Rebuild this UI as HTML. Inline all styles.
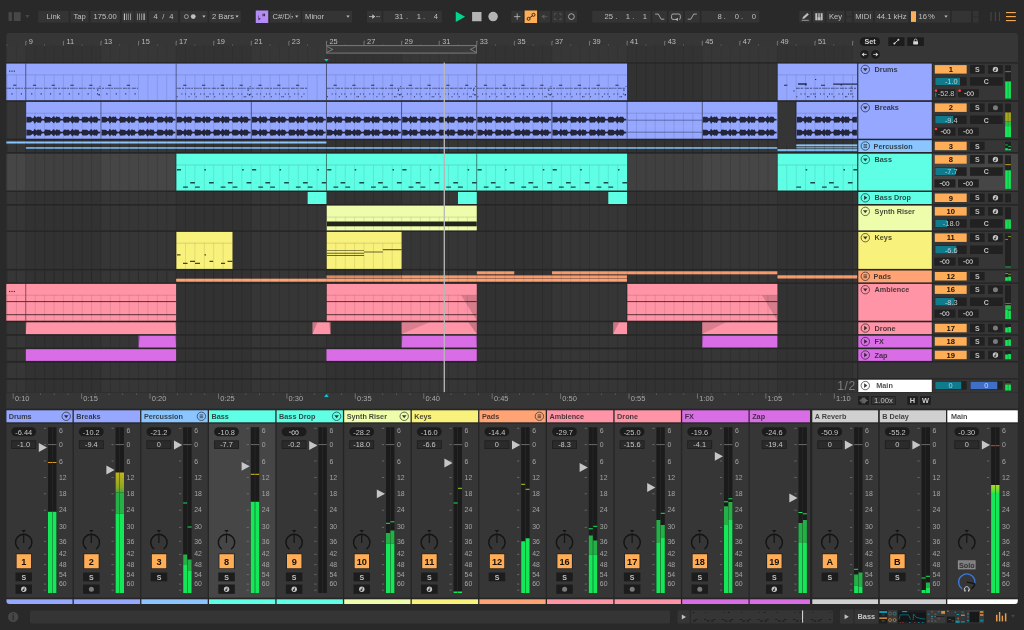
<!DOCTYPE html>
<html lang="en"><head><meta charset="utf-8"><title>Live Set</title>
<style>
html,body{margin:0;padding:0;background:#292929;}
body{width:1024px;height:630px;overflow:hidden;position:relative;font-family:"Liberation Sans", sans-serif;}
.sec{position:absolute;left:0;width:1024px;overflow:hidden;will-change:transform;}
svg{display:block;}
svg text{font-family:"Liberation Sans", sans-serif;}
</style></head><body>
<div id="topbar" class="sec" style="top:0px;height:33px"><svg width="1024" height="33" viewBox="0 0 1024 33">
<rect x="0.00" y="0.00" width="1024.00" height="33.00" fill="#292929"/>
<rect x="8.50" y="12.20" width="3.40" height="8.80" fill="#474747"/>
<rect x="13.80" y="12.20" width="6.90" height="8.80" fill="#474747"/>
<polygon points="25.30,14.95 29.50,14.95 27.40,18.25" fill="#474747"/>
<rect x="38.20" y="10.80" width="30.50" height="11.80" fill="#343434"/>
<text x="53.45" y="18.85" font-size="7.6" fill="#c0c0c0" text-anchor="middle">Link</text>
<rect x="70.40" y="10.80" width="18.30" height="11.80" fill="#343434"/>
<text x="79.55" y="18.85" font-size="7.6" fill="#c0c0c0" text-anchor="middle">Tap</text>
<rect x="90.50" y="10.80" width="29.25" height="11.80" fill="#343434"/>
<text x="105.12" y="18.85" font-size="7.6" fill="#c0c0c0" text-anchor="middle">175.00</text>
<rect x="122.00" y="10.80" width="11.90" height="11.80" fill="#343434"/>
<rect x="123.90" y="13.50" width="1.10" height="6.50" fill="#c0c0c0"/>
<rect x="126.00" y="13.50" width="0.60" height="6.50" fill="#c0c0c0"/>
<rect x="127.90" y="13.50" width="0.60" height="6.50" fill="#c0c0c0"/>
<rect x="130.10" y="13.50" width="0.70" height="6.50" fill="#c0c0c0"/>
<rect x="135.10" y="10.80" width="11.90" height="11.80" fill="#343434"/>
<rect x="137.00" y="13.50" width="0.60" height="6.50" fill="#c0c0c0"/>
<rect x="139.20" y="13.50" width="0.60" height="6.50" fill="#c0c0c0"/>
<rect x="141.40" y="13.50" width="0.70" height="6.50" fill="#c0c0c0"/>
<rect x="143.50" y="13.50" width="1.20" height="6.50" fill="#c0c0c0"/>
<rect x="148.90" y="10.80" width="29.10" height="11.80" fill="#343434"/>
<text x="155.60" y="18.85" font-size="7.6" fill="#c0c0c0" text-anchor="middle">4</text>
<text x="163.30" y="18.85" font-size="7.6" fill="#c0c0c0" text-anchor="middle">/</text>
<text x="171.30" y="18.85" font-size="7.6" fill="#c0c0c0" text-anchor="middle">4</text>
<rect x="180.10" y="10.80" width="27.50" height="11.80" fill="#343434"/>
<circle cx="186.40" cy="16.60" r="2.00" fill="none" stroke="#c0c0c0" stroke-width="0.7"/>
<circle cx="193.25" cy="16.60" r="2.40" fill="#c0c0c0"/>
<polygon points="202.30,15.60 205.50,15.60 203.90,17.80" fill="#c0c0c0"/>
<rect x="209.25" y="10.80" width="31.50" height="11.80" fill="#343434"/>
<text x="212.00" y="18.85" font-size="7.6" fill="#c0c0c0">2 Bars</text>
<polygon points="235.40,15.60 238.60,15.60 237.00,17.80" fill="#c0c0c0"/>
<rect x="255.75" y="10.50" width="12.50" height="12.50" fill="#b58bf7"/>
<text x="257.90" y="20.30" font-size="5.6" fill="#1a1a1a" font-weight="bold">♭</text>
<rect x="262.60" y="13.70" width="0.90" height="2.50" fill="#1a1a1a"/>
<rect x="263.90" y="13.70" width="0.90" height="2.50" fill="#1a1a1a"/>
<rect x="270.10" y="10.80" width="30.65" height="11.80" fill="#343434"/>
<text x="272.60" y="18.85" font-size="7.6" fill="#c0c0c0">C#/D</text>
<text x="290.40" y="18.85" font-size="7.6" fill="#c0c0c0" font-family='"DejaVu Sans", sans-serif' clip-path="url(#cflat)">♭</text>
<clipPath id="cflat"><rect x="288" y="10" width="5.2" height="13"/></clipPath>
<polygon points="295.15,15.60 298.35,15.60 296.75,17.80" fill="#c0c0c0"/>
<rect x="302.25" y="10.80" width="49.75" height="11.80" fill="#343434"/>
<text x="305.10" y="18.85" font-size="7.6" fill="#c0c0c0">Minor</text>
<polygon points="346.40,15.60 349.60,15.60 348.00,17.80" fill="#c0c0c0"/>
<rect x="367.00" y="10.80" width="14.75" height="11.80" fill="#343434"/>
<line x1="369.00" y1="16.60" x2="374.40" y2="16.60" stroke="#c0c0c0" stroke-width="0.8"/>
<polygon points="372.30,14.30 375.20,16.60 372.30,18.90" fill="#c0c0c0"/>
<line x1="376.20" y1="16.60" x2="379.80" y2="16.60" stroke="#c0c0c0" stroke-width="0.7" stroke-dasharray="1.6 0.6"/>
<rect x="383.25" y="10.80" width="58.50" height="11.80" fill="#343434"/>
<text x="403.30" y="18.85" font-size="7.6" fill="#c0c0c0" text-anchor="end">31</text>
<text x="407.00" y="18.85" font-size="7.6" fill="#c0c0c0" text-anchor="middle">.</text>
<text x="418.90" y="18.85" font-size="7.6" fill="#c0c0c0" text-anchor="middle">1</text>
<text x="424.00" y="18.85" font-size="7.6" fill="#c0c0c0" text-anchor="middle">.</text>
<text x="435.75" y="18.85" font-size="7.6" fill="#c0c0c0" text-anchor="middle">4</text>
<polygon points="455.75,11.50 465.10,16.70 455.75,21.90" fill="#03d58f"/>
<rect x="472.10" y="12.00" width="9.40" height="9.25" fill="#b4b4b4"/>
<circle cx="493.10" cy="16.60" r="4.75" fill="#b4b4b4"/>
<rect x="511.25" y="10.80" width="11.75" height="11.80" fill="#343434"/>
<line x1="514.10" y1="16.60" x2="520.30" y2="16.60" stroke="#c0c0c0" stroke-width="0.8"/>
<line x1="517.20" y1="13.50" x2="517.20" y2="19.70" stroke="#c0c0c0" stroke-width="0.8"/>
<rect x="524.60" y="10.50" width="12.50" height="12.50" fill="#ffad56"/>
<circle cx="528.60" cy="18.80" r="1.50" fill="none" stroke="#2a2012" stroke-width="0.9"/>
<circle cx="533.50" cy="14.80" r="1.50" fill="none" stroke="#2a2012" stroke-width="0.9"/>
<line x1="529.60" y1="17.80" x2="532.50" y2="15.80" stroke="#2a2012" stroke-width="0.9"/>
<rect x="538.75" y="10.80" width="11.50" height="11.80" fill="#343434"/>
<line x1="543.00" y1="16.60" x2="547.50" y2="16.60" stroke="#5a5a5a" stroke-width="0.8"/>
<polygon points="541.30,16.60 544.50,14.30 544.50,18.90" fill="#5a5a5a"/>
<rect x="551.90" y="10.80" width="11.85" height="11.80" fill="#343434"/>
<path d="M554.60,15.50 L554.60,13.70 L556.40,13.70 M561.00,15.50 L561.00,13.70 L559.20,13.70 M554.60,17.80 L554.60,19.60 L556.40,19.60 M561.00,17.80 L561.00,19.60 L559.20,19.60 " fill="none" stroke="#5a5a5a" stroke-width="0.8"/>
<rect x="565.25" y="10.80" width="11.85" height="11.80" fill="#343434"/>
<circle cx="571.40" cy="16.60" r="2.90" fill="none" stroke="#c0c0c0" stroke-width="0.8"/>
<rect x="592.25" y="10.80" width="58.50" height="11.80" fill="#343434"/>
<text x="612.90" y="18.85" font-size="7.6" fill="#c0c0c0" text-anchor="end">25</text>
<text x="616.25" y="18.85" font-size="7.6" fill="#c0c0c0" text-anchor="middle">.</text>
<text x="627.90" y="18.85" font-size="7.6" fill="#c0c0c0" text-anchor="middle">1</text>
<text x="633.25" y="18.85" font-size="7.6" fill="#c0c0c0" text-anchor="middle">.</text>
<text x="644.75" y="18.85" font-size="7.6" fill="#c0c0c0" text-anchor="middle">1</text>
<rect x="652.25" y="10.80" width="14.65" height="11.80" fill="#343434"/>
<path d="M655.2,14.1 L658.3,14.1 L661.2,19.2 L664.3,19.2" fill="none" stroke="#c0c0c0" stroke-width="0.8"/>
<rect x="668.50" y="10.80" width="14.60" height="11.80" fill="#343434"/>
<path d="M677,19.4 L673,19.4 Q671.6,19.4 671.6,18 L671.6,15.5 Q671.6,14 673,14 L678.8,14 Q680.3,14 680.3,15.5 L680.3,18 Q680.3,19.4 679.3,19.4" fill="none" stroke="#c0c0c0" stroke-width="0.8"/>
<polygon points="675.30,19.40 677.90,17.70 677.90,21.10" fill="#c0c0c0"/>
<rect x="684.75" y="10.80" width="15.00" height="11.80" fill="#343434"/>
<path d="M687.7,19.2 L690.8,19.2 L693.7,14.1 L696.8,14.1" fill="none" stroke="#c0c0c0" stroke-width="0.8"/>
<rect x="701.40" y="10.80" width="57.85" height="11.80" fill="#343434"/>
<text x="719.50" y="18.85" font-size="7.6" fill="#c0c0c0" text-anchor="middle">8</text>
<text x="724.90" y="18.85" font-size="7.6" fill="#c0c0c0" text-anchor="middle">.</text>
<text x="736.75" y="18.85" font-size="7.6" fill="#c0c0c0" text-anchor="middle">0</text>
<text x="742.00" y="18.85" font-size="7.6" fill="#c0c0c0" text-anchor="middle">.</text>
<text x="753.90" y="18.85" font-size="7.6" fill="#c0c0c0" text-anchor="middle">0</text>
<rect x="799.25" y="10.80" width="11.75" height="11.80" fill="#343434"/>
<polygon points="802.40,18.90 802.90,17.00 807.30,12.90 808.90,14.40 804.40,18.60" fill="#c0c0c0"/>
<line x1="801.60" y1="20.30" x2="808.80" y2="20.30" stroke="#c0c0c0" stroke-width="0.7"/>
<rect x="813.00" y="10.80" width="11.75" height="11.80" fill="#343434"/>
<rect x="815.30" y="13.20" width="7.30" height="7.10" fill="#c0c0c0"/>
<rect x="817.30" y="13.20" width="1.00" height="4.20" fill="#343434"/>
<rect x="819.70" y="13.20" width="1.00" height="4.20" fill="#343434"/>
<rect x="817.60" y="17.40" width="0.40" height="2.90" fill="#343434"/>
<rect x="820.00" y="17.40" width="0.40" height="2.90" fill="#343434"/>
<rect x="826.40" y="10.80" width="18.10" height="11.80" fill="#343434"/>
<text x="835.45" y="18.85" font-size="7.6" fill="#c0c0c0" text-anchor="middle">Key</text>
<rect x="846.10" y="11.00" width="5.90" height="5.50" fill="#343434"/>
<rect x="846.10" y="17.25" width="5.90" height="5.25" fill="#343434"/>
<rect x="853.50" y="10.80" width="19.50" height="11.80" fill="#343434"/>
<text x="863.25" y="18.85" font-size="7.6" fill="#c0c0c0" text-anchor="middle">MIDI</text>
<rect x="874.75" y="10.80" width="33.75" height="11.80" fill="#343434"/>
<text x="891.62" y="18.85" font-size="7.6" fill="#c0c0c0" text-anchor="middle">44.1 kHz</text>
<rect x="910.40" y="10.80" width="39.60" height="11.80" fill="#343434"/>
<rect x="911.00" y="11.25" width="5.00" height="10.65" fill="#ffad56"/>
<text x="918.50" y="18.85" font-size="7.6" fill="#c0c0c0">16</text>
<text x="928.00" y="18.85" font-size="7.6" fill="#c0c0c0">%</text>
<polygon points="944.40,15.60 947.60,15.60 946.00,17.80" fill="#c0c0c0"/>
<rect x="951.60" y="10.80" width="19.40" height="11.80" fill="#343434"/>
<rect x="972.90" y="11.00" width="5.60" height="5.50" fill="#343434"/>
<rect x="972.90" y="17.25" width="5.60" height="5.25" fill="#343434"/>
<line x1="991.00" y1="11.90" x2="991.00" y2="21.00" stroke="#494949" stroke-width="1.0"/>
<line x1="995.30" y1="11.90" x2="995.30" y2="21.00" stroke="#494949" stroke-width="1.0"/>
<line x1="999.40" y1="11.90" x2="999.40" y2="21.00" stroke="#494949" stroke-width="1.0"/>
<line x1="1006.00" y1="12.60" x2="1015.80" y2="12.60" stroke="#ffad56" stroke-width="1.1"/>
<line x1="1006.00" y1="16.60" x2="1015.80" y2="16.60" stroke="#ffad56" stroke-width="1.1"/>
<line x1="1006.00" y1="20.60" x2="1015.80" y2="20.60" stroke="#ffad56" stroke-width="1.1"/>
</svg></div>
<div id="arrangement" class="sec" style="top:33px;height:376px"><svg width="1024" height="376" viewBox="0 33 1024 376">
<rect x="6.30" y="33.10" width="1011.70" height="386.90" rx="3" fill="#363636"/>
<rect x="6.30" y="45.50" width="850.90" height="16.80" fill="#333333"/>
<rect x="6.30" y="45.50" width="19.50" height="16.80" fill="#fff" fill-opacity="0.022"/>
<rect x="100.96" y="45.50" width="75.16" height="16.80" fill="#fff" fill-opacity="0.022"/>
<rect x="251.28" y="45.50" width="75.16" height="16.80" fill="#fff" fill-opacity="0.022"/>
<rect x="401.60" y="45.50" width="75.16" height="16.80" fill="#fff" fill-opacity="0.022"/>
<rect x="551.92" y="45.50" width="75.16" height="16.80" fill="#fff" fill-opacity="0.022"/>
<rect x="702.24" y="45.50" width="75.16" height="16.80" fill="#fff" fill-opacity="0.022"/>
<rect x="852.56" y="45.50" width="4.64" height="16.80" fill="#fff" fill-opacity="0.022"/>
<path d="M7.01,45.50V62.30M16.41,45.50V62.30M25.80,45.50V62.30M35.20,45.50V62.30M44.59,45.50V62.30M53.98,45.50V62.30M63.38,45.50V62.30M72.77,45.50V62.30M82.17,45.50V62.30M91.56,45.50V62.30M100.96,45.50V62.30M110.35,45.50V62.30M119.75,45.50V62.30M129.15,45.50V62.30M138.54,45.50V62.30M147.94,45.50V62.30M157.33,45.50V62.30M166.72,45.50V62.30M176.12,45.50V62.30M185.52,45.50V62.30M194.91,45.50V62.30M204.31,45.50V62.30M213.70,45.50V62.30M223.09,45.50V62.30M232.49,45.50V62.30M241.88,45.50V62.30M251.28,45.50V62.30M260.68,45.50V62.30M270.07,45.50V62.30M279.46,45.50V62.30M288.86,45.50V62.30M298.25,45.50V62.30M307.65,45.50V62.30M317.05,45.50V62.30M326.44,45.50V62.30M335.83,45.50V62.30M345.23,45.50V62.30M354.62,45.50V62.30M364.02,45.50V62.30M373.42,45.50V62.30M382.81,45.50V62.30M392.20,45.50V62.30M401.60,45.50V62.30M411.00,45.50V62.30M420.39,45.50V62.30M429.78,45.50V62.30M439.18,45.50V62.30M448.57,45.50V62.30M457.97,45.50V62.30M467.37,45.50V62.30M476.76,45.50V62.30M486.15,45.50V62.30M495.55,45.50V62.30M504.94,45.50V62.30M514.34,45.50V62.30M523.74,45.50V62.30M533.13,45.50V62.30M542.52,45.50V62.30M551.92,45.50V62.30M561.31,45.50V62.30M570.71,45.50V62.30M580.10,45.50V62.30M589.50,45.50V62.30M598.89,45.50V62.30M608.29,45.50V62.30M617.68,45.50V62.30M627.08,45.50V62.30M636.47,45.50V62.30M645.87,45.50V62.30M655.26,45.50V62.30M664.66,45.50V62.30M674.05,45.50V62.30M683.45,45.50V62.30M692.84,45.50V62.30M702.24,45.50V62.30M711.63,45.50V62.30M721.03,45.50V62.30M730.42,45.50V62.30M739.82,45.50V62.30M749.21,45.50V62.30M758.61,45.50V62.30M768.00,45.50V62.30M777.40,45.50V62.30M786.79,45.50V62.30M796.19,45.50V62.30M805.58,45.50V62.30M814.98,45.50V62.30M824.37,45.50V62.30M833.77,45.50V62.30M843.16,45.50V62.30M852.56,45.50V62.30" fill="none" stroke="#000" stroke-width="0.9" stroke-opacity="0.08"/>
<rect x="6.61" y="44.60" width="0.80" height="1.00" fill="#7a7a7a"/>
<path d="M25.80,45.6V41.3h0.9" fill="none" stroke="#8e8e8e" stroke-width="0.7"/>
<text x="28.80" y="44.30" font-size="7.4" fill="#bdbdbd">9</text>
<rect x="44.19" y="44.60" width="0.80" height="1.00" fill="#7a7a7a"/>
<path d="M63.38,45.6V41.3h0.9" fill="none" stroke="#8e8e8e" stroke-width="0.7"/>
<text x="66.38" y="44.30" font-size="7.4" fill="#bdbdbd">11</text>
<rect x="81.77" y="44.60" width="0.80" height="1.00" fill="#7a7a7a"/>
<path d="M100.96,45.6V41.3h0.9" fill="none" stroke="#8e8e8e" stroke-width="0.7"/>
<text x="103.96" y="44.30" font-size="7.4" fill="#bdbdbd">13</text>
<rect x="119.35" y="44.60" width="0.80" height="1.00" fill="#7a7a7a"/>
<path d="M138.54,45.6V41.3h0.9" fill="none" stroke="#8e8e8e" stroke-width="0.7"/>
<text x="141.54" y="44.30" font-size="7.4" fill="#bdbdbd">15</text>
<rect x="156.93" y="44.60" width="0.80" height="1.00" fill="#7a7a7a"/>
<path d="M176.12,45.6V41.3h0.9" fill="none" stroke="#8e8e8e" stroke-width="0.7"/>
<text x="179.12" y="44.30" font-size="7.4" fill="#bdbdbd">17</text>
<rect x="194.51" y="44.60" width="0.80" height="1.00" fill="#7a7a7a"/>
<path d="M213.70,45.6V41.3h0.9" fill="none" stroke="#8e8e8e" stroke-width="0.7"/>
<text x="216.70" y="44.30" font-size="7.4" fill="#bdbdbd">19</text>
<rect x="232.09" y="44.60" width="0.80" height="1.00" fill="#7a7a7a"/>
<path d="M251.28,45.6V41.3h0.9" fill="none" stroke="#8e8e8e" stroke-width="0.7"/>
<text x="254.28" y="44.30" font-size="7.4" fill="#bdbdbd">21</text>
<rect x="269.67" y="44.60" width="0.80" height="1.00" fill="#7a7a7a"/>
<path d="M288.86,45.6V41.3h0.9" fill="none" stroke="#8e8e8e" stroke-width="0.7"/>
<text x="291.86" y="44.30" font-size="7.4" fill="#bdbdbd">23</text>
<rect x="307.25" y="44.60" width="0.80" height="1.00" fill="#7a7a7a"/>
<path d="M326.44,45.6V41.3h0.9" fill="none" stroke="#8e8e8e" stroke-width="0.7"/>
<text x="329.44" y="44.30" font-size="7.4" fill="#bdbdbd">25</text>
<rect x="344.83" y="44.60" width="0.80" height="1.00" fill="#7a7a7a"/>
<path d="M364.02,45.6V41.3h0.9" fill="none" stroke="#8e8e8e" stroke-width="0.7"/>
<text x="367.02" y="44.30" font-size="7.4" fill="#bdbdbd">27</text>
<rect x="382.41" y="44.60" width="0.80" height="1.00" fill="#7a7a7a"/>
<path d="M401.60,45.6V41.3h0.9" fill="none" stroke="#8e8e8e" stroke-width="0.7"/>
<text x="404.60" y="44.30" font-size="7.4" fill="#bdbdbd">29</text>
<rect x="419.99" y="44.60" width="0.80" height="1.00" fill="#7a7a7a"/>
<path d="M439.18,45.6V41.3h0.9" fill="none" stroke="#8e8e8e" stroke-width="0.7"/>
<text x="442.18" y="44.30" font-size="7.4" fill="#bdbdbd">31</text>
<rect x="457.57" y="44.60" width="0.80" height="1.00" fill="#7a7a7a"/>
<path d="M476.76,45.6V41.3h0.9" fill="none" stroke="#8e8e8e" stroke-width="0.7"/>
<text x="479.76" y="44.30" font-size="7.4" fill="#bdbdbd">33</text>
<rect x="495.15" y="44.60" width="0.80" height="1.00" fill="#7a7a7a"/>
<path d="M514.34,45.6V41.3h0.9" fill="none" stroke="#8e8e8e" stroke-width="0.7"/>
<text x="517.34" y="44.30" font-size="7.4" fill="#bdbdbd">35</text>
<rect x="532.73" y="44.60" width="0.80" height="1.00" fill="#7a7a7a"/>
<path d="M551.92,45.6V41.3h0.9" fill="none" stroke="#8e8e8e" stroke-width="0.7"/>
<text x="554.92" y="44.30" font-size="7.4" fill="#bdbdbd">37</text>
<rect x="570.31" y="44.60" width="0.80" height="1.00" fill="#7a7a7a"/>
<path d="M589.50,45.6V41.3h0.9" fill="none" stroke="#8e8e8e" stroke-width="0.7"/>
<text x="592.50" y="44.30" font-size="7.4" fill="#bdbdbd">39</text>
<rect x="607.89" y="44.60" width="0.80" height="1.00" fill="#7a7a7a"/>
<path d="M627.08,45.6V41.3h0.9" fill="none" stroke="#8e8e8e" stroke-width="0.7"/>
<text x="630.08" y="44.30" font-size="7.4" fill="#bdbdbd">41</text>
<rect x="645.47" y="44.60" width="0.80" height="1.00" fill="#7a7a7a"/>
<path d="M664.66,45.6V41.3h0.9" fill="none" stroke="#8e8e8e" stroke-width="0.7"/>
<text x="667.66" y="44.30" font-size="7.4" fill="#bdbdbd">43</text>
<rect x="683.05" y="44.60" width="0.80" height="1.00" fill="#7a7a7a"/>
<path d="M702.24,45.6V41.3h0.9" fill="none" stroke="#8e8e8e" stroke-width="0.7"/>
<text x="705.24" y="44.30" font-size="7.4" fill="#bdbdbd">45</text>
<rect x="720.63" y="44.60" width="0.80" height="1.00" fill="#7a7a7a"/>
<path d="M739.82,45.6V41.3h0.9" fill="none" stroke="#8e8e8e" stroke-width="0.7"/>
<text x="742.82" y="44.30" font-size="7.4" fill="#bdbdbd">47</text>
<rect x="758.21" y="44.60" width="0.80" height="1.00" fill="#7a7a7a"/>
<path d="M777.40,45.6V41.3h0.9" fill="none" stroke="#8e8e8e" stroke-width="0.7"/>
<text x="780.40" y="44.30" font-size="7.4" fill="#bdbdbd">49</text>
<rect x="795.79" y="44.60" width="0.80" height="1.00" fill="#7a7a7a"/>
<path d="M814.98,45.6V41.3h0.9" fill="none" stroke="#8e8e8e" stroke-width="0.7"/>
<text x="817.98" y="44.30" font-size="7.4" fill="#bdbdbd">51</text>
<rect x="833.37" y="44.60" width="0.80" height="1.00" fill="#7a7a7a"/>
<path d="M852.56,45.6V41.3h0.9" fill="none" stroke="#8e8e8e" stroke-width="0.7"/>
<rect x="326.44" y="45.30" width="150.32" height="8.10" fill="#3a3a3a"/>
<line x1="326.44" y1="45.60" x2="476.76" y2="45.60" stroke="#8c8c8c" stroke-width="0.8"/>
<line x1="326.44" y1="53.10" x2="476.76" y2="53.10" stroke="#8c8c8c" stroke-width="0.8"/>
<line x1="326.74" y1="45.30" x2="326.74" y2="53.40" stroke="#8c8c8c" stroke-width="0.7"/>
<line x1="476.46" y1="45.30" x2="476.46" y2="53.40" stroke="#8c8c8c" stroke-width="0.7"/>
<path d="M327.24,46.6 L332.84,49.4 L327.24,52.2" fill="none" stroke="#9a9a9a" stroke-width="0.7"/>
<path d="M475.96,46.6 L470.36,49.4 L475.96,52.2" fill="none" stroke="#9a9a9a" stroke-width="0.7"/>
<polygon points="324.04,59.00 328.84,59.00 326.44,61.60" fill="#12c3d6"/>
<rect x="859.80" y="37.30" width="20.30" height="8.70" rx="4.3" fill="#1c1c1c"/>
<text x="870.00" y="44.20" font-size="7.2" fill="#d4d4d4" text-anchor="middle" font-weight="bold">Set</text>
<rect x="888.30" y="37.30" width="16.20" height="8.70" fill="#1c1c1c"/>
<line x1="894.60" y1="43.30" x2="898.20" y2="40.00" stroke="#d8d8d8" stroke-width="0.9"/>
<circle cx="894.40" cy="43.50" r="1.00" fill="#d8d8d8"/>
<circle cx="898.40" cy="39.80" r="1.00" fill="#d8d8d8"/>
<rect x="907.30" y="37.30" width="16.60" height="8.70" fill="#1c1c1c"/>
<rect x="913.20" y="41.30" width="4.80" height="3.10" rx="0.4" fill="#d8d8d8"/>
<path d="M914.2,41.5 V40.4 a1.4,1.4 0 0 1 2.8,0 V41.5" fill="none" stroke="#d8d8d8" stroke-width="0.8"/>
<circle cx="864.50" cy="54.40" r="4.30" fill="#1c1c1c"/>
<line x1="862.30" y1="54.40" x2="866.70" y2="54.40" stroke="#d0d0d0" stroke-width="0.9"/>
<polygon points="861.60,54.40 864.10,52.40 864.10,56.40" fill="#d0d0d0"/>
<circle cx="875.50" cy="54.40" r="4.30" fill="#1c1c1c"/>
<line x1="873.30" y1="54.40" x2="877.70" y2="54.40" stroke="#d0d0d0" stroke-width="0.9"/>
<polygon points="878.40,54.40 875.90,52.40 875.90,56.40" fill="#d0d0d0"/>
<rect x="6.30" y="62.20" width="1011.70" height="330.40" fill="#262626"/>
<rect x="6.30" y="63.60" width="850.90" height="36.60" fill="#323232"/>
<rect x="6.30" y="63.60" width="19.50" height="36.60" fill="#fff" fill-opacity="0.02"/>
<rect x="100.96" y="63.60" width="75.16" height="36.60" fill="#fff" fill-opacity="0.02"/>
<rect x="251.28" y="63.60" width="75.16" height="36.60" fill="#fff" fill-opacity="0.02"/>
<rect x="401.60" y="63.60" width="75.16" height="36.60" fill="#fff" fill-opacity="0.02"/>
<rect x="551.92" y="63.60" width="75.16" height="36.60" fill="#fff" fill-opacity="0.02"/>
<rect x="702.24" y="63.60" width="75.16" height="36.60" fill="#fff" fill-opacity="0.02"/>
<rect x="852.56" y="63.60" width="4.64" height="36.60" fill="#fff" fill-opacity="0.02"/>
<path d="M7.01,63.60V100.20M16.41,63.60V100.20M25.80,63.60V100.20M35.20,63.60V100.20M44.59,63.60V100.20M53.98,63.60V100.20M63.38,63.60V100.20M72.77,63.60V100.20M82.17,63.60V100.20M91.56,63.60V100.20M100.96,63.60V100.20M110.35,63.60V100.20M119.75,63.60V100.20M129.15,63.60V100.20M138.54,63.60V100.20M147.94,63.60V100.20M157.33,63.60V100.20M166.72,63.60V100.20M176.12,63.60V100.20M185.52,63.60V100.20M194.91,63.60V100.20M204.31,63.60V100.20M213.70,63.60V100.20M223.09,63.60V100.20M232.49,63.60V100.20M241.88,63.60V100.20M251.28,63.60V100.20M260.68,63.60V100.20M270.07,63.60V100.20M279.46,63.60V100.20M288.86,63.60V100.20M298.25,63.60V100.20M307.65,63.60V100.20M317.05,63.60V100.20M326.44,63.60V100.20M335.83,63.60V100.20M345.23,63.60V100.20M354.62,63.60V100.20M364.02,63.60V100.20M373.42,63.60V100.20M382.81,63.60V100.20M392.20,63.60V100.20M401.60,63.60V100.20M411.00,63.60V100.20M420.39,63.60V100.20M429.78,63.60V100.20M439.18,63.60V100.20M448.57,63.60V100.20M457.97,63.60V100.20M467.37,63.60V100.20M476.76,63.60V100.20M486.15,63.60V100.20M495.55,63.60V100.20M504.94,63.60V100.20M514.34,63.60V100.20M523.74,63.60V100.20M533.13,63.60V100.20M542.52,63.60V100.20M551.92,63.60V100.20M561.31,63.60V100.20M570.71,63.60V100.20M580.10,63.60V100.20M589.50,63.60V100.20M598.89,63.60V100.20M608.29,63.60V100.20M617.68,63.60V100.20M627.08,63.60V100.20M636.47,63.60V100.20M645.87,63.60V100.20M655.26,63.60V100.20M664.66,63.60V100.20M674.05,63.60V100.20M683.45,63.60V100.20M692.84,63.60V100.20M702.24,63.60V100.20M711.63,63.60V100.20M721.03,63.60V100.20M730.42,63.60V100.20M739.82,63.60V100.20M749.21,63.60V100.20M758.61,63.60V100.20M768.00,63.60V100.20M777.40,63.60V100.20M786.79,63.60V100.20M796.19,63.60V100.20M805.58,63.60V100.20M814.98,63.60V100.20M824.37,63.60V100.20M833.77,63.60V100.20M843.16,63.60V100.20M852.56,63.60V100.20" fill="none" stroke="#000" stroke-width="0.9" stroke-opacity="0.13"/>
<rect x="932.60" y="63.60" width="85.40" height="36.60" fill="#363636"/>
<rect x="6.30" y="101.90" width="850.90" height="36.80" fill="#323232"/>
<rect x="6.30" y="101.90" width="19.50" height="36.80" fill="#fff" fill-opacity="0.02"/>
<rect x="100.96" y="101.90" width="75.16" height="36.80" fill="#fff" fill-opacity="0.02"/>
<rect x="251.28" y="101.90" width="75.16" height="36.80" fill="#fff" fill-opacity="0.02"/>
<rect x="401.60" y="101.90" width="75.16" height="36.80" fill="#fff" fill-opacity="0.02"/>
<rect x="551.92" y="101.90" width="75.16" height="36.80" fill="#fff" fill-opacity="0.02"/>
<rect x="702.24" y="101.90" width="75.16" height="36.80" fill="#fff" fill-opacity="0.02"/>
<rect x="852.56" y="101.90" width="4.64" height="36.80" fill="#fff" fill-opacity="0.02"/>
<path d="M7.01,101.90V138.70M16.41,101.90V138.70M25.80,101.90V138.70M35.20,101.90V138.70M44.59,101.90V138.70M53.98,101.90V138.70M63.38,101.90V138.70M72.77,101.90V138.70M82.17,101.90V138.70M91.56,101.90V138.70M100.96,101.90V138.70M110.35,101.90V138.70M119.75,101.90V138.70M129.15,101.90V138.70M138.54,101.90V138.70M147.94,101.90V138.70M157.33,101.90V138.70M166.72,101.90V138.70M176.12,101.90V138.70M185.52,101.90V138.70M194.91,101.90V138.70M204.31,101.90V138.70M213.70,101.90V138.70M223.09,101.90V138.70M232.49,101.90V138.70M241.88,101.90V138.70M251.28,101.90V138.70M260.68,101.90V138.70M270.07,101.90V138.70M279.46,101.90V138.70M288.86,101.90V138.70M298.25,101.90V138.70M307.65,101.90V138.70M317.05,101.90V138.70M326.44,101.90V138.70M335.83,101.90V138.70M345.23,101.90V138.70M354.62,101.90V138.70M364.02,101.90V138.70M373.42,101.90V138.70M382.81,101.90V138.70M392.20,101.90V138.70M401.60,101.90V138.70M411.00,101.90V138.70M420.39,101.90V138.70M429.78,101.90V138.70M439.18,101.90V138.70M448.57,101.90V138.70M457.97,101.90V138.70M467.37,101.90V138.70M476.76,101.90V138.70M486.15,101.90V138.70M495.55,101.90V138.70M504.94,101.90V138.70M514.34,101.90V138.70M523.74,101.90V138.70M533.13,101.90V138.70M542.52,101.90V138.70M551.92,101.90V138.70M561.31,101.90V138.70M570.71,101.90V138.70M580.10,101.90V138.70M589.50,101.90V138.70M598.89,101.90V138.70M608.29,101.90V138.70M617.68,101.90V138.70M627.08,101.90V138.70M636.47,101.90V138.70M645.87,101.90V138.70M655.26,101.90V138.70M664.66,101.90V138.70M674.05,101.90V138.70M683.45,101.90V138.70M692.84,101.90V138.70M702.24,101.90V138.70M711.63,101.90V138.70M721.03,101.90V138.70M730.42,101.90V138.70M739.82,101.90V138.70M749.21,101.90V138.70M758.61,101.90V138.70M768.00,101.90V138.70M777.40,101.90V138.70M786.79,101.90V138.70M796.19,101.90V138.70M805.58,101.90V138.70M814.98,101.90V138.70M824.37,101.90V138.70M833.77,101.90V138.70M843.16,101.90V138.70M852.56,101.90V138.70" fill="none" stroke="#000" stroke-width="0.9" stroke-opacity="0.13"/>
<rect x="932.60" y="101.90" width="85.40" height="36.80" fill="#363636"/>
<rect x="6.30" y="140.20" width="850.90" height="11.80" fill="#323232"/>
<rect x="6.30" y="140.20" width="19.50" height="11.80" fill="#fff" fill-opacity="0.02"/>
<rect x="100.96" y="140.20" width="75.16" height="11.80" fill="#fff" fill-opacity="0.02"/>
<rect x="251.28" y="140.20" width="75.16" height="11.80" fill="#fff" fill-opacity="0.02"/>
<rect x="401.60" y="140.20" width="75.16" height="11.80" fill="#fff" fill-opacity="0.02"/>
<rect x="551.92" y="140.20" width="75.16" height="11.80" fill="#fff" fill-opacity="0.02"/>
<rect x="702.24" y="140.20" width="75.16" height="11.80" fill="#fff" fill-opacity="0.02"/>
<rect x="852.56" y="140.20" width="4.64" height="11.80" fill="#fff" fill-opacity="0.02"/>
<path d="M7.01,140.20V152.00M16.41,140.20V152.00M25.80,140.20V152.00M35.20,140.20V152.00M44.59,140.20V152.00M53.98,140.20V152.00M63.38,140.20V152.00M72.77,140.20V152.00M82.17,140.20V152.00M91.56,140.20V152.00M100.96,140.20V152.00M110.35,140.20V152.00M119.75,140.20V152.00M129.15,140.20V152.00M138.54,140.20V152.00M147.94,140.20V152.00M157.33,140.20V152.00M166.72,140.20V152.00M176.12,140.20V152.00M185.52,140.20V152.00M194.91,140.20V152.00M204.31,140.20V152.00M213.70,140.20V152.00M223.09,140.20V152.00M232.49,140.20V152.00M241.88,140.20V152.00M251.28,140.20V152.00M260.68,140.20V152.00M270.07,140.20V152.00M279.46,140.20V152.00M288.86,140.20V152.00M298.25,140.20V152.00M307.65,140.20V152.00M317.05,140.20V152.00M326.44,140.20V152.00M335.83,140.20V152.00M345.23,140.20V152.00M354.62,140.20V152.00M364.02,140.20V152.00M373.42,140.20V152.00M382.81,140.20V152.00M392.20,140.20V152.00M401.60,140.20V152.00M411.00,140.20V152.00M420.39,140.20V152.00M429.78,140.20V152.00M439.18,140.20V152.00M448.57,140.20V152.00M457.97,140.20V152.00M467.37,140.20V152.00M476.76,140.20V152.00M486.15,140.20V152.00M495.55,140.20V152.00M504.94,140.20V152.00M514.34,140.20V152.00M523.74,140.20V152.00M533.13,140.20V152.00M542.52,140.20V152.00M551.92,140.20V152.00M561.31,140.20V152.00M570.71,140.20V152.00M580.10,140.20V152.00M589.50,140.20V152.00M598.89,140.20V152.00M608.29,140.20V152.00M617.68,140.20V152.00M627.08,140.20V152.00M636.47,140.20V152.00M645.87,140.20V152.00M655.26,140.20V152.00M664.66,140.20V152.00M674.05,140.20V152.00M683.45,140.20V152.00M692.84,140.20V152.00M702.24,140.20V152.00M711.63,140.20V152.00M721.03,140.20V152.00M730.42,140.20V152.00M739.82,140.20V152.00M749.21,140.20V152.00M758.61,140.20V152.00M768.00,140.20V152.00M777.40,140.20V152.00M786.79,140.20V152.00M796.19,140.20V152.00M805.58,140.20V152.00M814.98,140.20V152.00M824.37,140.20V152.00M833.77,140.20V152.00M843.16,140.20V152.00M852.56,140.20V152.00" fill="none" stroke="#000" stroke-width="0.9" stroke-opacity="0.13"/>
<rect x="932.60" y="140.20" width="85.40" height="11.80" fill="#363636"/>
<rect x="6.30" y="153.70" width="850.90" height="36.80" fill="#404040"/>
<rect x="6.30" y="153.70" width="19.50" height="36.80" fill="#fff" fill-opacity="0.03"/>
<rect x="100.96" y="153.70" width="75.16" height="36.80" fill="#fff" fill-opacity="0.03"/>
<rect x="251.28" y="153.70" width="75.16" height="36.80" fill="#fff" fill-opacity="0.03"/>
<rect x="401.60" y="153.70" width="75.16" height="36.80" fill="#fff" fill-opacity="0.03"/>
<rect x="551.92" y="153.70" width="75.16" height="36.80" fill="#fff" fill-opacity="0.03"/>
<rect x="702.24" y="153.70" width="75.16" height="36.80" fill="#fff" fill-opacity="0.03"/>
<rect x="852.56" y="153.70" width="4.64" height="36.80" fill="#fff" fill-opacity="0.03"/>
<path d="M7.01,153.70V190.50M16.41,153.70V190.50M25.80,153.70V190.50M35.20,153.70V190.50M44.59,153.70V190.50M53.98,153.70V190.50M63.38,153.70V190.50M72.77,153.70V190.50M82.17,153.70V190.50M91.56,153.70V190.50M100.96,153.70V190.50M110.35,153.70V190.50M119.75,153.70V190.50M129.15,153.70V190.50M138.54,153.70V190.50M147.94,153.70V190.50M157.33,153.70V190.50M166.72,153.70V190.50M176.12,153.70V190.50M185.52,153.70V190.50M194.91,153.70V190.50M204.31,153.70V190.50M213.70,153.70V190.50M223.09,153.70V190.50M232.49,153.70V190.50M241.88,153.70V190.50M251.28,153.70V190.50M260.68,153.70V190.50M270.07,153.70V190.50M279.46,153.70V190.50M288.86,153.70V190.50M298.25,153.70V190.50M307.65,153.70V190.50M317.05,153.70V190.50M326.44,153.70V190.50M335.83,153.70V190.50M345.23,153.70V190.50M354.62,153.70V190.50M364.02,153.70V190.50M373.42,153.70V190.50M382.81,153.70V190.50M392.20,153.70V190.50M401.60,153.70V190.50M411.00,153.70V190.50M420.39,153.70V190.50M429.78,153.70V190.50M439.18,153.70V190.50M448.57,153.70V190.50M457.97,153.70V190.50M467.37,153.70V190.50M476.76,153.70V190.50M486.15,153.70V190.50M495.55,153.70V190.50M504.94,153.70V190.50M514.34,153.70V190.50M523.74,153.70V190.50M533.13,153.70V190.50M542.52,153.70V190.50M551.92,153.70V190.50M561.31,153.70V190.50M570.71,153.70V190.50M580.10,153.70V190.50M589.50,153.70V190.50M598.89,153.70V190.50M608.29,153.70V190.50M617.68,153.70V190.50M627.08,153.70V190.50M636.47,153.70V190.50M645.87,153.70V190.50M655.26,153.70V190.50M664.66,153.70V190.50M674.05,153.70V190.50M683.45,153.70V190.50M692.84,153.70V190.50M702.24,153.70V190.50M711.63,153.70V190.50M721.03,153.70V190.50M730.42,153.70V190.50M739.82,153.70V190.50M749.21,153.70V190.50M758.61,153.70V190.50M768.00,153.70V190.50M777.40,153.70V190.50M786.79,153.70V190.50M796.19,153.70V190.50M805.58,153.70V190.50M814.98,153.70V190.50M824.37,153.70V190.50M833.77,153.70V190.50M843.16,153.70V190.50M852.56,153.70V190.50" fill="none" stroke="#000" stroke-width="0.9" stroke-opacity="0.13"/>
<rect x="932.60" y="153.70" width="85.40" height="36.80" fill="#464646"/>
<rect x="6.30" y="192.00" width="850.90" height="12.00" fill="#323232"/>
<rect x="6.30" y="192.00" width="19.50" height="12.00" fill="#fff" fill-opacity="0.02"/>
<rect x="100.96" y="192.00" width="75.16" height="12.00" fill="#fff" fill-opacity="0.02"/>
<rect x="251.28" y="192.00" width="75.16" height="12.00" fill="#fff" fill-opacity="0.02"/>
<rect x="401.60" y="192.00" width="75.16" height="12.00" fill="#fff" fill-opacity="0.02"/>
<rect x="551.92" y="192.00" width="75.16" height="12.00" fill="#fff" fill-opacity="0.02"/>
<rect x="702.24" y="192.00" width="75.16" height="12.00" fill="#fff" fill-opacity="0.02"/>
<rect x="852.56" y="192.00" width="4.64" height="12.00" fill="#fff" fill-opacity="0.02"/>
<path d="M7.01,192.00V204.00M16.41,192.00V204.00M25.80,192.00V204.00M35.20,192.00V204.00M44.59,192.00V204.00M53.98,192.00V204.00M63.38,192.00V204.00M72.77,192.00V204.00M82.17,192.00V204.00M91.56,192.00V204.00M100.96,192.00V204.00M110.35,192.00V204.00M119.75,192.00V204.00M129.15,192.00V204.00M138.54,192.00V204.00M147.94,192.00V204.00M157.33,192.00V204.00M166.72,192.00V204.00M176.12,192.00V204.00M185.52,192.00V204.00M194.91,192.00V204.00M204.31,192.00V204.00M213.70,192.00V204.00M223.09,192.00V204.00M232.49,192.00V204.00M241.88,192.00V204.00M251.28,192.00V204.00M260.68,192.00V204.00M270.07,192.00V204.00M279.46,192.00V204.00M288.86,192.00V204.00M298.25,192.00V204.00M307.65,192.00V204.00M317.05,192.00V204.00M326.44,192.00V204.00M335.83,192.00V204.00M345.23,192.00V204.00M354.62,192.00V204.00M364.02,192.00V204.00M373.42,192.00V204.00M382.81,192.00V204.00M392.20,192.00V204.00M401.60,192.00V204.00M411.00,192.00V204.00M420.39,192.00V204.00M429.78,192.00V204.00M439.18,192.00V204.00M448.57,192.00V204.00M457.97,192.00V204.00M467.37,192.00V204.00M476.76,192.00V204.00M486.15,192.00V204.00M495.55,192.00V204.00M504.94,192.00V204.00M514.34,192.00V204.00M523.74,192.00V204.00M533.13,192.00V204.00M542.52,192.00V204.00M551.92,192.00V204.00M561.31,192.00V204.00M570.71,192.00V204.00M580.10,192.00V204.00M589.50,192.00V204.00M598.89,192.00V204.00M608.29,192.00V204.00M617.68,192.00V204.00M627.08,192.00V204.00M636.47,192.00V204.00M645.87,192.00V204.00M655.26,192.00V204.00M664.66,192.00V204.00M674.05,192.00V204.00M683.45,192.00V204.00M692.84,192.00V204.00M702.24,192.00V204.00M711.63,192.00V204.00M721.03,192.00V204.00M730.42,192.00V204.00M739.82,192.00V204.00M749.21,192.00V204.00M758.61,192.00V204.00M768.00,192.00V204.00M777.40,192.00V204.00M786.79,192.00V204.00M796.19,192.00V204.00M805.58,192.00V204.00M814.98,192.00V204.00M824.37,192.00V204.00M833.77,192.00V204.00M843.16,192.00V204.00M852.56,192.00V204.00" fill="none" stroke="#000" stroke-width="0.9" stroke-opacity="0.13"/>
<rect x="932.60" y="192.00" width="85.40" height="12.00" fill="#363636"/>
<rect x="6.30" y="205.60" width="850.90" height="24.80" fill="#323232"/>
<rect x="6.30" y="205.60" width="19.50" height="24.80" fill="#fff" fill-opacity="0.02"/>
<rect x="100.96" y="205.60" width="75.16" height="24.80" fill="#fff" fill-opacity="0.02"/>
<rect x="251.28" y="205.60" width="75.16" height="24.80" fill="#fff" fill-opacity="0.02"/>
<rect x="401.60" y="205.60" width="75.16" height="24.80" fill="#fff" fill-opacity="0.02"/>
<rect x="551.92" y="205.60" width="75.16" height="24.80" fill="#fff" fill-opacity="0.02"/>
<rect x="702.24" y="205.60" width="75.16" height="24.80" fill="#fff" fill-opacity="0.02"/>
<rect x="852.56" y="205.60" width="4.64" height="24.80" fill="#fff" fill-opacity="0.02"/>
<path d="M7.01,205.60V230.40M16.41,205.60V230.40M25.80,205.60V230.40M35.20,205.60V230.40M44.59,205.60V230.40M53.98,205.60V230.40M63.38,205.60V230.40M72.77,205.60V230.40M82.17,205.60V230.40M91.56,205.60V230.40M100.96,205.60V230.40M110.35,205.60V230.40M119.75,205.60V230.40M129.15,205.60V230.40M138.54,205.60V230.40M147.94,205.60V230.40M157.33,205.60V230.40M166.72,205.60V230.40M176.12,205.60V230.40M185.52,205.60V230.40M194.91,205.60V230.40M204.31,205.60V230.40M213.70,205.60V230.40M223.09,205.60V230.40M232.49,205.60V230.40M241.88,205.60V230.40M251.28,205.60V230.40M260.68,205.60V230.40M270.07,205.60V230.40M279.46,205.60V230.40M288.86,205.60V230.40M298.25,205.60V230.40M307.65,205.60V230.40M317.05,205.60V230.40M326.44,205.60V230.40M335.83,205.60V230.40M345.23,205.60V230.40M354.62,205.60V230.40M364.02,205.60V230.40M373.42,205.60V230.40M382.81,205.60V230.40M392.20,205.60V230.40M401.60,205.60V230.40M411.00,205.60V230.40M420.39,205.60V230.40M429.78,205.60V230.40M439.18,205.60V230.40M448.57,205.60V230.40M457.97,205.60V230.40M467.37,205.60V230.40M476.76,205.60V230.40M486.15,205.60V230.40M495.55,205.60V230.40M504.94,205.60V230.40M514.34,205.60V230.40M523.74,205.60V230.40M533.13,205.60V230.40M542.52,205.60V230.40M551.92,205.60V230.40M561.31,205.60V230.40M570.71,205.60V230.40M580.10,205.60V230.40M589.50,205.60V230.40M598.89,205.60V230.40M608.29,205.60V230.40M617.68,205.60V230.40M627.08,205.60V230.40M636.47,205.60V230.40M645.87,205.60V230.40M655.26,205.60V230.40M664.66,205.60V230.40M674.05,205.60V230.40M683.45,205.60V230.40M692.84,205.60V230.40M702.24,205.60V230.40M711.63,205.60V230.40M721.03,205.60V230.40M730.42,205.60V230.40M739.82,205.60V230.40M749.21,205.60V230.40M758.61,205.60V230.40M768.00,205.60V230.40M777.40,205.60V230.40M786.79,205.60V230.40M796.19,205.60V230.40M805.58,205.60V230.40M814.98,205.60V230.40M824.37,205.60V230.40M833.77,205.60V230.40M843.16,205.60V230.40M852.56,205.60V230.40" fill="none" stroke="#000" stroke-width="0.9" stroke-opacity="0.13"/>
<rect x="932.60" y="205.60" width="85.40" height="24.80" fill="#363636"/>
<rect x="6.30" y="231.90" width="850.90" height="37.00" fill="#323232"/>
<rect x="6.30" y="231.90" width="19.50" height="37.00" fill="#fff" fill-opacity="0.02"/>
<rect x="100.96" y="231.90" width="75.16" height="37.00" fill="#fff" fill-opacity="0.02"/>
<rect x="251.28" y="231.90" width="75.16" height="37.00" fill="#fff" fill-opacity="0.02"/>
<rect x="401.60" y="231.90" width="75.16" height="37.00" fill="#fff" fill-opacity="0.02"/>
<rect x="551.92" y="231.90" width="75.16" height="37.00" fill="#fff" fill-opacity="0.02"/>
<rect x="702.24" y="231.90" width="75.16" height="37.00" fill="#fff" fill-opacity="0.02"/>
<rect x="852.56" y="231.90" width="4.64" height="37.00" fill="#fff" fill-opacity="0.02"/>
<path d="M7.01,231.90V268.90M16.41,231.90V268.90M25.80,231.90V268.90M35.20,231.90V268.90M44.59,231.90V268.90M53.98,231.90V268.90M63.38,231.90V268.90M72.77,231.90V268.90M82.17,231.90V268.90M91.56,231.90V268.90M100.96,231.90V268.90M110.35,231.90V268.90M119.75,231.90V268.90M129.15,231.90V268.90M138.54,231.90V268.90M147.94,231.90V268.90M157.33,231.90V268.90M166.72,231.90V268.90M176.12,231.90V268.90M185.52,231.90V268.90M194.91,231.90V268.90M204.31,231.90V268.90M213.70,231.90V268.90M223.09,231.90V268.90M232.49,231.90V268.90M241.88,231.90V268.90M251.28,231.90V268.90M260.68,231.90V268.90M270.07,231.90V268.90M279.46,231.90V268.90M288.86,231.90V268.90M298.25,231.90V268.90M307.65,231.90V268.90M317.05,231.90V268.90M326.44,231.90V268.90M335.83,231.90V268.90M345.23,231.90V268.90M354.62,231.90V268.90M364.02,231.90V268.90M373.42,231.90V268.90M382.81,231.90V268.90M392.20,231.90V268.90M401.60,231.90V268.90M411.00,231.90V268.90M420.39,231.90V268.90M429.78,231.90V268.90M439.18,231.90V268.90M448.57,231.90V268.90M457.97,231.90V268.90M467.37,231.90V268.90M476.76,231.90V268.90M486.15,231.90V268.90M495.55,231.90V268.90M504.94,231.90V268.90M514.34,231.90V268.90M523.74,231.90V268.90M533.13,231.90V268.90M542.52,231.90V268.90M551.92,231.90V268.90M561.31,231.90V268.90M570.71,231.90V268.90M580.10,231.90V268.90M589.50,231.90V268.90M598.89,231.90V268.90M608.29,231.90V268.90M617.68,231.90V268.90M627.08,231.90V268.90M636.47,231.90V268.90M645.87,231.90V268.90M655.26,231.90V268.90M664.66,231.90V268.90M674.05,231.90V268.90M683.45,231.90V268.90M692.84,231.90V268.90M702.24,231.90V268.90M711.63,231.90V268.90M721.03,231.90V268.90M730.42,231.90V268.90M739.82,231.90V268.90M749.21,231.90V268.90M758.61,231.90V268.90M768.00,231.90V268.90M777.40,231.90V268.90M786.79,231.90V268.90M796.19,231.90V268.90M805.58,231.90V268.90M814.98,231.90V268.90M824.37,231.90V268.90M833.77,231.90V268.90M843.16,231.90V268.90M852.56,231.90V268.90" fill="none" stroke="#000" stroke-width="0.9" stroke-opacity="0.13"/>
<rect x="932.60" y="231.90" width="85.40" height="37.00" fill="#363636"/>
<rect x="6.30" y="270.50" width="850.90" height="11.90" fill="#323232"/>
<rect x="6.30" y="270.50" width="19.50" height="11.90" fill="#fff" fill-opacity="0.02"/>
<rect x="100.96" y="270.50" width="75.16" height="11.90" fill="#fff" fill-opacity="0.02"/>
<rect x="251.28" y="270.50" width="75.16" height="11.90" fill="#fff" fill-opacity="0.02"/>
<rect x="401.60" y="270.50" width="75.16" height="11.90" fill="#fff" fill-opacity="0.02"/>
<rect x="551.92" y="270.50" width="75.16" height="11.90" fill="#fff" fill-opacity="0.02"/>
<rect x="702.24" y="270.50" width="75.16" height="11.90" fill="#fff" fill-opacity="0.02"/>
<rect x="852.56" y="270.50" width="4.64" height="11.90" fill="#fff" fill-opacity="0.02"/>
<path d="M7.01,270.50V282.40M16.41,270.50V282.40M25.80,270.50V282.40M35.20,270.50V282.40M44.59,270.50V282.40M53.98,270.50V282.40M63.38,270.50V282.40M72.77,270.50V282.40M82.17,270.50V282.40M91.56,270.50V282.40M100.96,270.50V282.40M110.35,270.50V282.40M119.75,270.50V282.40M129.15,270.50V282.40M138.54,270.50V282.40M147.94,270.50V282.40M157.33,270.50V282.40M166.72,270.50V282.40M176.12,270.50V282.40M185.52,270.50V282.40M194.91,270.50V282.40M204.31,270.50V282.40M213.70,270.50V282.40M223.09,270.50V282.40M232.49,270.50V282.40M241.88,270.50V282.40M251.28,270.50V282.40M260.68,270.50V282.40M270.07,270.50V282.40M279.46,270.50V282.40M288.86,270.50V282.40M298.25,270.50V282.40M307.65,270.50V282.40M317.05,270.50V282.40M326.44,270.50V282.40M335.83,270.50V282.40M345.23,270.50V282.40M354.62,270.50V282.40M364.02,270.50V282.40M373.42,270.50V282.40M382.81,270.50V282.40M392.20,270.50V282.40M401.60,270.50V282.40M411.00,270.50V282.40M420.39,270.50V282.40M429.78,270.50V282.40M439.18,270.50V282.40M448.57,270.50V282.40M457.97,270.50V282.40M467.37,270.50V282.40M476.76,270.50V282.40M486.15,270.50V282.40M495.55,270.50V282.40M504.94,270.50V282.40M514.34,270.50V282.40M523.74,270.50V282.40M533.13,270.50V282.40M542.52,270.50V282.40M551.92,270.50V282.40M561.31,270.50V282.40M570.71,270.50V282.40M580.10,270.50V282.40M589.50,270.50V282.40M598.89,270.50V282.40M608.29,270.50V282.40M617.68,270.50V282.40M627.08,270.50V282.40M636.47,270.50V282.40M645.87,270.50V282.40M655.26,270.50V282.40M664.66,270.50V282.40M674.05,270.50V282.40M683.45,270.50V282.40M692.84,270.50V282.40M702.24,270.50V282.40M711.63,270.50V282.40M721.03,270.50V282.40M730.42,270.50V282.40M739.82,270.50V282.40M749.21,270.50V282.40M758.61,270.50V282.40M768.00,270.50V282.40M777.40,270.50V282.40M786.79,270.50V282.40M796.19,270.50V282.40M805.58,270.50V282.40M814.98,270.50V282.40M824.37,270.50V282.40M833.77,270.50V282.40M843.16,270.50V282.40M852.56,270.50V282.40" fill="none" stroke="#000" stroke-width="0.9" stroke-opacity="0.13"/>
<rect x="932.60" y="270.50" width="85.40" height="11.90" fill="#363636"/>
<rect x="6.30" y="283.90" width="850.90" height="36.80" fill="#323232"/>
<rect x="6.30" y="283.90" width="19.50" height="36.80" fill="#fff" fill-opacity="0.02"/>
<rect x="100.96" y="283.90" width="75.16" height="36.80" fill="#fff" fill-opacity="0.02"/>
<rect x="251.28" y="283.90" width="75.16" height="36.80" fill="#fff" fill-opacity="0.02"/>
<rect x="401.60" y="283.90" width="75.16" height="36.80" fill="#fff" fill-opacity="0.02"/>
<rect x="551.92" y="283.90" width="75.16" height="36.80" fill="#fff" fill-opacity="0.02"/>
<rect x="702.24" y="283.90" width="75.16" height="36.80" fill="#fff" fill-opacity="0.02"/>
<rect x="852.56" y="283.90" width="4.64" height="36.80" fill="#fff" fill-opacity="0.02"/>
<path d="M7.01,283.90V320.70M16.41,283.90V320.70M25.80,283.90V320.70M35.20,283.90V320.70M44.59,283.90V320.70M53.98,283.90V320.70M63.38,283.90V320.70M72.77,283.90V320.70M82.17,283.90V320.70M91.56,283.90V320.70M100.96,283.90V320.70M110.35,283.90V320.70M119.75,283.90V320.70M129.15,283.90V320.70M138.54,283.90V320.70M147.94,283.90V320.70M157.33,283.90V320.70M166.72,283.90V320.70M176.12,283.90V320.70M185.52,283.90V320.70M194.91,283.90V320.70M204.31,283.90V320.70M213.70,283.90V320.70M223.09,283.90V320.70M232.49,283.90V320.70M241.88,283.90V320.70M251.28,283.90V320.70M260.68,283.90V320.70M270.07,283.90V320.70M279.46,283.90V320.70M288.86,283.90V320.70M298.25,283.90V320.70M307.65,283.90V320.70M317.05,283.90V320.70M326.44,283.90V320.70M335.83,283.90V320.70M345.23,283.90V320.70M354.62,283.90V320.70M364.02,283.90V320.70M373.42,283.90V320.70M382.81,283.90V320.70M392.20,283.90V320.70M401.60,283.90V320.70M411.00,283.90V320.70M420.39,283.90V320.70M429.78,283.90V320.70M439.18,283.90V320.70M448.57,283.90V320.70M457.97,283.90V320.70M467.37,283.90V320.70M476.76,283.90V320.70M486.15,283.90V320.70M495.55,283.90V320.70M504.94,283.90V320.70M514.34,283.90V320.70M523.74,283.90V320.70M533.13,283.90V320.70M542.52,283.90V320.70M551.92,283.90V320.70M561.31,283.90V320.70M570.71,283.90V320.70M580.10,283.90V320.70M589.50,283.90V320.70M598.89,283.90V320.70M608.29,283.90V320.70M617.68,283.90V320.70M627.08,283.90V320.70M636.47,283.90V320.70M645.87,283.90V320.70M655.26,283.90V320.70M664.66,283.90V320.70M674.05,283.90V320.70M683.45,283.90V320.70M692.84,283.90V320.70M702.24,283.90V320.70M711.63,283.90V320.70M721.03,283.90V320.70M730.42,283.90V320.70M739.82,283.90V320.70M749.21,283.90V320.70M758.61,283.90V320.70M768.00,283.90V320.70M777.40,283.90V320.70M786.79,283.90V320.70M796.19,283.90V320.70M805.58,283.90V320.70M814.98,283.90V320.70M824.37,283.90V320.70M833.77,283.90V320.70M843.16,283.90V320.70M852.56,283.90V320.70" fill="none" stroke="#000" stroke-width="0.9" stroke-opacity="0.13"/>
<rect x="932.60" y="283.90" width="85.40" height="36.80" fill="#363636"/>
<rect x="6.30" y="322.30" width="850.90" height="11.80" fill="#323232"/>
<rect x="6.30" y="322.30" width="19.50" height="11.80" fill="#fff" fill-opacity="0.02"/>
<rect x="100.96" y="322.30" width="75.16" height="11.80" fill="#fff" fill-opacity="0.02"/>
<rect x="251.28" y="322.30" width="75.16" height="11.80" fill="#fff" fill-opacity="0.02"/>
<rect x="401.60" y="322.30" width="75.16" height="11.80" fill="#fff" fill-opacity="0.02"/>
<rect x="551.92" y="322.30" width="75.16" height="11.80" fill="#fff" fill-opacity="0.02"/>
<rect x="702.24" y="322.30" width="75.16" height="11.80" fill="#fff" fill-opacity="0.02"/>
<rect x="852.56" y="322.30" width="4.64" height="11.80" fill="#fff" fill-opacity="0.02"/>
<path d="M7.01,322.30V334.10M16.41,322.30V334.10M25.80,322.30V334.10M35.20,322.30V334.10M44.59,322.30V334.10M53.98,322.30V334.10M63.38,322.30V334.10M72.77,322.30V334.10M82.17,322.30V334.10M91.56,322.30V334.10M100.96,322.30V334.10M110.35,322.30V334.10M119.75,322.30V334.10M129.15,322.30V334.10M138.54,322.30V334.10M147.94,322.30V334.10M157.33,322.30V334.10M166.72,322.30V334.10M176.12,322.30V334.10M185.52,322.30V334.10M194.91,322.30V334.10M204.31,322.30V334.10M213.70,322.30V334.10M223.09,322.30V334.10M232.49,322.30V334.10M241.88,322.30V334.10M251.28,322.30V334.10M260.68,322.30V334.10M270.07,322.30V334.10M279.46,322.30V334.10M288.86,322.30V334.10M298.25,322.30V334.10M307.65,322.30V334.10M317.05,322.30V334.10M326.44,322.30V334.10M335.83,322.30V334.10M345.23,322.30V334.10M354.62,322.30V334.10M364.02,322.30V334.10M373.42,322.30V334.10M382.81,322.30V334.10M392.20,322.30V334.10M401.60,322.30V334.10M411.00,322.30V334.10M420.39,322.30V334.10M429.78,322.30V334.10M439.18,322.30V334.10M448.57,322.30V334.10M457.97,322.30V334.10M467.37,322.30V334.10M476.76,322.30V334.10M486.15,322.30V334.10M495.55,322.30V334.10M504.94,322.30V334.10M514.34,322.30V334.10M523.74,322.30V334.10M533.13,322.30V334.10M542.52,322.30V334.10M551.92,322.30V334.10M561.31,322.30V334.10M570.71,322.30V334.10M580.10,322.30V334.10M589.50,322.30V334.10M598.89,322.30V334.10M608.29,322.30V334.10M617.68,322.30V334.10M627.08,322.30V334.10M636.47,322.30V334.10M645.87,322.30V334.10M655.26,322.30V334.10M664.66,322.30V334.10M674.05,322.30V334.10M683.45,322.30V334.10M692.84,322.30V334.10M702.24,322.30V334.10M711.63,322.30V334.10M721.03,322.30V334.10M730.42,322.30V334.10M739.82,322.30V334.10M749.21,322.30V334.10M758.61,322.30V334.10M768.00,322.30V334.10M777.40,322.30V334.10M786.79,322.30V334.10M796.19,322.30V334.10M805.58,322.30V334.10M814.98,322.30V334.10M824.37,322.30V334.10M833.77,322.30V334.10M843.16,322.30V334.10M852.56,322.30V334.10" fill="none" stroke="#000" stroke-width="0.9" stroke-opacity="0.13"/>
<rect x="932.60" y="322.30" width="85.40" height="11.80" fill="#363636"/>
<rect x="6.30" y="335.70" width="850.90" height="11.80" fill="#323232"/>
<rect x="6.30" y="335.70" width="19.50" height="11.80" fill="#fff" fill-opacity="0.02"/>
<rect x="100.96" y="335.70" width="75.16" height="11.80" fill="#fff" fill-opacity="0.02"/>
<rect x="251.28" y="335.70" width="75.16" height="11.80" fill="#fff" fill-opacity="0.02"/>
<rect x="401.60" y="335.70" width="75.16" height="11.80" fill="#fff" fill-opacity="0.02"/>
<rect x="551.92" y="335.70" width="75.16" height="11.80" fill="#fff" fill-opacity="0.02"/>
<rect x="702.24" y="335.70" width="75.16" height="11.80" fill="#fff" fill-opacity="0.02"/>
<rect x="852.56" y="335.70" width="4.64" height="11.80" fill="#fff" fill-opacity="0.02"/>
<path d="M7.01,335.70V347.50M16.41,335.70V347.50M25.80,335.70V347.50M35.20,335.70V347.50M44.59,335.70V347.50M53.98,335.70V347.50M63.38,335.70V347.50M72.77,335.70V347.50M82.17,335.70V347.50M91.56,335.70V347.50M100.96,335.70V347.50M110.35,335.70V347.50M119.75,335.70V347.50M129.15,335.70V347.50M138.54,335.70V347.50M147.94,335.70V347.50M157.33,335.70V347.50M166.72,335.70V347.50M176.12,335.70V347.50M185.52,335.70V347.50M194.91,335.70V347.50M204.31,335.70V347.50M213.70,335.70V347.50M223.09,335.70V347.50M232.49,335.70V347.50M241.88,335.70V347.50M251.28,335.70V347.50M260.68,335.70V347.50M270.07,335.70V347.50M279.46,335.70V347.50M288.86,335.70V347.50M298.25,335.70V347.50M307.65,335.70V347.50M317.05,335.70V347.50M326.44,335.70V347.50M335.83,335.70V347.50M345.23,335.70V347.50M354.62,335.70V347.50M364.02,335.70V347.50M373.42,335.70V347.50M382.81,335.70V347.50M392.20,335.70V347.50M401.60,335.70V347.50M411.00,335.70V347.50M420.39,335.70V347.50M429.78,335.70V347.50M439.18,335.70V347.50M448.57,335.70V347.50M457.97,335.70V347.50M467.37,335.70V347.50M476.76,335.70V347.50M486.15,335.70V347.50M495.55,335.70V347.50M504.94,335.70V347.50M514.34,335.70V347.50M523.74,335.70V347.50M533.13,335.70V347.50M542.52,335.70V347.50M551.92,335.70V347.50M561.31,335.70V347.50M570.71,335.70V347.50M580.10,335.70V347.50M589.50,335.70V347.50M598.89,335.70V347.50M608.29,335.70V347.50M617.68,335.70V347.50M627.08,335.70V347.50M636.47,335.70V347.50M645.87,335.70V347.50M655.26,335.70V347.50M664.66,335.70V347.50M674.05,335.70V347.50M683.45,335.70V347.50M692.84,335.70V347.50M702.24,335.70V347.50M711.63,335.70V347.50M721.03,335.70V347.50M730.42,335.70V347.50M739.82,335.70V347.50M749.21,335.70V347.50M758.61,335.70V347.50M768.00,335.70V347.50M777.40,335.70V347.50M786.79,335.70V347.50M796.19,335.70V347.50M805.58,335.70V347.50M814.98,335.70V347.50M824.37,335.70V347.50M833.77,335.70V347.50M843.16,335.70V347.50M852.56,335.70V347.50" fill="none" stroke="#000" stroke-width="0.9" stroke-opacity="0.13"/>
<rect x="932.60" y="335.70" width="85.40" height="11.80" fill="#363636"/>
<rect x="6.30" y="349.20" width="850.90" height="11.70" fill="#323232"/>
<rect x="6.30" y="349.20" width="19.50" height="11.70" fill="#fff" fill-opacity="0.02"/>
<rect x="100.96" y="349.20" width="75.16" height="11.70" fill="#fff" fill-opacity="0.02"/>
<rect x="251.28" y="349.20" width="75.16" height="11.70" fill="#fff" fill-opacity="0.02"/>
<rect x="401.60" y="349.20" width="75.16" height="11.70" fill="#fff" fill-opacity="0.02"/>
<rect x="551.92" y="349.20" width="75.16" height="11.70" fill="#fff" fill-opacity="0.02"/>
<rect x="702.24" y="349.20" width="75.16" height="11.70" fill="#fff" fill-opacity="0.02"/>
<rect x="852.56" y="349.20" width="4.64" height="11.70" fill="#fff" fill-opacity="0.02"/>
<path d="M7.01,349.20V360.90M16.41,349.20V360.90M25.80,349.20V360.90M35.20,349.20V360.90M44.59,349.20V360.90M53.98,349.20V360.90M63.38,349.20V360.90M72.77,349.20V360.90M82.17,349.20V360.90M91.56,349.20V360.90M100.96,349.20V360.90M110.35,349.20V360.90M119.75,349.20V360.90M129.15,349.20V360.90M138.54,349.20V360.90M147.94,349.20V360.90M157.33,349.20V360.90M166.72,349.20V360.90M176.12,349.20V360.90M185.52,349.20V360.90M194.91,349.20V360.90M204.31,349.20V360.90M213.70,349.20V360.90M223.09,349.20V360.90M232.49,349.20V360.90M241.88,349.20V360.90M251.28,349.20V360.90M260.68,349.20V360.90M270.07,349.20V360.90M279.46,349.20V360.90M288.86,349.20V360.90M298.25,349.20V360.90M307.65,349.20V360.90M317.05,349.20V360.90M326.44,349.20V360.90M335.83,349.20V360.90M345.23,349.20V360.90M354.62,349.20V360.90M364.02,349.20V360.90M373.42,349.20V360.90M382.81,349.20V360.90M392.20,349.20V360.90M401.60,349.20V360.90M411.00,349.20V360.90M420.39,349.20V360.90M429.78,349.20V360.90M439.18,349.20V360.90M448.57,349.20V360.90M457.97,349.20V360.90M467.37,349.20V360.90M476.76,349.20V360.90M486.15,349.20V360.90M495.55,349.20V360.90M504.94,349.20V360.90M514.34,349.20V360.90M523.74,349.20V360.90M533.13,349.20V360.90M542.52,349.20V360.90M551.92,349.20V360.90M561.31,349.20V360.90M570.71,349.20V360.90M580.10,349.20V360.90M589.50,349.20V360.90M598.89,349.20V360.90M608.29,349.20V360.90M617.68,349.20V360.90M627.08,349.20V360.90M636.47,349.20V360.90M645.87,349.20V360.90M655.26,349.20V360.90M664.66,349.20V360.90M674.05,349.20V360.90M683.45,349.20V360.90M692.84,349.20V360.90M702.24,349.20V360.90M711.63,349.20V360.90M721.03,349.20V360.90M730.42,349.20V360.90M739.82,349.20V360.90M749.21,349.20V360.90M758.61,349.20V360.90M768.00,349.20V360.90M777.40,349.20V360.90M786.79,349.20V360.90M796.19,349.20V360.90M805.58,349.20V360.90M814.98,349.20V360.90M824.37,349.20V360.90M833.77,349.20V360.90M843.16,349.20V360.90M852.56,349.20V360.90" fill="none" stroke="#000" stroke-width="0.9" stroke-opacity="0.13"/>
<rect x="932.60" y="349.20" width="85.40" height="11.70" fill="#363636"/>
<rect x="6.30" y="362.70" width="850.90" height="15.40" fill="#323232"/>
<rect x="6.30" y="362.70" width="19.50" height="15.40" fill="#fff" fill-opacity="0.02"/>
<rect x="100.96" y="362.70" width="75.16" height="15.40" fill="#fff" fill-opacity="0.02"/>
<rect x="251.28" y="362.70" width="75.16" height="15.40" fill="#fff" fill-opacity="0.02"/>
<rect x="401.60" y="362.70" width="75.16" height="15.40" fill="#fff" fill-opacity="0.02"/>
<rect x="551.92" y="362.70" width="75.16" height="15.40" fill="#fff" fill-opacity="0.02"/>
<rect x="702.24" y="362.70" width="75.16" height="15.40" fill="#fff" fill-opacity="0.02"/>
<rect x="852.56" y="362.70" width="4.64" height="15.40" fill="#fff" fill-opacity="0.02"/>
<path d="M7.01,362.70V378.10M16.41,362.70V378.10M25.80,362.70V378.10M35.20,362.70V378.10M44.59,362.70V378.10M53.98,362.70V378.10M63.38,362.70V378.10M72.77,362.70V378.10M82.17,362.70V378.10M91.56,362.70V378.10M100.96,362.70V378.10M110.35,362.70V378.10M119.75,362.70V378.10M129.15,362.70V378.10M138.54,362.70V378.10M147.94,362.70V378.10M157.33,362.70V378.10M166.72,362.70V378.10M176.12,362.70V378.10M185.52,362.70V378.10M194.91,362.70V378.10M204.31,362.70V378.10M213.70,362.70V378.10M223.09,362.70V378.10M232.49,362.70V378.10M241.88,362.70V378.10M251.28,362.70V378.10M260.68,362.70V378.10M270.07,362.70V378.10M279.46,362.70V378.10M288.86,362.70V378.10M298.25,362.70V378.10M307.65,362.70V378.10M317.05,362.70V378.10M326.44,362.70V378.10M335.83,362.70V378.10M345.23,362.70V378.10M354.62,362.70V378.10M364.02,362.70V378.10M373.42,362.70V378.10M382.81,362.70V378.10M392.20,362.70V378.10M401.60,362.70V378.10M411.00,362.70V378.10M420.39,362.70V378.10M429.78,362.70V378.10M439.18,362.70V378.10M448.57,362.70V378.10M457.97,362.70V378.10M467.37,362.70V378.10M476.76,362.70V378.10M486.15,362.70V378.10M495.55,362.70V378.10M504.94,362.70V378.10M514.34,362.70V378.10M523.74,362.70V378.10M533.13,362.70V378.10M542.52,362.70V378.10M551.92,362.70V378.10M561.31,362.70V378.10M570.71,362.70V378.10M580.10,362.70V378.10M589.50,362.70V378.10M598.89,362.70V378.10M608.29,362.70V378.10M617.68,362.70V378.10M627.08,362.70V378.10M636.47,362.70V378.10M645.87,362.70V378.10M655.26,362.70V378.10M664.66,362.70V378.10M674.05,362.70V378.10M683.45,362.70V378.10M692.84,362.70V378.10M702.24,362.70V378.10M711.63,362.70V378.10M721.03,362.70V378.10M730.42,362.70V378.10M739.82,362.70V378.10M749.21,362.70V378.10M758.61,362.70V378.10M768.00,362.70V378.10M777.40,362.70V378.10M786.79,362.70V378.10M796.19,362.70V378.10M805.58,362.70V378.10M814.98,362.70V378.10M824.37,362.70V378.10M833.77,362.70V378.10M843.16,362.70V378.10M852.56,362.70V378.10" fill="none" stroke="#000" stroke-width="0.9" stroke-opacity="0.13"/>
<rect x="932.60" y="362.70" width="85.40" height="15.40" fill="#363636"/>
<rect x="6.30" y="379.70" width="850.90" height="12.30" fill="#323232"/>
<rect x="6.30" y="379.70" width="19.50" height="12.30" fill="#fff" fill-opacity="0.02"/>
<rect x="100.96" y="379.70" width="75.16" height="12.30" fill="#fff" fill-opacity="0.02"/>
<rect x="251.28" y="379.70" width="75.16" height="12.30" fill="#fff" fill-opacity="0.02"/>
<rect x="401.60" y="379.70" width="75.16" height="12.30" fill="#fff" fill-opacity="0.02"/>
<rect x="551.92" y="379.70" width="75.16" height="12.30" fill="#fff" fill-opacity="0.02"/>
<rect x="702.24" y="379.70" width="75.16" height="12.30" fill="#fff" fill-opacity="0.02"/>
<rect x="852.56" y="379.70" width="4.64" height="12.30" fill="#fff" fill-opacity="0.02"/>
<path d="M7.01,379.70V392.00M16.41,379.70V392.00M25.80,379.70V392.00M35.20,379.70V392.00M44.59,379.70V392.00M53.98,379.70V392.00M63.38,379.70V392.00M72.77,379.70V392.00M82.17,379.70V392.00M91.56,379.70V392.00M100.96,379.70V392.00M110.35,379.70V392.00M119.75,379.70V392.00M129.15,379.70V392.00M138.54,379.70V392.00M147.94,379.70V392.00M157.33,379.70V392.00M166.72,379.70V392.00M176.12,379.70V392.00M185.52,379.70V392.00M194.91,379.70V392.00M204.31,379.70V392.00M213.70,379.70V392.00M223.09,379.70V392.00M232.49,379.70V392.00M241.88,379.70V392.00M251.28,379.70V392.00M260.68,379.70V392.00M270.07,379.70V392.00M279.46,379.70V392.00M288.86,379.70V392.00M298.25,379.70V392.00M307.65,379.70V392.00M317.05,379.70V392.00M326.44,379.70V392.00M335.83,379.70V392.00M345.23,379.70V392.00M354.62,379.70V392.00M364.02,379.70V392.00M373.42,379.70V392.00M382.81,379.70V392.00M392.20,379.70V392.00M401.60,379.70V392.00M411.00,379.70V392.00M420.39,379.70V392.00M429.78,379.70V392.00M439.18,379.70V392.00M448.57,379.70V392.00M457.97,379.70V392.00M467.37,379.70V392.00M476.76,379.70V392.00M486.15,379.70V392.00M495.55,379.70V392.00M504.94,379.70V392.00M514.34,379.70V392.00M523.74,379.70V392.00M533.13,379.70V392.00M542.52,379.70V392.00M551.92,379.70V392.00M561.31,379.70V392.00M570.71,379.70V392.00M580.10,379.70V392.00M589.50,379.70V392.00M598.89,379.70V392.00M608.29,379.70V392.00M617.68,379.70V392.00M627.08,379.70V392.00M636.47,379.70V392.00M645.87,379.70V392.00M655.26,379.70V392.00M664.66,379.70V392.00M674.05,379.70V392.00M683.45,379.70V392.00M692.84,379.70V392.00M702.24,379.70V392.00M711.63,379.70V392.00M721.03,379.70V392.00M730.42,379.70V392.00M739.82,379.70V392.00M749.21,379.70V392.00M758.61,379.70V392.00M768.00,379.70V392.00M777.40,379.70V392.00M786.79,379.70V392.00M796.19,379.70V392.00M805.58,379.70V392.00M814.98,379.70V392.00M824.37,379.70V392.00M833.77,379.70V392.00M843.16,379.70V392.00M852.56,379.70V392.00" fill="none" stroke="#000" stroke-width="0.9" stroke-opacity="0.13"/>
<rect x="932.60" y="379.70" width="85.40" height="12.30" fill="#363636"/>
<rect x="858.30" y="362.70" width="159.70" height="15.40" fill="#363636"/>
<rect x="777.70" y="101.90" width="18.19" height="46.70" fill="#353535"/>
<rect x="6.30" y="63.60" width="19.50" height="36.60" fill="#95a7ff"/>
<path d="M7.01,74.90V100.20M16.41,74.90V100.20" fill="none" stroke="#000" stroke-width="0.8" stroke-opacity="0.12"/>
<line x1="6.30" y1="74.90" x2="25.80" y2="74.90" stroke="#000" stroke-width="0.8" stroke-opacity="0.16"/>
<rect x="9.10" y="70.60" width="1.15" height="1.15" fill="#1b1b1b" fill-opacity="0.85"/>
<rect x="11.45" y="70.60" width="1.15" height="1.15" fill="#1b1b1b" fill-opacity="0.85"/>
<rect x="13.80" y="70.60" width="1.15" height="1.15" fill="#1b1b1b" fill-opacity="0.85"/>
<line x1="6.67" y1="88.20" x2="25.40" y2="88.20" stroke="#141a33" stroke-width="1.1" stroke-dasharray="0.72 0.45 0.72 0.45 0.72 0.45 0.72 1.05 0.72 0.45 0.72 1.62" stroke-opacity="0.85"/>
<path d="M13.17,84.70h3.20v1.00h-3.20zM11.47,93.20h1.10v1.20h-1.10zM20.87,93.20h1.10v1.20h-1.10z" fill="#141a33" fill-opacity="0.82"/>
<rect x="25.80" y="63.60" width="150.32" height="36.60" fill="#95a7ff"/>
<path d="M35.20,74.90V100.20M44.59,74.90V100.20M53.98,74.90V100.20M63.38,74.90V100.20M72.77,74.90V100.20M82.17,74.90V100.20M91.56,74.90V100.20M100.96,74.90V100.20M110.35,74.90V100.20M119.75,74.90V100.20M129.15,74.90V100.20M138.54,74.90V100.20M147.94,74.90V100.20M157.33,74.90V100.20M166.72,74.90V100.20" fill="none" stroke="#000" stroke-width="0.8" stroke-opacity="0.12"/>
<line x1="25.80" y1="74.90" x2="176.12" y2="74.90" stroke="#000" stroke-width="0.8" stroke-opacity="0.16"/>
<line x1="25.80" y1="63.60" x2="25.80" y2="100.20" stroke="#000" stroke-width="0.9" stroke-opacity="0.42"/>
<line x1="26.40" y1="88.20" x2="138.14" y2="88.20" stroke="#141a33" stroke-width="1.1" stroke-dasharray="0.72 0.45 0.72 0.45 0.72 0.45 0.72 1.05 0.72 0.45 0.72 1.62" stroke-opacity="0.85"/>
<path d="M32.90,84.70h3.20v1.00h-3.20zM31.20,93.20h1.10v1.20h-1.10zM40.60,93.20h1.10v1.20h-1.10zM51.69,84.70h3.20v1.00h-3.20zM49.99,93.20h1.10v1.20h-1.10zM59.39,93.20h1.10v1.20h-1.10zM70.48,84.70h3.20v1.00h-3.20zM68.78,93.20h1.10v1.20h-1.10zM78.18,93.20h1.10v1.20h-1.10zM89.27,84.70h3.20v1.00h-3.20zM87.57,93.20h1.10v1.20h-1.10zM96.97,93.20h1.10v1.20h-1.10zM97.37,89.20h0.90v1.80h-0.90zM99.37,86.20h1.00v0.90h-1.00zM98.47,94.00h1.40v1.60h-1.40zM108.06,84.70h3.20v1.00h-3.20zM106.36,93.20h1.10v1.20h-1.10zM115.76,93.20h1.10v1.20h-1.10zM126.85,84.70h3.20v1.00h-3.20zM125.15,93.20h1.10v1.20h-1.10zM134.55,93.20h1.10v1.20h-1.10z" fill="#141a33" fill-opacity="0.82"/>
<rect x="176.12" y="63.60" width="150.32" height="36.60" fill="#95a7ff"/>
<path d="M185.52,74.90V100.20M194.91,74.90V100.20M204.31,74.90V100.20M213.70,74.90V100.20M223.09,74.90V100.20M232.49,74.90V100.20M241.88,74.90V100.20M251.28,74.90V100.20M260.68,74.90V100.20M270.07,74.90V100.20M279.46,74.90V100.20M288.86,74.90V100.20M298.25,74.90V100.20M307.65,74.90V100.20M317.05,74.90V100.20" fill="none" stroke="#000" stroke-width="0.8" stroke-opacity="0.12"/>
<line x1="176.12" y1="74.90" x2="326.44" y2="74.90" stroke="#000" stroke-width="0.8" stroke-opacity="0.16"/>
<line x1="176.12" y1="63.60" x2="176.12" y2="100.20" stroke="#000" stroke-width="0.9" stroke-opacity="0.42"/>
<line x1="176.72" y1="88.20" x2="307.25" y2="88.20" stroke="#141a33" stroke-width="1.1" stroke-dasharray="0.72 0.45 0.72 0.45 0.72 0.45 0.72 1.05 0.72 0.45 0.72 1.62" stroke-opacity="0.85"/>
<path d="M183.22,84.70h3.20v1.00h-3.20zM181.38,93.40h1.00v1.20h-1.00zM184.95,93.40h1.00v1.20h-1.00zM190.78,93.40h1.00v1.20h-1.00zM193.97,93.40h1.00v1.20h-1.00zM176.68,96.20h1.00v1.10h-1.00zM188.52,96.20h1.00v1.10h-1.00zM202.01,84.70h3.20v1.00h-3.20zM200.17,93.40h1.00v1.20h-1.00zM203.74,93.40h1.00v1.20h-1.00zM209.57,93.40h1.00v1.20h-1.00zM212.76,93.40h1.00v1.20h-1.00zM195.66,96.20h1.00v1.10h-1.00zM206.18,96.20h1.00v1.10h-1.00zM207.69,96.20h1.00v1.10h-1.00zM220.80,84.70h3.20v1.00h-3.20zM218.96,93.40h1.00v1.20h-1.00zM222.53,93.40h1.00v1.20h-1.00zM228.36,93.40h1.00v1.20h-1.00zM231.55,93.40h1.00v1.20h-1.00zM214.26,96.20h1.00v1.10h-1.00zM226.10,96.20h1.00v1.10h-1.00zM239.59,84.70h3.20v1.00h-3.20zM237.75,93.40h1.00v1.20h-1.00zM241.32,93.40h1.00v1.20h-1.00zM247.15,93.40h1.00v1.20h-1.00zM250.34,93.40h1.00v1.20h-1.00zM233.24,96.20h1.00v1.10h-1.00zM243.76,96.20h1.00v1.10h-1.00zM245.27,96.20h1.00v1.10h-1.00zM247.69,89.20h0.90v1.80h-0.90zM249.69,86.20h1.00v0.90h-1.00zM248.79,94.00h1.40v1.60h-1.40zM258.38,84.70h3.20v1.00h-3.20zM256.54,93.40h1.00v1.20h-1.00zM260.11,93.40h1.00v1.20h-1.00zM265.94,93.40h1.00v1.20h-1.00zM269.13,93.40h1.00v1.20h-1.00zM251.84,96.20h1.00v1.10h-1.00zM263.68,96.20h1.00v1.10h-1.00zM277.17,84.70h3.20v1.00h-3.20zM275.33,93.40h1.00v1.20h-1.00zM278.90,93.40h1.00v1.20h-1.00zM284.73,93.40h1.00v1.20h-1.00zM287.92,93.40h1.00v1.20h-1.00zM270.82,96.20h1.00v1.10h-1.00zM281.34,96.20h1.00v1.10h-1.00zM282.85,96.20h1.00v1.10h-1.00zM295.96,84.70h3.20v1.00h-3.20zM294.12,93.40h1.00v1.20h-1.00zM297.69,93.40h1.00v1.20h-1.00zM303.52,93.40h1.00v1.20h-1.00zM289.42,96.20h1.00v1.10h-1.00zM301.26,96.20h1.00v1.10h-1.00z" fill="#141a33" fill-opacity="0.82"/>
<rect x="326.44" y="63.60" width="150.32" height="36.60" fill="#95a7ff"/>
<path d="M335.83,74.90V100.20M345.23,74.90V100.20M354.62,74.90V100.20M364.02,74.90V100.20M373.42,74.90V100.20M382.81,74.90V100.20M392.20,74.90V100.20M401.60,74.90V100.20M411.00,74.90V100.20M420.39,74.90V100.20M429.78,74.90V100.20M439.18,74.90V100.20M448.57,74.90V100.20M457.97,74.90V100.20M467.37,74.90V100.20" fill="none" stroke="#000" stroke-width="0.8" stroke-opacity="0.12"/>
<line x1="326.44" y1="74.90" x2="476.76" y2="74.90" stroke="#000" stroke-width="0.8" stroke-opacity="0.16"/>
<line x1="326.44" y1="63.60" x2="326.44" y2="100.20" stroke="#000" stroke-width="0.9" stroke-opacity="0.42"/>
<line x1="327.04" y1="88.20" x2="476.36" y2="88.20" stroke="#141a33" stroke-width="1.1" stroke-dasharray="0.72 0.45 0.72 0.45 0.72 0.45 0.72 1.05 0.72 0.45 0.72 1.62" stroke-opacity="0.85"/>
<path d="M333.54,84.70h3.20v1.00h-3.20zM331.70,93.40h1.00v1.20h-1.00zM335.27,93.40h1.00v1.20h-1.00zM341.10,93.40h1.00v1.20h-1.00zM344.29,93.40h1.00v1.20h-1.00zM327.00,96.20h1.00v1.10h-1.00zM338.84,96.20h1.00v1.10h-1.00zM352.33,84.70h3.20v1.00h-3.20zM350.49,93.40h1.00v1.20h-1.00zM354.06,93.40h1.00v1.20h-1.00zM359.89,93.40h1.00v1.20h-1.00zM363.08,93.40h1.00v1.20h-1.00zM345.98,96.20h1.00v1.10h-1.00zM356.50,96.20h1.00v1.10h-1.00zM358.01,96.20h1.00v1.10h-1.00zM371.12,84.70h3.20v1.00h-3.20zM369.28,93.40h1.00v1.20h-1.00zM372.85,93.40h1.00v1.20h-1.00zM378.68,93.40h1.00v1.20h-1.00zM381.87,93.40h1.00v1.20h-1.00zM364.58,96.20h1.00v1.10h-1.00zM376.42,96.20h1.00v1.10h-1.00zM389.91,84.70h3.20v1.00h-3.20zM388.07,93.40h1.00v1.20h-1.00zM391.64,93.40h1.00v1.20h-1.00zM397.47,93.40h1.00v1.20h-1.00zM400.66,93.40h1.00v1.20h-1.00zM383.56,96.20h1.00v1.10h-1.00zM394.08,96.20h1.00v1.10h-1.00zM395.59,96.20h1.00v1.10h-1.00zM398.01,89.20h0.90v1.80h-0.90zM400.01,86.20h1.00v0.90h-1.00zM399.11,94.00h1.40v1.60h-1.40zM408.70,84.70h3.20v1.00h-3.20zM406.86,93.40h1.00v1.20h-1.00zM410.43,93.40h1.00v1.20h-1.00zM416.26,93.40h1.00v1.20h-1.00zM419.45,93.40h1.00v1.20h-1.00zM402.16,96.20h1.00v1.10h-1.00zM414.00,96.20h1.00v1.10h-1.00zM427.49,84.70h3.20v1.00h-3.20zM425.65,93.40h1.00v1.20h-1.00zM429.22,93.40h1.00v1.20h-1.00zM435.05,93.40h1.00v1.20h-1.00zM438.24,93.40h1.00v1.20h-1.00zM421.14,96.20h1.00v1.10h-1.00zM431.66,96.20h1.00v1.10h-1.00zM433.17,96.20h1.00v1.10h-1.00zM446.28,84.70h3.20v1.00h-3.20zM444.44,93.40h1.00v1.20h-1.00zM448.01,93.40h1.00v1.20h-1.00zM453.84,93.40h1.00v1.20h-1.00zM457.03,93.40h1.00v1.20h-1.00zM439.74,96.20h1.00v1.10h-1.00zM451.58,96.20h1.00v1.10h-1.00zM465.07,84.70h3.20v1.00h-3.20zM463.23,93.40h1.00v1.20h-1.00zM466.80,93.40h1.00v1.20h-1.00zM472.63,93.40h1.00v1.20h-1.00zM458.72,96.20h1.00v1.10h-1.00zM469.24,96.20h1.00v1.10h-1.00zM470.75,96.20h1.00v1.10h-1.00zM473.17,89.20h0.90v1.80h-0.90zM475.17,86.20h1.00v0.90h-1.00zM474.27,94.00h1.40v1.60h-1.40z" fill="#141a33" fill-opacity="0.82"/>
<rect x="476.76" y="63.60" width="150.32" height="36.60" fill="#95a7ff"/>
<path d="M486.15,74.90V100.20M495.55,74.90V100.20M504.94,74.90V100.20M514.34,74.90V100.20M523.74,74.90V100.20M533.13,74.90V100.20M542.52,74.90V100.20M551.92,74.90V100.20M561.31,74.90V100.20M570.71,74.90V100.20M580.10,74.90V100.20M589.50,74.90V100.20M598.89,74.90V100.20M608.29,74.90V100.20M617.68,74.90V100.20" fill="none" stroke="#000" stroke-width="0.8" stroke-opacity="0.12"/>
<line x1="476.76" y1="74.90" x2="627.08" y2="74.90" stroke="#000" stroke-width="0.8" stroke-opacity="0.16"/>
<line x1="476.76" y1="63.60" x2="476.76" y2="100.20" stroke="#000" stroke-width="0.9" stroke-opacity="0.42"/>
<line x1="477.36" y1="88.20" x2="626.68" y2="88.20" stroke="#141a33" stroke-width="1.1" stroke-dasharray="0.72 0.45 0.72 0.45 0.72 0.45 0.72 1.05 0.72 0.45 0.72 1.62" stroke-opacity="0.85"/>
<path d="M483.86,84.70h3.20v1.00h-3.20zM482.02,93.40h1.00v1.20h-1.00zM485.59,93.40h1.00v1.20h-1.00zM491.42,93.40h1.00v1.20h-1.00zM494.61,93.40h1.00v1.20h-1.00zM477.32,96.20h1.00v1.10h-1.00zM489.16,96.20h1.00v1.10h-1.00zM502.65,84.70h3.20v1.00h-3.20zM500.81,93.40h1.00v1.20h-1.00zM504.38,93.40h1.00v1.20h-1.00zM510.21,93.40h1.00v1.20h-1.00zM513.40,93.40h1.00v1.20h-1.00zM496.30,96.20h1.00v1.10h-1.00zM506.82,96.20h1.00v1.10h-1.00zM508.33,96.20h1.00v1.10h-1.00zM521.44,84.70h3.20v1.00h-3.20zM519.60,93.40h1.00v1.20h-1.00zM523.17,93.40h1.00v1.20h-1.00zM529.00,93.40h1.00v1.20h-1.00zM532.19,93.40h1.00v1.20h-1.00zM514.90,96.20h1.00v1.10h-1.00zM526.74,96.20h1.00v1.10h-1.00zM540.23,84.70h3.20v1.00h-3.20zM538.39,93.40h1.00v1.20h-1.00zM541.96,93.40h1.00v1.20h-1.00zM547.79,93.40h1.00v1.20h-1.00zM550.98,93.40h1.00v1.20h-1.00zM533.88,96.20h1.00v1.10h-1.00zM544.40,96.20h1.00v1.10h-1.00zM545.91,96.20h1.00v1.10h-1.00zM548.33,89.20h0.90v1.80h-0.90zM550.33,86.20h1.00v0.90h-1.00zM549.43,94.00h1.40v1.60h-1.40zM559.02,84.70h3.20v1.00h-3.20zM557.18,93.40h1.00v1.20h-1.00zM560.75,93.40h1.00v1.20h-1.00zM566.58,93.40h1.00v1.20h-1.00zM569.77,93.40h1.00v1.20h-1.00zM552.48,96.20h1.00v1.10h-1.00zM564.32,96.20h1.00v1.10h-1.00zM577.81,84.70h3.20v1.00h-3.20zM575.97,93.40h1.00v1.20h-1.00zM579.54,93.40h1.00v1.20h-1.00zM585.37,93.40h1.00v1.20h-1.00zM588.56,93.40h1.00v1.20h-1.00zM571.46,96.20h1.00v1.10h-1.00zM581.98,96.20h1.00v1.10h-1.00zM583.49,96.20h1.00v1.10h-1.00zM596.60,84.70h3.20v1.00h-3.20zM594.76,93.40h1.00v1.20h-1.00zM598.33,93.40h1.00v1.20h-1.00zM604.16,93.40h1.00v1.20h-1.00zM607.35,93.40h1.00v1.20h-1.00zM590.06,96.20h1.00v1.10h-1.00zM601.90,96.20h1.00v1.10h-1.00zM615.39,84.70h3.20v1.00h-3.20zM613.55,93.40h1.00v1.20h-1.00zM617.12,93.40h1.00v1.20h-1.00zM622.95,93.40h1.00v1.20h-1.00zM609.04,96.20h1.00v1.10h-1.00zM619.56,96.20h1.00v1.10h-1.00zM621.07,96.20h1.00v1.10h-1.00zM623.49,89.20h0.90v1.80h-0.90zM625.49,86.20h1.00v0.90h-1.00zM624.59,94.00h1.40v1.60h-1.40z" fill="#141a33" fill-opacity="0.82"/>
<rect x="777.40" y="63.60" width="79.80" height="36.60" fill="#95a7ff"/>
<path d="M786.79,74.90V100.20M796.19,74.90V100.20M805.58,74.90V100.20M814.98,74.90V100.20M824.37,74.90V100.20M833.77,74.90V100.20M843.16,74.90V100.20M852.56,74.90V100.20" fill="none" stroke="#000" stroke-width="0.8" stroke-opacity="0.12"/>
<line x1="777.40" y1="74.90" x2="857.20" y2="74.90" stroke="#000" stroke-width="0.8" stroke-opacity="0.16"/>
<line x1="777.40" y1="63.60" x2="777.40" y2="100.20" stroke="#000" stroke-width="0.9" stroke-opacity="0.42"/>
<line x1="796.00" y1="88.20" x2="856.80" y2="88.20" stroke="#141a33" stroke-width="1.1" stroke-dasharray="0.72 0.45 0.72 0.45 0.72 0.45 0.72 1.05 0.72 0.45 0.72 1.62" stroke-opacity="0.85"/>
<path d="M815.00,79.00h1.20v1.10h-1.20zM798.00,83.30h8.80v1.50h-8.80zM833.20,83.40h24.00v1.40h-24.00zM784.00,84.80h3.40v0.90h-3.40zM821.00,84.80h4.00v0.90h-4.00zM805.00,84.60h1.60v1.00h-1.60zM840.50,84.60h1.60v1.00h-1.60zM793.30,90.60h1.20v1.00h-1.20zM850.30,90.20h1.20v1.40h-1.20zM850.80,86.60h1.00v1.00h-1.00zM800.50,93.40h1.00v1.20h-1.00zM804.50,93.40h1.00v1.20h-1.00zM810.50,93.40h1.00v1.20h-1.00zM813.20,93.40h1.00v1.20h-1.00zM814.80,93.40h1.00v1.20h-1.00zM820.00,93.40h1.00v1.20h-1.00zM823.50,93.40h1.00v1.20h-1.00zM829.00,93.40h1.00v1.20h-1.00zM831.50,93.40h1.00v1.20h-1.00zM838.50,93.40h1.00v1.20h-1.00zM842.00,93.40h1.00v1.20h-1.00zM848.00,93.40h1.00v1.20h-1.00zM850.20,93.40h1.00v1.20h-1.00zM851.60,93.40h1.00v1.20h-1.00zM796.30,96.20h1.00v1.10h-1.00zM807.00,96.20h1.00v1.10h-1.00zM808.40,96.20h1.00v1.10h-1.00zM815.00,96.20h1.00v1.10h-1.00zM827.00,96.20h1.00v1.10h-1.00zM833.50,96.20h1.00v1.10h-1.00zM845.00,96.20h1.00v1.10h-1.00zM846.30,96.20h1.00v1.10h-1.00zM852.40,96.20h1.00v1.10h-1.00z" fill="#141a33" fill-opacity="0.85"/>
<rect x="25.80" y="101.90" width="75.16" height="36.80" fill="#95a7ff"/>
<path d="M35.20,113.20V138.70M44.59,113.20V138.70M53.98,113.20V138.70M63.38,113.20V138.70M72.77,113.20V138.70M82.17,113.20V138.70M91.56,113.20V138.70" fill="none" stroke="#000" stroke-width="0.8" stroke-opacity="0.12"/>
<line x1="25.80" y1="113.20" x2="100.96" y2="113.20" stroke="#000" stroke-width="0.8" stroke-opacity="0.16"/>
<line x1="25.80" y1="101.90" x2="25.80" y2="138.70" stroke="#000" stroke-width="0.9" stroke-opacity="0.42"/>
<path d="M26.4,116.7 L27.0,116.9 L27.6,116.8 L28.3,116.8 L28.9,116.9 L29.5,116.8 L30.1,116.8 L30.7,117.0 L31.4,117.4 L32.0,118.1 L32.6,118.2 L33.2,118.0 L33.8,117.3 L34.5,115.8 L35.1,116.3 L35.7,117.1 L36.3,117.6 L36.9,117.3 L37.6,116.7 L38.2,116.6 L38.8,116.8 L39.4,117.0 L40.0,116.5 L40.7,116.6 L41.3,117.9 L41.9,118.7 L42.5,118.8 L43.1,118.9 L43.8,118.9 L44.4,118.3 L45.0,116.7 L45.6,116.6 L46.2,116.8 L46.9,116.7 L47.5,116.9 L48.1,117.1 L48.7,116.9 L49.3,117.0 L50.0,116.7 L50.6,118.1 L51.2,118.0 L51.8,118.0 L52.4,117.3 L53.1,116.6 L53.7,116.3 L54.3,116.5 L54.9,117.6 L55.5,117.8 L56.2,116.6 L56.8,116.6 L57.4,116.7 L58.0,117.0 L58.6,117.0 L59.3,116.6 L59.9,117.9 L60.5,118.5 L61.1,118.8 L61.7,118.9 L62.4,118.9 L63.0,118.7 L63.6,117.4 L64.2,116.6 L64.8,116.9 L65.5,116.7 L66.1,116.8 L66.7,117.1 L67.3,116.9 L67.9,116.8 L68.6,116.7 L69.2,117.4 L69.8,118.0 L70.4,118.2 L71.0,117.6 L71.7,116.6 L72.3,115.8 L72.9,116.5 L73.5,117.1 L74.1,117.8 L74.8,116.6 L75.4,116.7 L76.0,116.7 L76.6,116.8 L77.2,117.0 L77.9,116.5 L78.5,116.9 L79.1,118.5 L79.7,118.7 L80.3,118.9 L81.0,118.9 L81.6,118.7 L82.2,117.4 L82.8,116.7 L83.4,116.9 L84.1,116.8 L84.7,116.8 L85.3,116.9 L85.9,116.8 L86.5,116.8 L87.2,117.0 L87.8,117.4 L88.4,118.1 L89.0,118.2 L89.6,117.6 L90.3,117.3 L90.9,115.8 L91.5,116.3 L92.1,117.1 L92.7,117.8 L93.4,117.3 L94.0,116.7 L94.6,116.6 L95.2,116.8 L95.8,117.0 L96.5,116.5 L97.1,116.9 L97.7,117.9 L98.3,118.7 L98.9,118.8 L99.6,118.9 L100.2,118.7 L100.2,120.6 L99.6,120.4 L98.9,120.5 L98.3,120.5 L97.7,121.4 L97.1,122.5 L96.5,123.0 L95.8,122.4 L95.2,122.6 L94.6,122.8 L94.0,122.7 L93.4,122.1 L92.7,121.6 L92.1,122.4 L91.5,123.2 L90.9,123.7 L90.3,122.1 L89.6,121.7 L89.0,121.1 L88.4,121.3 L87.8,122.0 L87.2,122.4 L86.5,122.6 L85.9,122.6 L85.3,122.6 L84.7,122.6 L84.1,122.6 L83.4,122.6 L82.8,122.7 L82.2,122.0 L81.6,120.6 L81.0,120.4 L80.3,120.4 L79.7,120.5 L79.1,120.8 L78.5,122.5 L77.9,123.0 L77.2,122.5 L76.6,122.6 L76.0,122.7 L75.4,122.7 L74.8,122.8 L74.1,121.6 L73.5,122.4 L72.9,123.0 L72.3,123.7 L71.7,122.8 L71.0,121.7 L70.4,121.1 L69.8,121.3 L69.2,122.0 L68.6,122.7 L67.9,122.6 L67.3,122.5 L66.7,122.4 L66.1,122.6 L65.5,122.8 L64.8,122.6 L64.2,122.9 L63.6,122.0 L63.0,120.6 L62.4,120.4 L61.7,120.4 L61.1,120.5 L60.5,120.8 L59.9,121.4 L59.3,122.8 L58.6,122.5 L58.0,122.4 L57.4,122.7 L56.8,122.8 L56.2,122.8 L55.5,121.6 L54.9,121.7 L54.3,123.0 L53.7,123.2 L53.1,122.8 L52.4,122.1 L51.8,121.3 L51.2,121.3 L50.6,121.3 L50.0,122.7 L49.3,122.4 L48.7,122.5 L48.1,122.4 L47.5,122.6 L46.9,122.8 L46.2,122.6 L45.6,122.9 L45.0,122.7 L44.4,121.0 L43.8,120.4 L43.1,120.4 L42.5,120.5 L41.9,120.5 L41.3,121.4 L40.7,122.8 L40.0,123.0 L39.4,122.4 L38.8,122.6 L38.2,122.8 L37.6,122.7 L36.9,122.1 L36.3,121.7 L35.7,122.4 L35.1,123.2 L34.5,123.7 L33.8,122.1 L33.2,121.3 L32.6,121.1 L32.0,121.3 L31.4,122.0 L30.7,122.4 L30.1,122.6 L29.5,122.6 L28.9,122.6 L28.3,122.6 L27.6,122.6 L27.0,122.6 L26.4,122.7Z" fill="#1c1e2e" fill-opacity="0.95"/>
<path d="M26.4,129.6 L27.0,129.8 L27.6,129.7 L28.3,129.7 L28.9,129.8 L29.5,129.7 L30.1,129.7 L30.7,129.9 L31.4,130.3 L32.0,131.0 L32.6,131.1 L33.2,130.9 L33.8,130.2 L34.5,128.7 L35.1,129.2 L35.7,130.0 L36.3,130.5 L36.9,130.2 L37.6,129.6 L38.2,129.5 L38.8,129.7 L39.4,129.9 L40.0,129.4 L40.7,129.5 L41.3,130.8 L41.9,131.6 L42.5,131.7 L43.1,131.8 L43.8,131.8 L44.4,131.2 L45.0,129.6 L45.6,129.5 L46.2,129.7 L46.9,129.6 L47.5,129.8 L48.1,130.0 L48.7,129.8 L49.3,129.9 L50.0,129.6 L50.6,131.0 L51.2,130.9 L51.8,130.9 L52.4,130.2 L53.1,129.5 L53.7,129.2 L54.3,129.4 L54.9,130.5 L55.5,130.7 L56.2,129.5 L56.8,129.5 L57.4,129.6 L58.0,129.9 L58.6,129.9 L59.3,129.5 L59.9,130.8 L60.5,131.4 L61.1,131.7 L61.7,131.8 L62.4,131.8 L63.0,131.6 L63.6,130.3 L64.2,129.5 L64.8,129.8 L65.5,129.6 L66.1,129.7 L66.7,130.0 L67.3,129.8 L67.9,129.7 L68.6,129.6 L69.2,130.3 L69.8,130.9 L70.4,131.1 L71.0,130.5 L71.7,129.5 L72.3,128.7 L72.9,129.4 L73.5,130.0 L74.1,130.7 L74.8,129.5 L75.4,129.6 L76.0,129.6 L76.6,129.7 L77.2,129.9 L77.9,129.4 L78.5,129.8 L79.1,131.4 L79.7,131.6 L80.3,131.8 L81.0,131.8 L81.6,131.6 L82.2,130.3 L82.8,129.6 L83.4,129.8 L84.1,129.7 L84.7,129.7 L85.3,129.8 L85.9,129.7 L86.5,129.7 L87.2,129.9 L87.8,130.3 L88.4,131.0 L89.0,131.1 L89.6,130.5 L90.3,130.2 L90.9,128.7 L91.5,129.2 L92.1,130.0 L92.7,130.7 L93.4,130.2 L94.0,129.6 L94.6,129.5 L95.2,129.7 L95.8,129.9 L96.5,129.4 L97.1,129.8 L97.7,130.8 L98.3,131.6 L98.9,131.7 L99.6,131.8 L100.2,131.6 L100.2,133.5 L99.6,133.3 L98.9,133.4 L98.3,133.4 L97.7,134.3 L97.1,135.4 L96.5,135.9 L95.8,135.3 L95.2,135.5 L94.6,135.7 L94.0,135.6 L93.4,135.0 L92.7,134.5 L92.1,135.3 L91.5,136.1 L90.9,136.6 L90.3,135.0 L89.6,134.6 L89.0,134.0 L88.4,134.2 L87.8,134.9 L87.2,135.3 L86.5,135.5 L85.9,135.5 L85.3,135.5 L84.7,135.5 L84.1,135.5 L83.4,135.5 L82.8,135.6 L82.2,134.9 L81.6,133.5 L81.0,133.3 L80.3,133.3 L79.7,133.4 L79.1,133.7 L78.5,135.4 L77.9,135.9 L77.2,135.4 L76.6,135.5 L76.0,135.6 L75.4,135.6 L74.8,135.7 L74.1,134.5 L73.5,135.3 L72.9,135.9 L72.3,136.6 L71.7,135.7 L71.0,134.6 L70.4,134.0 L69.8,134.2 L69.2,134.9 L68.6,135.6 L67.9,135.5 L67.3,135.4 L66.7,135.3 L66.1,135.5 L65.5,135.7 L64.8,135.5 L64.2,135.8 L63.6,134.9 L63.0,133.5 L62.4,133.3 L61.7,133.3 L61.1,133.4 L60.5,133.7 L59.9,134.3 L59.3,135.7 L58.6,135.4 L58.0,135.3 L57.4,135.6 L56.8,135.7 L56.2,135.7 L55.5,134.5 L54.9,134.6 L54.3,135.9 L53.7,136.1 L53.1,135.7 L52.4,135.0 L51.8,134.2 L51.2,134.2 L50.6,134.2 L50.0,135.6 L49.3,135.3 L48.7,135.4 L48.1,135.3 L47.5,135.5 L46.9,135.7 L46.2,135.5 L45.6,135.8 L45.0,135.6 L44.4,133.9 L43.8,133.3 L43.1,133.3 L42.5,133.4 L41.9,133.4 L41.3,134.3 L40.7,135.7 L40.0,135.9 L39.4,135.3 L38.8,135.5 L38.2,135.7 L37.6,135.6 L36.9,135.0 L36.3,134.6 L35.7,135.3 L35.1,136.1 L34.5,136.6 L33.8,135.0 L33.2,134.2 L32.6,134.0 L32.0,134.2 L31.4,134.9 L30.7,135.3 L30.1,135.5 L29.5,135.5 L28.9,135.5 L28.3,135.5 L27.6,135.5 L27.0,135.5 L26.4,135.6Z" fill="#1c1e2e" fill-opacity="0.95"/>
<rect x="100.96" y="101.90" width="75.16" height="36.80" fill="#95a7ff"/>
<path d="M110.35,113.20V138.70M119.75,113.20V138.70M129.15,113.20V138.70M138.54,113.20V138.70M147.94,113.20V138.70M157.33,113.20V138.70M166.72,113.20V138.70" fill="none" stroke="#000" stroke-width="0.8" stroke-opacity="0.12"/>
<line x1="100.96" y1="113.20" x2="176.12" y2="113.20" stroke="#000" stroke-width="0.8" stroke-opacity="0.16"/>
<line x1="100.96" y1="101.90" x2="100.96" y2="138.70" stroke="#000" stroke-width="0.9" stroke-opacity="0.42"/>
<path d="M101.6,116.7 L102.2,116.9 L102.8,116.8 L103.4,116.8 L104.0,116.9 L104.7,116.8 L105.3,116.8 L105.9,117.0 L106.5,117.4 L107.1,118.1 L107.8,118.2 L108.4,118.0 L109.0,117.3 L109.6,115.8 L110.2,116.3 L110.9,117.1 L111.5,117.6 L112.1,117.3 L112.7,116.7 L113.3,116.6 L114.0,116.8 L114.6,117.0 L115.2,116.5 L115.8,116.6 L116.4,117.9 L117.1,118.7 L117.7,118.8 L118.3,118.9 L118.9,118.9 L119.5,118.3 L120.2,116.7 L120.8,116.6 L121.4,116.8 L122.0,116.7 L122.6,116.9 L123.3,117.1 L123.9,116.9 L124.5,117.0 L125.1,116.7 L125.7,118.1 L126.4,118.0 L127.0,118.0 L127.6,117.3 L128.2,116.6 L128.8,116.3 L129.5,116.5 L130.1,117.6 L130.7,117.8 L131.3,116.6 L131.9,116.6 L132.6,116.7 L133.2,117.0 L133.8,117.0 L134.4,116.6 L135.0,117.9 L135.7,118.5 L136.3,118.8 L136.9,118.9 L137.5,118.9 L138.1,118.7 L138.8,117.4 L139.4,116.6 L140.0,116.9 L140.6,116.7 L141.2,116.8 L141.9,117.1 L142.5,116.9 L143.1,116.8 L143.7,116.7 L144.3,117.4 L145.0,118.0 L145.6,118.2 L146.2,117.6 L146.8,116.6 L147.4,115.8 L148.1,116.5 L148.7,117.1 L149.3,117.8 L149.9,116.6 L150.5,116.7 L151.2,116.7 L151.8,116.8 L152.4,117.0 L153.0,116.5 L153.6,116.9 L154.3,118.5 L154.9,118.7 L155.5,118.9 L156.1,118.9 L156.7,118.7 L157.4,117.4 L158.0,116.7 L158.6,116.9 L159.2,116.8 L159.8,116.8 L160.5,116.9 L161.1,116.8 L161.7,116.8 L162.3,117.0 L162.9,117.4 L163.6,118.1 L164.2,118.2 L164.8,117.6 L165.4,117.3 L166.0,115.8 L166.7,116.3 L167.3,117.1 L167.9,117.8 L168.5,117.3 L169.1,116.7 L169.8,116.6 L170.4,116.8 L171.0,117.0 L171.6,116.5 L172.2,116.9 L172.9,117.9 L173.5,118.7 L174.1,118.8 L174.7,118.9 L175.3,118.7 L175.3,120.6 L174.7,120.4 L174.1,120.5 L173.5,120.5 L172.9,121.4 L172.2,122.5 L171.6,123.0 L171.0,122.4 L170.4,122.6 L169.8,122.8 L169.1,122.7 L168.5,122.1 L167.9,121.6 L167.3,122.4 L166.7,123.2 L166.0,123.7 L165.4,122.1 L164.8,121.7 L164.2,121.1 L163.6,121.3 L162.9,122.0 L162.3,122.4 L161.7,122.6 L161.1,122.6 L160.5,122.6 L159.8,122.6 L159.2,122.6 L158.6,122.6 L158.0,122.7 L157.4,122.0 L156.7,120.6 L156.1,120.4 L155.5,120.4 L154.9,120.5 L154.3,120.8 L153.6,122.5 L153.0,123.0 L152.4,122.5 L151.8,122.6 L151.2,122.7 L150.5,122.7 L149.9,122.8 L149.3,121.6 L148.7,122.4 L148.1,123.0 L147.4,123.7 L146.8,122.8 L146.2,121.7 L145.6,121.1 L145.0,121.3 L144.3,122.0 L143.7,122.7 L143.1,122.6 L142.5,122.5 L141.9,122.4 L141.2,122.6 L140.6,122.8 L140.0,122.6 L139.4,122.9 L138.8,122.0 L138.1,120.6 L137.5,120.4 L136.9,120.4 L136.3,120.5 L135.7,120.8 L135.0,121.4 L134.4,122.8 L133.8,122.5 L133.2,122.4 L132.6,122.7 L131.9,122.8 L131.3,122.8 L130.7,121.6 L130.1,121.7 L129.5,123.0 L128.8,123.2 L128.2,122.8 L127.6,122.1 L127.0,121.3 L126.4,121.3 L125.7,121.3 L125.1,122.7 L124.5,122.4 L123.9,122.5 L123.3,122.4 L122.6,122.6 L122.0,122.8 L121.4,122.6 L120.8,122.9 L120.2,122.7 L119.5,121.0 L118.9,120.4 L118.3,120.4 L117.7,120.5 L117.1,120.5 L116.4,121.4 L115.8,122.8 L115.2,123.0 L114.6,122.4 L114.0,122.6 L113.3,122.8 L112.7,122.7 L112.1,122.1 L111.5,121.7 L110.9,122.4 L110.2,123.2 L109.6,123.7 L109.0,122.1 L108.4,121.3 L107.8,121.1 L107.1,121.3 L106.5,122.0 L105.9,122.4 L105.3,122.6 L104.7,122.6 L104.0,122.6 L103.4,122.6 L102.8,122.6 L102.2,122.6 L101.6,122.7Z" fill="#1c1e2e" fill-opacity="0.95"/>
<path d="M101.6,129.6 L102.2,129.8 L102.8,129.7 L103.4,129.7 L104.0,129.8 L104.7,129.7 L105.3,129.7 L105.9,129.9 L106.5,130.3 L107.1,131.0 L107.8,131.1 L108.4,130.9 L109.0,130.2 L109.6,128.7 L110.2,129.2 L110.9,130.0 L111.5,130.5 L112.1,130.2 L112.7,129.6 L113.3,129.5 L114.0,129.7 L114.6,129.9 L115.2,129.4 L115.8,129.5 L116.4,130.8 L117.1,131.6 L117.7,131.7 L118.3,131.8 L118.9,131.8 L119.5,131.2 L120.2,129.6 L120.8,129.5 L121.4,129.7 L122.0,129.6 L122.6,129.8 L123.3,130.0 L123.9,129.8 L124.5,129.9 L125.1,129.6 L125.7,131.0 L126.4,130.9 L127.0,130.9 L127.6,130.2 L128.2,129.5 L128.8,129.2 L129.5,129.4 L130.1,130.5 L130.7,130.7 L131.3,129.5 L131.9,129.5 L132.6,129.6 L133.2,129.9 L133.8,129.9 L134.4,129.5 L135.0,130.8 L135.7,131.4 L136.3,131.7 L136.9,131.8 L137.5,131.8 L138.1,131.6 L138.8,130.3 L139.4,129.5 L140.0,129.8 L140.6,129.6 L141.2,129.7 L141.9,130.0 L142.5,129.8 L143.1,129.7 L143.7,129.6 L144.3,130.3 L145.0,130.9 L145.6,131.1 L146.2,130.5 L146.8,129.5 L147.4,128.7 L148.1,129.4 L148.7,130.0 L149.3,130.7 L149.9,129.5 L150.5,129.6 L151.2,129.6 L151.8,129.7 L152.4,129.9 L153.0,129.4 L153.6,129.8 L154.3,131.4 L154.9,131.6 L155.5,131.8 L156.1,131.8 L156.7,131.6 L157.4,130.3 L158.0,129.6 L158.6,129.8 L159.2,129.7 L159.8,129.7 L160.5,129.8 L161.1,129.7 L161.7,129.7 L162.3,129.9 L162.9,130.3 L163.6,131.0 L164.2,131.1 L164.8,130.5 L165.4,130.2 L166.0,128.7 L166.7,129.2 L167.3,130.0 L167.9,130.7 L168.5,130.2 L169.1,129.6 L169.8,129.5 L170.4,129.7 L171.0,129.9 L171.6,129.4 L172.2,129.8 L172.9,130.8 L173.5,131.6 L174.1,131.7 L174.7,131.8 L175.3,131.6 L175.3,133.5 L174.7,133.3 L174.1,133.4 L173.5,133.4 L172.9,134.3 L172.2,135.4 L171.6,135.9 L171.0,135.3 L170.4,135.5 L169.8,135.7 L169.1,135.6 L168.5,135.0 L167.9,134.5 L167.3,135.3 L166.7,136.1 L166.0,136.6 L165.4,135.0 L164.8,134.6 L164.2,134.0 L163.6,134.2 L162.9,134.9 L162.3,135.3 L161.7,135.5 L161.1,135.5 L160.5,135.5 L159.8,135.5 L159.2,135.5 L158.6,135.5 L158.0,135.6 L157.4,134.9 L156.7,133.5 L156.1,133.3 L155.5,133.3 L154.9,133.4 L154.3,133.7 L153.6,135.4 L153.0,135.9 L152.4,135.4 L151.8,135.5 L151.2,135.6 L150.5,135.6 L149.9,135.7 L149.3,134.5 L148.7,135.3 L148.1,135.9 L147.4,136.6 L146.8,135.7 L146.2,134.6 L145.6,134.0 L145.0,134.2 L144.3,134.9 L143.7,135.6 L143.1,135.5 L142.5,135.4 L141.9,135.3 L141.2,135.5 L140.6,135.7 L140.0,135.5 L139.4,135.8 L138.8,134.9 L138.1,133.5 L137.5,133.3 L136.9,133.3 L136.3,133.4 L135.7,133.7 L135.0,134.3 L134.4,135.7 L133.8,135.4 L133.2,135.3 L132.6,135.6 L131.9,135.7 L131.3,135.7 L130.7,134.5 L130.1,134.6 L129.5,135.9 L128.8,136.1 L128.2,135.7 L127.6,135.0 L127.0,134.2 L126.4,134.2 L125.7,134.2 L125.1,135.6 L124.5,135.3 L123.9,135.4 L123.3,135.3 L122.6,135.5 L122.0,135.7 L121.4,135.5 L120.8,135.8 L120.2,135.6 L119.5,133.9 L118.9,133.3 L118.3,133.3 L117.7,133.4 L117.1,133.4 L116.4,134.3 L115.8,135.7 L115.2,135.9 L114.6,135.3 L114.0,135.5 L113.3,135.7 L112.7,135.6 L112.1,135.0 L111.5,134.6 L110.9,135.3 L110.2,136.1 L109.6,136.6 L109.0,135.0 L108.4,134.2 L107.8,134.0 L107.1,134.2 L106.5,134.9 L105.9,135.3 L105.3,135.5 L104.7,135.5 L104.0,135.5 L103.4,135.5 L102.8,135.5 L102.2,135.5 L101.6,135.6Z" fill="#1c1e2e" fill-opacity="0.95"/>
<rect x="176.12" y="101.90" width="75.16" height="36.80" fill="#95a7ff"/>
<path d="M185.52,113.20V138.70M194.91,113.20V138.70M204.31,113.20V138.70M213.70,113.20V138.70M223.09,113.20V138.70M232.49,113.20V138.70M241.88,113.20V138.70" fill="none" stroke="#000" stroke-width="0.8" stroke-opacity="0.12"/>
<line x1="176.12" y1="113.20" x2="251.28" y2="113.20" stroke="#000" stroke-width="0.8" stroke-opacity="0.16"/>
<line x1="176.12" y1="101.90" x2="176.12" y2="138.70" stroke="#000" stroke-width="0.9" stroke-opacity="0.42"/>
<path d="M176.7,116.7 L177.3,116.9 L178.0,116.8 L178.6,116.8 L179.2,116.9 L179.8,116.8 L180.4,116.8 L181.1,117.0 L181.7,117.4 L182.3,118.1 L182.9,118.2 L183.5,118.0 L184.2,117.3 L184.8,115.8 L185.4,116.3 L186.0,117.1 L186.6,117.6 L187.3,117.3 L187.9,116.7 L188.5,116.6 L189.1,116.8 L189.7,117.0 L190.4,116.5 L191.0,116.6 L191.6,117.9 L192.2,118.7 L192.8,118.8 L193.5,118.9 L194.1,118.9 L194.7,118.3 L195.3,116.7 L195.9,116.6 L196.6,116.8 L197.2,116.7 L197.8,116.9 L198.4,117.1 L199.0,116.9 L199.7,117.0 L200.3,116.7 L200.9,118.1 L201.5,118.0 L202.1,118.0 L202.8,117.3 L203.4,116.6 L204.0,116.3 L204.6,116.5 L205.2,117.6 L205.9,117.8 L206.5,116.6 L207.1,116.6 L207.7,116.7 L208.3,117.0 L209.0,117.0 L209.6,116.6 L210.2,117.9 L210.8,118.5 L211.4,118.8 L212.1,118.9 L212.7,118.9 L213.3,118.7 L213.9,117.4 L214.5,116.6 L215.2,116.9 L215.8,116.7 L216.4,116.8 L217.0,117.1 L217.6,116.9 L218.3,116.8 L218.9,116.7 L219.5,117.4 L220.1,118.0 L220.7,118.2 L221.4,117.6 L222.0,116.6 L222.6,115.8 L223.2,116.5 L223.8,117.1 L224.5,117.8 L225.1,116.6 L225.7,116.7 L226.3,116.7 L226.9,116.8 L227.6,117.0 L228.2,116.5 L228.8,116.9 L229.4,118.5 L230.0,118.7 L230.7,118.9 L231.3,118.9 L231.9,118.7 L232.5,117.4 L233.1,116.7 L233.8,116.9 L234.4,116.8 L235.0,116.8 L235.6,116.9 L236.2,116.8 L236.9,116.8 L237.5,117.0 L238.1,117.4 L238.7,118.1 L239.3,118.2 L240.0,117.6 L240.6,117.3 L241.2,115.8 L241.8,116.3 L242.4,117.1 L243.1,117.8 L243.7,117.3 L244.3,116.7 L244.9,116.6 L245.5,116.8 L246.2,117.0 L246.8,116.5 L247.4,116.9 L248.0,117.9 L248.6,118.7 L249.3,118.8 L249.9,118.9 L250.5,118.7 L250.5,120.6 L249.9,120.4 L249.3,120.5 L248.6,120.5 L248.0,121.4 L247.4,122.5 L246.8,123.0 L246.2,122.4 L245.5,122.6 L244.9,122.8 L244.3,122.7 L243.7,122.1 L243.1,121.6 L242.4,122.4 L241.8,123.2 L241.2,123.7 L240.6,122.1 L240.0,121.7 L239.3,121.1 L238.7,121.3 L238.1,122.0 L237.5,122.4 L236.9,122.6 L236.2,122.6 L235.6,122.6 L235.0,122.6 L234.4,122.6 L233.8,122.6 L233.1,122.7 L232.5,122.0 L231.9,120.6 L231.3,120.4 L230.7,120.4 L230.0,120.5 L229.4,120.8 L228.8,122.5 L228.2,123.0 L227.6,122.5 L226.9,122.6 L226.3,122.7 L225.7,122.7 L225.1,122.8 L224.5,121.6 L223.8,122.4 L223.2,123.0 L222.6,123.7 L222.0,122.8 L221.4,121.7 L220.7,121.1 L220.1,121.3 L219.5,122.0 L218.9,122.7 L218.3,122.6 L217.6,122.5 L217.0,122.4 L216.4,122.6 L215.8,122.8 L215.2,122.6 L214.5,122.9 L213.9,122.0 L213.3,120.6 L212.7,120.4 L212.1,120.4 L211.4,120.5 L210.8,120.8 L210.2,121.4 L209.6,122.8 L209.0,122.5 L208.3,122.4 L207.7,122.7 L207.1,122.8 L206.5,122.8 L205.9,121.6 L205.2,121.7 L204.6,123.0 L204.0,123.2 L203.4,122.8 L202.8,122.1 L202.1,121.3 L201.5,121.3 L200.9,121.3 L200.3,122.7 L199.7,122.4 L199.0,122.5 L198.4,122.4 L197.8,122.6 L197.2,122.8 L196.6,122.6 L195.9,122.9 L195.3,122.7 L194.7,121.0 L194.1,120.4 L193.5,120.4 L192.8,120.5 L192.2,120.5 L191.6,121.4 L191.0,122.8 L190.4,123.0 L189.7,122.4 L189.1,122.6 L188.5,122.8 L187.9,122.7 L187.3,122.1 L186.6,121.7 L186.0,122.4 L185.4,123.2 L184.8,123.7 L184.2,122.1 L183.5,121.3 L182.9,121.1 L182.3,121.3 L181.7,122.0 L181.1,122.4 L180.4,122.6 L179.8,122.6 L179.2,122.6 L178.6,122.6 L178.0,122.6 L177.3,122.6 L176.7,122.7Z" fill="#1c1e2e" fill-opacity="0.95"/>
<path d="M176.7,129.6 L177.3,129.8 L178.0,129.7 L178.6,129.7 L179.2,129.8 L179.8,129.7 L180.4,129.7 L181.1,129.9 L181.7,130.3 L182.3,131.0 L182.9,131.1 L183.5,130.9 L184.2,130.2 L184.8,128.7 L185.4,129.2 L186.0,130.0 L186.6,130.5 L187.3,130.2 L187.9,129.6 L188.5,129.5 L189.1,129.7 L189.7,129.9 L190.4,129.4 L191.0,129.5 L191.6,130.8 L192.2,131.6 L192.8,131.7 L193.5,131.8 L194.1,131.8 L194.7,131.2 L195.3,129.6 L195.9,129.5 L196.6,129.7 L197.2,129.6 L197.8,129.8 L198.4,130.0 L199.0,129.8 L199.7,129.9 L200.3,129.6 L200.9,131.0 L201.5,130.9 L202.1,130.9 L202.8,130.2 L203.4,129.5 L204.0,129.2 L204.6,129.4 L205.2,130.5 L205.9,130.7 L206.5,129.5 L207.1,129.5 L207.7,129.6 L208.3,129.9 L209.0,129.9 L209.6,129.5 L210.2,130.8 L210.8,131.4 L211.4,131.7 L212.1,131.8 L212.7,131.8 L213.3,131.6 L213.9,130.3 L214.5,129.5 L215.2,129.8 L215.8,129.6 L216.4,129.7 L217.0,130.0 L217.6,129.8 L218.3,129.7 L218.9,129.6 L219.5,130.3 L220.1,130.9 L220.7,131.1 L221.4,130.5 L222.0,129.5 L222.6,128.7 L223.2,129.4 L223.8,130.0 L224.5,130.7 L225.1,129.5 L225.7,129.6 L226.3,129.6 L226.9,129.7 L227.6,129.9 L228.2,129.4 L228.8,129.8 L229.4,131.4 L230.0,131.6 L230.7,131.8 L231.3,131.8 L231.9,131.6 L232.5,130.3 L233.1,129.6 L233.8,129.8 L234.4,129.7 L235.0,129.7 L235.6,129.8 L236.2,129.7 L236.9,129.7 L237.5,129.9 L238.1,130.3 L238.7,131.0 L239.3,131.1 L240.0,130.5 L240.6,130.2 L241.2,128.7 L241.8,129.2 L242.4,130.0 L243.1,130.7 L243.7,130.2 L244.3,129.6 L244.9,129.5 L245.5,129.7 L246.2,129.9 L246.8,129.4 L247.4,129.8 L248.0,130.8 L248.6,131.6 L249.3,131.7 L249.9,131.8 L250.5,131.6 L250.5,133.5 L249.9,133.3 L249.3,133.4 L248.6,133.4 L248.0,134.3 L247.4,135.4 L246.8,135.9 L246.2,135.3 L245.5,135.5 L244.9,135.7 L244.3,135.6 L243.7,135.0 L243.1,134.5 L242.4,135.3 L241.8,136.1 L241.2,136.6 L240.6,135.0 L240.0,134.6 L239.3,134.0 L238.7,134.2 L238.1,134.9 L237.5,135.3 L236.9,135.5 L236.2,135.5 L235.6,135.5 L235.0,135.5 L234.4,135.5 L233.8,135.5 L233.1,135.6 L232.5,134.9 L231.9,133.5 L231.3,133.3 L230.7,133.3 L230.0,133.4 L229.4,133.7 L228.8,135.4 L228.2,135.9 L227.6,135.4 L226.9,135.5 L226.3,135.6 L225.7,135.6 L225.1,135.7 L224.5,134.5 L223.8,135.3 L223.2,135.9 L222.6,136.6 L222.0,135.7 L221.4,134.6 L220.7,134.0 L220.1,134.2 L219.5,134.9 L218.9,135.6 L218.3,135.5 L217.6,135.4 L217.0,135.3 L216.4,135.5 L215.8,135.7 L215.2,135.5 L214.5,135.8 L213.9,134.9 L213.3,133.5 L212.7,133.3 L212.1,133.3 L211.4,133.4 L210.8,133.7 L210.2,134.3 L209.6,135.7 L209.0,135.4 L208.3,135.3 L207.7,135.6 L207.1,135.7 L206.5,135.7 L205.9,134.5 L205.2,134.6 L204.6,135.9 L204.0,136.1 L203.4,135.7 L202.8,135.0 L202.1,134.2 L201.5,134.2 L200.9,134.2 L200.3,135.6 L199.7,135.3 L199.0,135.4 L198.4,135.3 L197.8,135.5 L197.2,135.7 L196.6,135.5 L195.9,135.8 L195.3,135.6 L194.7,133.9 L194.1,133.3 L193.5,133.3 L192.8,133.4 L192.2,133.4 L191.6,134.3 L191.0,135.7 L190.4,135.9 L189.7,135.3 L189.1,135.5 L188.5,135.7 L187.9,135.6 L187.3,135.0 L186.6,134.6 L186.0,135.3 L185.4,136.1 L184.8,136.6 L184.2,135.0 L183.5,134.2 L182.9,134.0 L182.3,134.2 L181.7,134.9 L181.1,135.3 L180.4,135.5 L179.8,135.5 L179.2,135.5 L178.6,135.5 L178.0,135.5 L177.3,135.5 L176.7,135.6Z" fill="#1c1e2e" fill-opacity="0.95"/>
<rect x="251.28" y="101.90" width="75.16" height="36.80" fill="#95a7ff"/>
<path d="M260.68,113.20V138.70M270.07,113.20V138.70M279.46,113.20V138.70M288.86,113.20V138.70M298.25,113.20V138.70M307.65,113.20V138.70M317.05,113.20V138.70" fill="none" stroke="#000" stroke-width="0.8" stroke-opacity="0.12"/>
<line x1="251.28" y1="113.20" x2="326.44" y2="113.20" stroke="#000" stroke-width="0.8" stroke-opacity="0.16"/>
<line x1="251.28" y1="101.90" x2="251.28" y2="138.70" stroke="#000" stroke-width="0.9" stroke-opacity="0.42"/>
<path d="M251.9,116.7 L252.5,116.9 L253.1,116.8 L253.7,116.8 L254.4,116.9 L255.0,116.8 L255.6,116.8 L256.2,117.0 L256.8,117.4 L257.5,118.1 L258.1,118.2 L258.7,118.0 L259.3,117.3 L259.9,115.8 L260.6,116.3 L261.2,117.1 L261.8,117.6 L262.4,117.3 L263.0,116.7 L263.7,116.6 L264.3,116.8 L264.9,117.0 L265.5,116.5 L266.1,116.6 L266.8,117.9 L267.4,118.7 L268.0,118.8 L268.6,118.9 L269.2,118.9 L269.9,118.3 L270.5,116.7 L271.1,116.6 L271.7,116.8 L272.3,116.7 L273.0,116.9 L273.6,117.1 L274.2,116.9 L274.8,117.0 L275.4,116.7 L276.1,118.1 L276.7,118.0 L277.3,118.0 L277.9,117.3 L278.5,116.6 L279.2,116.3 L279.8,116.5 L280.4,117.6 L281.0,117.8 L281.6,116.6 L282.3,116.6 L282.9,116.7 L283.5,117.0 L284.1,117.0 L284.7,116.6 L285.4,117.9 L286.0,118.5 L286.6,118.8 L287.2,118.9 L287.8,118.9 L288.5,118.7 L289.1,117.4 L289.7,116.6 L290.3,116.9 L290.9,116.7 L291.6,116.8 L292.2,117.1 L292.8,116.9 L293.4,116.8 L294.0,116.7 L294.7,117.4 L295.3,118.0 L295.9,118.2 L296.5,117.6 L297.1,116.6 L297.8,115.8 L298.4,116.5 L299.0,117.1 L299.6,117.8 L300.2,116.6 L300.9,116.7 L301.5,116.7 L302.1,116.8 L302.7,117.0 L303.3,116.5 L304.0,116.9 L304.6,118.5 L305.2,118.7 L305.8,118.9 L306.4,118.9 L307.1,118.7 L307.7,117.4 L308.3,116.7 L308.9,116.9 L309.5,116.8 L310.2,116.8 L310.8,116.9 L311.4,116.8 L312.0,116.8 L312.6,117.0 L313.3,117.4 L313.9,118.1 L314.5,118.2 L315.1,117.6 L315.7,117.3 L316.4,115.8 L317.0,116.3 L317.6,117.1 L318.2,117.8 L318.8,117.3 L319.5,116.7 L320.1,116.6 L320.7,116.8 L321.3,117.0 L321.9,116.5 L322.6,116.9 L323.2,117.9 L323.8,118.7 L324.4,118.8 L325.0,118.9 L325.7,118.7 L325.7,120.6 L325.0,120.4 L324.4,120.5 L323.8,120.5 L323.2,121.4 L322.6,122.5 L321.9,123.0 L321.3,122.4 L320.7,122.6 L320.1,122.8 L319.5,122.7 L318.8,122.1 L318.2,121.6 L317.6,122.4 L317.0,123.2 L316.4,123.7 L315.7,122.1 L315.1,121.7 L314.5,121.1 L313.9,121.3 L313.3,122.0 L312.6,122.4 L312.0,122.6 L311.4,122.6 L310.8,122.6 L310.2,122.6 L309.5,122.6 L308.9,122.6 L308.3,122.7 L307.7,122.0 L307.1,120.6 L306.4,120.4 L305.8,120.4 L305.2,120.5 L304.6,120.8 L304.0,122.5 L303.3,123.0 L302.7,122.5 L302.1,122.6 L301.5,122.7 L300.9,122.7 L300.2,122.8 L299.6,121.6 L299.0,122.4 L298.4,123.0 L297.8,123.7 L297.1,122.8 L296.5,121.7 L295.9,121.1 L295.3,121.3 L294.7,122.0 L294.0,122.7 L293.4,122.6 L292.8,122.5 L292.2,122.4 L291.6,122.6 L290.9,122.8 L290.3,122.6 L289.7,122.9 L289.1,122.0 L288.5,120.6 L287.8,120.4 L287.2,120.4 L286.6,120.5 L286.0,120.8 L285.4,121.4 L284.7,122.8 L284.1,122.5 L283.5,122.4 L282.9,122.7 L282.3,122.8 L281.6,122.8 L281.0,121.6 L280.4,121.7 L279.8,123.0 L279.2,123.2 L278.5,122.8 L277.9,122.1 L277.3,121.3 L276.7,121.3 L276.1,121.3 L275.4,122.7 L274.8,122.4 L274.2,122.5 L273.6,122.4 L273.0,122.6 L272.3,122.8 L271.7,122.6 L271.1,122.9 L270.5,122.7 L269.9,121.0 L269.2,120.4 L268.6,120.4 L268.0,120.5 L267.4,120.5 L266.8,121.4 L266.1,122.8 L265.5,123.0 L264.9,122.4 L264.3,122.6 L263.7,122.8 L263.0,122.7 L262.4,122.1 L261.8,121.7 L261.2,122.4 L260.6,123.2 L259.9,123.7 L259.3,122.1 L258.7,121.3 L258.1,121.1 L257.5,121.3 L256.8,122.0 L256.2,122.4 L255.6,122.6 L255.0,122.6 L254.4,122.6 L253.7,122.6 L253.1,122.6 L252.5,122.6 L251.9,122.7Z" fill="#1c1e2e" fill-opacity="0.95"/>
<path d="M251.9,129.6 L252.5,129.8 L253.1,129.7 L253.7,129.7 L254.4,129.8 L255.0,129.7 L255.6,129.7 L256.2,129.9 L256.8,130.3 L257.5,131.0 L258.1,131.1 L258.7,130.9 L259.3,130.2 L259.9,128.7 L260.6,129.2 L261.2,130.0 L261.8,130.5 L262.4,130.2 L263.0,129.6 L263.7,129.5 L264.3,129.7 L264.9,129.9 L265.5,129.4 L266.1,129.5 L266.8,130.8 L267.4,131.6 L268.0,131.7 L268.6,131.8 L269.2,131.8 L269.9,131.2 L270.5,129.6 L271.1,129.5 L271.7,129.7 L272.3,129.6 L273.0,129.8 L273.6,130.0 L274.2,129.8 L274.8,129.9 L275.4,129.6 L276.1,131.0 L276.7,130.9 L277.3,130.9 L277.9,130.2 L278.5,129.5 L279.2,129.2 L279.8,129.4 L280.4,130.5 L281.0,130.7 L281.6,129.5 L282.3,129.5 L282.9,129.6 L283.5,129.9 L284.1,129.9 L284.7,129.5 L285.4,130.8 L286.0,131.4 L286.6,131.7 L287.2,131.8 L287.8,131.8 L288.5,131.6 L289.1,130.3 L289.7,129.5 L290.3,129.8 L290.9,129.6 L291.6,129.7 L292.2,130.0 L292.8,129.8 L293.4,129.7 L294.0,129.6 L294.7,130.3 L295.3,130.9 L295.9,131.1 L296.5,130.5 L297.1,129.5 L297.8,128.7 L298.4,129.4 L299.0,130.0 L299.6,130.7 L300.2,129.5 L300.9,129.6 L301.5,129.6 L302.1,129.7 L302.7,129.9 L303.3,129.4 L304.0,129.8 L304.6,131.4 L305.2,131.6 L305.8,131.8 L306.4,131.8 L307.1,131.6 L307.7,130.3 L308.3,129.6 L308.9,129.8 L309.5,129.7 L310.2,129.7 L310.8,129.8 L311.4,129.7 L312.0,129.7 L312.6,129.9 L313.3,130.3 L313.9,131.0 L314.5,131.1 L315.1,130.5 L315.7,130.2 L316.4,128.7 L317.0,129.2 L317.6,130.0 L318.2,130.7 L318.8,130.2 L319.5,129.6 L320.1,129.5 L320.7,129.7 L321.3,129.9 L321.9,129.4 L322.6,129.8 L323.2,130.8 L323.8,131.6 L324.4,131.7 L325.0,131.8 L325.7,131.6 L325.7,133.5 L325.0,133.3 L324.4,133.4 L323.8,133.4 L323.2,134.3 L322.6,135.4 L321.9,135.9 L321.3,135.3 L320.7,135.5 L320.1,135.7 L319.5,135.6 L318.8,135.0 L318.2,134.5 L317.6,135.3 L317.0,136.1 L316.4,136.6 L315.7,135.0 L315.1,134.6 L314.5,134.0 L313.9,134.2 L313.3,134.9 L312.6,135.3 L312.0,135.5 L311.4,135.5 L310.8,135.5 L310.2,135.5 L309.5,135.5 L308.9,135.5 L308.3,135.6 L307.7,134.9 L307.1,133.5 L306.4,133.3 L305.8,133.3 L305.2,133.4 L304.6,133.7 L304.0,135.4 L303.3,135.9 L302.7,135.4 L302.1,135.5 L301.5,135.6 L300.9,135.6 L300.2,135.7 L299.6,134.5 L299.0,135.3 L298.4,135.9 L297.8,136.6 L297.1,135.7 L296.5,134.6 L295.9,134.0 L295.3,134.2 L294.7,134.9 L294.0,135.6 L293.4,135.5 L292.8,135.4 L292.2,135.3 L291.6,135.5 L290.9,135.7 L290.3,135.5 L289.7,135.8 L289.1,134.9 L288.5,133.5 L287.8,133.3 L287.2,133.3 L286.6,133.4 L286.0,133.7 L285.4,134.3 L284.7,135.7 L284.1,135.4 L283.5,135.3 L282.9,135.6 L282.3,135.7 L281.6,135.7 L281.0,134.5 L280.4,134.6 L279.8,135.9 L279.2,136.1 L278.5,135.7 L277.9,135.0 L277.3,134.2 L276.7,134.2 L276.1,134.2 L275.4,135.6 L274.8,135.3 L274.2,135.4 L273.6,135.3 L273.0,135.5 L272.3,135.7 L271.7,135.5 L271.1,135.8 L270.5,135.6 L269.9,133.9 L269.2,133.3 L268.6,133.3 L268.0,133.4 L267.4,133.4 L266.8,134.3 L266.1,135.7 L265.5,135.9 L264.9,135.3 L264.3,135.5 L263.7,135.7 L263.0,135.6 L262.4,135.0 L261.8,134.6 L261.2,135.3 L260.6,136.1 L259.9,136.6 L259.3,135.0 L258.7,134.2 L258.1,134.0 L257.5,134.2 L256.8,134.9 L256.2,135.3 L255.6,135.5 L255.0,135.5 L254.4,135.5 L253.7,135.5 L253.1,135.5 L252.5,135.5 L251.9,135.6Z" fill="#1c1e2e" fill-opacity="0.95"/>
<rect x="326.44" y="101.90" width="75.16" height="36.80" fill="#95a7ff"/>
<path d="M335.83,113.20V138.70M345.23,113.20V138.70M354.62,113.20V138.70M364.02,113.20V138.70M373.42,113.20V138.70M382.81,113.20V138.70M392.20,113.20V138.70" fill="none" stroke="#000" stroke-width="0.8" stroke-opacity="0.12"/>
<line x1="326.44" y1="113.20" x2="401.60" y2="113.20" stroke="#000" stroke-width="0.8" stroke-opacity="0.16"/>
<line x1="326.44" y1="101.90" x2="326.44" y2="138.70" stroke="#000" stroke-width="0.9" stroke-opacity="0.42"/>
<path d="M327.0,116.7 L327.7,116.9 L328.3,116.8 L328.9,116.8 L329.5,116.9 L330.1,116.8 L330.8,116.8 L331.4,117.0 L332.0,117.4 L332.6,118.1 L333.2,118.2 L333.9,118.0 L334.5,117.3 L335.1,115.8 L335.7,116.3 L336.3,117.1 L337.0,117.6 L337.6,117.3 L338.2,116.7 L338.8,116.6 L339.4,116.8 L340.1,117.0 L340.7,116.5 L341.3,116.6 L341.9,117.9 L342.5,118.7 L343.2,118.8 L343.8,118.9 L344.4,118.9 L345.0,118.3 L345.6,116.7 L346.3,116.6 L346.9,116.8 L347.5,116.7 L348.1,116.9 L348.7,117.1 L349.4,116.9 L350.0,117.0 L350.6,116.7 L351.2,118.1 L351.8,118.0 L352.5,118.0 L353.1,117.3 L353.7,116.6 L354.3,116.3 L354.9,116.5 L355.6,117.6 L356.2,117.8 L356.8,116.6 L357.4,116.6 L358.0,116.7 L358.7,117.0 L359.3,117.0 L359.9,116.6 L360.5,117.9 L361.1,118.5 L361.8,118.8 L362.4,118.9 L363.0,118.9 L363.6,118.7 L364.2,117.4 L364.9,116.6 L365.5,116.9 L366.1,116.7 L366.7,116.8 L367.3,117.1 L368.0,116.9 L368.6,116.8 L369.2,116.7 L369.8,117.4 L370.4,118.0 L371.1,118.2 L371.7,117.6 L372.3,116.6 L372.9,115.8 L373.5,116.5 L374.2,117.1 L374.8,117.8 L375.4,116.6 L376.0,116.7 L376.6,116.7 L377.3,116.8 L377.9,117.0 L378.5,116.5 L379.1,116.9 L379.7,118.5 L380.4,118.7 L381.0,118.9 L381.6,118.9 L382.2,118.7 L382.8,117.4 L383.5,116.7 L384.1,116.9 L384.7,116.8 L385.3,116.8 L385.9,116.9 L386.6,116.8 L387.2,116.8 L387.8,117.0 L388.4,117.4 L389.0,118.1 L389.7,118.2 L390.3,117.6 L390.9,117.3 L391.5,115.8 L392.1,116.3 L392.8,117.1 L393.4,117.8 L394.0,117.3 L394.6,116.7 L395.2,116.6 L395.9,116.8 L396.5,117.0 L397.1,116.5 L397.7,116.9 L398.3,117.9 L399.0,118.7 L399.6,118.8 L400.2,118.9 L400.8,118.7 L400.8,120.6 L400.2,120.4 L399.6,120.5 L399.0,120.5 L398.3,121.4 L397.7,122.5 L397.1,123.0 L396.5,122.4 L395.9,122.6 L395.2,122.8 L394.6,122.7 L394.0,122.1 L393.4,121.6 L392.8,122.4 L392.1,123.2 L391.5,123.7 L390.9,122.1 L390.3,121.7 L389.7,121.1 L389.0,121.3 L388.4,122.0 L387.8,122.4 L387.2,122.6 L386.6,122.6 L385.9,122.6 L385.3,122.6 L384.7,122.6 L384.1,122.6 L383.5,122.7 L382.8,122.0 L382.2,120.6 L381.6,120.4 L381.0,120.4 L380.4,120.5 L379.7,120.8 L379.1,122.5 L378.5,123.0 L377.9,122.5 L377.3,122.6 L376.6,122.7 L376.0,122.7 L375.4,122.8 L374.8,121.6 L374.2,122.4 L373.5,123.0 L372.9,123.7 L372.3,122.8 L371.7,121.7 L371.1,121.1 L370.4,121.3 L369.8,122.0 L369.2,122.7 L368.6,122.6 L368.0,122.5 L367.3,122.4 L366.7,122.6 L366.1,122.8 L365.5,122.6 L364.9,122.9 L364.2,122.0 L363.6,120.6 L363.0,120.4 L362.4,120.4 L361.8,120.5 L361.1,120.8 L360.5,121.4 L359.9,122.8 L359.3,122.5 L358.7,122.4 L358.0,122.7 L357.4,122.8 L356.8,122.8 L356.2,121.6 L355.6,121.7 L354.9,123.0 L354.3,123.2 L353.7,122.8 L353.1,122.1 L352.5,121.3 L351.8,121.3 L351.2,121.3 L350.6,122.7 L350.0,122.4 L349.4,122.5 L348.7,122.4 L348.1,122.6 L347.5,122.8 L346.9,122.6 L346.3,122.9 L345.6,122.7 L345.0,121.0 L344.4,120.4 L343.8,120.4 L343.2,120.5 L342.5,120.5 L341.9,121.4 L341.3,122.8 L340.7,123.0 L340.1,122.4 L339.4,122.6 L338.8,122.8 L338.2,122.7 L337.6,122.1 L337.0,121.7 L336.3,122.4 L335.7,123.2 L335.1,123.7 L334.5,122.1 L333.9,121.3 L333.2,121.1 L332.6,121.3 L332.0,122.0 L331.4,122.4 L330.8,122.6 L330.1,122.6 L329.5,122.6 L328.9,122.6 L328.3,122.6 L327.7,122.6 L327.0,122.7Z" fill="#1c1e2e" fill-opacity="0.95"/>
<path d="M327.0,129.6 L327.7,129.8 L328.3,129.7 L328.9,129.7 L329.5,129.8 L330.1,129.7 L330.8,129.7 L331.4,129.9 L332.0,130.3 L332.6,131.0 L333.2,131.1 L333.9,130.9 L334.5,130.2 L335.1,128.7 L335.7,129.2 L336.3,130.0 L337.0,130.5 L337.6,130.2 L338.2,129.6 L338.8,129.5 L339.4,129.7 L340.1,129.9 L340.7,129.4 L341.3,129.5 L341.9,130.8 L342.5,131.6 L343.2,131.7 L343.8,131.8 L344.4,131.8 L345.0,131.2 L345.6,129.6 L346.3,129.5 L346.9,129.7 L347.5,129.6 L348.1,129.8 L348.7,130.0 L349.4,129.8 L350.0,129.9 L350.6,129.6 L351.2,131.0 L351.8,130.9 L352.5,130.9 L353.1,130.2 L353.7,129.5 L354.3,129.2 L354.9,129.4 L355.6,130.5 L356.2,130.7 L356.8,129.5 L357.4,129.5 L358.0,129.6 L358.7,129.9 L359.3,129.9 L359.9,129.5 L360.5,130.8 L361.1,131.4 L361.8,131.7 L362.4,131.8 L363.0,131.8 L363.6,131.6 L364.2,130.3 L364.9,129.5 L365.5,129.8 L366.1,129.6 L366.7,129.7 L367.3,130.0 L368.0,129.8 L368.6,129.7 L369.2,129.6 L369.8,130.3 L370.4,130.9 L371.1,131.1 L371.7,130.5 L372.3,129.5 L372.9,128.7 L373.5,129.4 L374.2,130.0 L374.8,130.7 L375.4,129.5 L376.0,129.6 L376.6,129.6 L377.3,129.7 L377.9,129.9 L378.5,129.4 L379.1,129.8 L379.7,131.4 L380.4,131.6 L381.0,131.8 L381.6,131.8 L382.2,131.6 L382.8,130.3 L383.5,129.6 L384.1,129.8 L384.7,129.7 L385.3,129.7 L385.9,129.8 L386.6,129.7 L387.2,129.7 L387.8,129.9 L388.4,130.3 L389.0,131.0 L389.7,131.1 L390.3,130.5 L390.9,130.2 L391.5,128.7 L392.1,129.2 L392.8,130.0 L393.4,130.7 L394.0,130.2 L394.6,129.6 L395.2,129.5 L395.9,129.7 L396.5,129.9 L397.1,129.4 L397.7,129.8 L398.3,130.8 L399.0,131.6 L399.6,131.7 L400.2,131.8 L400.8,131.6 L400.8,133.5 L400.2,133.3 L399.6,133.4 L399.0,133.4 L398.3,134.3 L397.7,135.4 L397.1,135.9 L396.5,135.3 L395.9,135.5 L395.2,135.7 L394.6,135.6 L394.0,135.0 L393.4,134.5 L392.8,135.3 L392.1,136.1 L391.5,136.6 L390.9,135.0 L390.3,134.6 L389.7,134.0 L389.0,134.2 L388.4,134.9 L387.8,135.3 L387.2,135.5 L386.6,135.5 L385.9,135.5 L385.3,135.5 L384.7,135.5 L384.1,135.5 L383.5,135.6 L382.8,134.9 L382.2,133.5 L381.6,133.3 L381.0,133.3 L380.4,133.4 L379.7,133.7 L379.1,135.4 L378.5,135.9 L377.9,135.4 L377.3,135.5 L376.6,135.6 L376.0,135.6 L375.4,135.7 L374.8,134.5 L374.2,135.3 L373.5,135.9 L372.9,136.6 L372.3,135.7 L371.7,134.6 L371.1,134.0 L370.4,134.2 L369.8,134.9 L369.2,135.6 L368.6,135.5 L368.0,135.4 L367.3,135.3 L366.7,135.5 L366.1,135.7 L365.5,135.5 L364.9,135.8 L364.2,134.9 L363.6,133.5 L363.0,133.3 L362.4,133.3 L361.8,133.4 L361.1,133.7 L360.5,134.3 L359.9,135.7 L359.3,135.4 L358.7,135.3 L358.0,135.6 L357.4,135.7 L356.8,135.7 L356.2,134.5 L355.6,134.6 L354.9,135.9 L354.3,136.1 L353.7,135.7 L353.1,135.0 L352.5,134.2 L351.8,134.2 L351.2,134.2 L350.6,135.6 L350.0,135.3 L349.4,135.4 L348.7,135.3 L348.1,135.5 L347.5,135.7 L346.9,135.5 L346.3,135.8 L345.6,135.6 L345.0,133.9 L344.4,133.3 L343.8,133.3 L343.2,133.4 L342.5,133.4 L341.9,134.3 L341.3,135.7 L340.7,135.9 L340.1,135.3 L339.4,135.5 L338.8,135.7 L338.2,135.6 L337.6,135.0 L337.0,134.6 L336.3,135.3 L335.7,136.1 L335.1,136.6 L334.5,135.0 L333.9,134.2 L333.2,134.0 L332.6,134.2 L332.0,134.9 L331.4,135.3 L330.8,135.5 L330.1,135.5 L329.5,135.5 L328.9,135.5 L328.3,135.5 L327.7,135.5 L327.0,135.6Z" fill="#1c1e2e" fill-opacity="0.95"/>
<rect x="401.60" y="101.90" width="75.16" height="36.80" fill="#95a7ff"/>
<path d="M411.00,113.20V138.70M420.39,113.20V138.70M429.78,113.20V138.70M439.18,113.20V138.70M448.57,113.20V138.70M457.97,113.20V138.70M467.37,113.20V138.70" fill="none" stroke="#000" stroke-width="0.8" stroke-opacity="0.12"/>
<line x1="401.60" y1="113.20" x2="476.76" y2="113.20" stroke="#000" stroke-width="0.8" stroke-opacity="0.16"/>
<line x1="401.60" y1="101.90" x2="401.60" y2="138.70" stroke="#000" stroke-width="0.9" stroke-opacity="0.42"/>
<path d="M402.2,116.7 L402.8,116.9 L403.4,116.8 L404.1,116.8 L404.7,116.9 L405.3,116.8 L405.9,116.8 L406.5,117.0 L407.2,117.4 L407.8,118.1 L408.4,118.2 L409.0,118.0 L409.6,117.3 L410.3,115.8 L410.9,116.3 L411.5,117.1 L412.1,117.6 L412.7,117.3 L413.4,116.7 L414.0,116.6 L414.6,116.8 L415.2,117.0 L415.8,116.5 L416.5,116.6 L417.1,117.9 L417.7,118.7 L418.3,118.8 L418.9,118.9 L419.6,118.9 L420.2,118.3 L420.8,116.7 L421.4,116.6 L422.0,116.8 L422.7,116.7 L423.3,116.9 L423.9,117.1 L424.5,116.9 L425.1,117.0 L425.8,116.7 L426.4,118.1 L427.0,118.0 L427.6,118.0 L428.2,117.3 L428.9,116.6 L429.5,116.3 L430.1,116.5 L430.7,117.6 L431.3,117.8 L432.0,116.6 L432.6,116.6 L433.2,116.7 L433.8,117.0 L434.4,117.0 L435.1,116.6 L435.7,117.9 L436.3,118.5 L436.9,118.8 L437.5,118.9 L438.2,118.9 L438.8,118.7 L439.4,117.4 L440.0,116.6 L440.6,116.9 L441.3,116.7 L441.9,116.8 L442.5,117.1 L443.1,116.9 L443.7,116.8 L444.4,116.7 L445.0,117.4 L445.6,118.0 L446.2,118.2 L446.8,117.6 L447.5,116.6 L448.1,115.8 L448.7,116.5 L449.3,117.1 L449.9,117.8 L450.6,116.6 L451.2,116.7 L451.8,116.7 L452.4,116.8 L453.0,117.0 L453.7,116.5 L454.3,116.9 L454.9,118.5 L455.5,118.7 L456.1,118.9 L456.8,118.9 L457.4,118.7 L458.0,117.4 L458.6,116.7 L459.2,116.9 L459.9,116.8 L460.5,116.8 L461.1,116.9 L461.7,116.8 L462.3,116.8 L463.0,117.0 L463.6,117.4 L464.2,118.1 L464.8,118.2 L465.4,117.6 L466.1,117.3 L466.7,115.8 L467.3,116.3 L467.9,117.1 L468.5,117.8 L469.2,117.3 L469.8,116.7 L470.4,116.6 L471.0,116.8 L471.6,117.0 L472.3,116.5 L472.9,116.9 L473.5,117.9 L474.1,118.7 L474.7,118.8 L475.4,118.9 L476.0,118.7 L476.0,120.6 L475.4,120.4 L474.7,120.5 L474.1,120.5 L473.5,121.4 L472.9,122.5 L472.3,123.0 L471.6,122.4 L471.0,122.6 L470.4,122.8 L469.8,122.7 L469.2,122.1 L468.5,121.6 L467.9,122.4 L467.3,123.2 L466.7,123.7 L466.1,122.1 L465.4,121.7 L464.8,121.1 L464.2,121.3 L463.6,122.0 L463.0,122.4 L462.3,122.6 L461.7,122.6 L461.1,122.6 L460.5,122.6 L459.9,122.6 L459.2,122.6 L458.6,122.7 L458.0,122.0 L457.4,120.6 L456.8,120.4 L456.1,120.4 L455.5,120.5 L454.9,120.8 L454.3,122.5 L453.7,123.0 L453.0,122.5 L452.4,122.6 L451.8,122.7 L451.2,122.7 L450.6,122.8 L449.9,121.6 L449.3,122.4 L448.7,123.0 L448.1,123.7 L447.5,122.8 L446.8,121.7 L446.2,121.1 L445.6,121.3 L445.0,122.0 L444.4,122.7 L443.7,122.6 L443.1,122.5 L442.5,122.4 L441.9,122.6 L441.3,122.8 L440.6,122.6 L440.0,122.9 L439.4,122.0 L438.8,120.6 L438.2,120.4 L437.5,120.4 L436.9,120.5 L436.3,120.8 L435.7,121.4 L435.1,122.8 L434.4,122.5 L433.8,122.4 L433.2,122.7 L432.6,122.8 L432.0,122.8 L431.3,121.6 L430.7,121.7 L430.1,123.0 L429.5,123.2 L428.9,122.8 L428.2,122.1 L427.6,121.3 L427.0,121.3 L426.4,121.3 L425.8,122.7 L425.1,122.4 L424.5,122.5 L423.9,122.4 L423.3,122.6 L422.7,122.8 L422.0,122.6 L421.4,122.9 L420.8,122.7 L420.2,121.0 L419.6,120.4 L418.9,120.4 L418.3,120.5 L417.7,120.5 L417.1,121.4 L416.5,122.8 L415.8,123.0 L415.2,122.4 L414.6,122.6 L414.0,122.8 L413.4,122.7 L412.7,122.1 L412.1,121.7 L411.5,122.4 L410.9,123.2 L410.3,123.7 L409.6,122.1 L409.0,121.3 L408.4,121.1 L407.8,121.3 L407.2,122.0 L406.5,122.4 L405.9,122.6 L405.3,122.6 L404.7,122.6 L404.1,122.6 L403.4,122.6 L402.8,122.6 L402.2,122.7Z" fill="#1c1e2e" fill-opacity="0.95"/>
<path d="M402.2,129.6 L402.8,129.8 L403.4,129.7 L404.1,129.7 L404.7,129.8 L405.3,129.7 L405.9,129.7 L406.5,129.9 L407.2,130.3 L407.8,131.0 L408.4,131.1 L409.0,130.9 L409.6,130.2 L410.3,128.7 L410.9,129.2 L411.5,130.0 L412.1,130.5 L412.7,130.2 L413.4,129.6 L414.0,129.5 L414.6,129.7 L415.2,129.9 L415.8,129.4 L416.5,129.5 L417.1,130.8 L417.7,131.6 L418.3,131.7 L418.9,131.8 L419.6,131.8 L420.2,131.2 L420.8,129.6 L421.4,129.5 L422.0,129.7 L422.7,129.6 L423.3,129.8 L423.9,130.0 L424.5,129.8 L425.1,129.9 L425.8,129.6 L426.4,131.0 L427.0,130.9 L427.6,130.9 L428.2,130.2 L428.9,129.5 L429.5,129.2 L430.1,129.4 L430.7,130.5 L431.3,130.7 L432.0,129.5 L432.6,129.5 L433.2,129.6 L433.8,129.9 L434.4,129.9 L435.1,129.5 L435.7,130.8 L436.3,131.4 L436.9,131.7 L437.5,131.8 L438.2,131.8 L438.8,131.6 L439.4,130.3 L440.0,129.5 L440.6,129.8 L441.3,129.6 L441.9,129.7 L442.5,130.0 L443.1,129.8 L443.7,129.7 L444.4,129.6 L445.0,130.3 L445.6,130.9 L446.2,131.1 L446.8,130.5 L447.5,129.5 L448.1,128.7 L448.7,129.4 L449.3,130.0 L449.9,130.7 L450.6,129.5 L451.2,129.6 L451.8,129.6 L452.4,129.7 L453.0,129.9 L453.7,129.4 L454.3,129.8 L454.9,131.4 L455.5,131.6 L456.1,131.8 L456.8,131.8 L457.4,131.6 L458.0,130.3 L458.6,129.6 L459.2,129.8 L459.9,129.7 L460.5,129.7 L461.1,129.8 L461.7,129.7 L462.3,129.7 L463.0,129.9 L463.6,130.3 L464.2,131.0 L464.8,131.1 L465.4,130.5 L466.1,130.2 L466.7,128.7 L467.3,129.2 L467.9,130.0 L468.5,130.7 L469.2,130.2 L469.8,129.6 L470.4,129.5 L471.0,129.7 L471.6,129.9 L472.3,129.4 L472.9,129.8 L473.5,130.8 L474.1,131.6 L474.7,131.7 L475.4,131.8 L476.0,131.6 L476.0,133.5 L475.4,133.3 L474.7,133.4 L474.1,133.4 L473.5,134.3 L472.9,135.4 L472.3,135.9 L471.6,135.3 L471.0,135.5 L470.4,135.7 L469.8,135.6 L469.2,135.0 L468.5,134.5 L467.9,135.3 L467.3,136.1 L466.7,136.6 L466.1,135.0 L465.4,134.6 L464.8,134.0 L464.2,134.2 L463.6,134.9 L463.0,135.3 L462.3,135.5 L461.7,135.5 L461.1,135.5 L460.5,135.5 L459.9,135.5 L459.2,135.5 L458.6,135.6 L458.0,134.9 L457.4,133.5 L456.8,133.3 L456.1,133.3 L455.5,133.4 L454.9,133.7 L454.3,135.4 L453.7,135.9 L453.0,135.4 L452.4,135.5 L451.8,135.6 L451.2,135.6 L450.6,135.7 L449.9,134.5 L449.3,135.3 L448.7,135.9 L448.1,136.6 L447.5,135.7 L446.8,134.6 L446.2,134.0 L445.6,134.2 L445.0,134.9 L444.4,135.6 L443.7,135.5 L443.1,135.4 L442.5,135.3 L441.9,135.5 L441.3,135.7 L440.6,135.5 L440.0,135.8 L439.4,134.9 L438.8,133.5 L438.2,133.3 L437.5,133.3 L436.9,133.4 L436.3,133.7 L435.7,134.3 L435.1,135.7 L434.4,135.4 L433.8,135.3 L433.2,135.6 L432.6,135.7 L432.0,135.7 L431.3,134.5 L430.7,134.6 L430.1,135.9 L429.5,136.1 L428.9,135.7 L428.2,135.0 L427.6,134.2 L427.0,134.2 L426.4,134.2 L425.8,135.6 L425.1,135.3 L424.5,135.4 L423.9,135.3 L423.3,135.5 L422.7,135.7 L422.0,135.5 L421.4,135.8 L420.8,135.6 L420.2,133.9 L419.6,133.3 L418.9,133.3 L418.3,133.4 L417.7,133.4 L417.1,134.3 L416.5,135.7 L415.8,135.9 L415.2,135.3 L414.6,135.5 L414.0,135.7 L413.4,135.6 L412.7,135.0 L412.1,134.6 L411.5,135.3 L410.9,136.1 L410.3,136.6 L409.6,135.0 L409.0,134.2 L408.4,134.0 L407.8,134.2 L407.2,134.9 L406.5,135.3 L405.9,135.5 L405.3,135.5 L404.7,135.5 L404.1,135.5 L403.4,135.5 L402.8,135.5 L402.2,135.6Z" fill="#1c1e2e" fill-opacity="0.95"/>
<rect x="476.76" y="101.90" width="75.16" height="36.80" fill="#95a7ff"/>
<path d="M486.15,113.20V138.70M495.55,113.20V138.70M504.94,113.20V138.70M514.34,113.20V138.70M523.74,113.20V138.70M533.13,113.20V138.70M542.52,113.20V138.70" fill="none" stroke="#000" stroke-width="0.8" stroke-opacity="0.12"/>
<line x1="476.76" y1="113.20" x2="551.92" y2="113.20" stroke="#000" stroke-width="0.8" stroke-opacity="0.16"/>
<line x1="476.76" y1="101.90" x2="476.76" y2="138.70" stroke="#000" stroke-width="0.9" stroke-opacity="0.42"/>
<path d="M477.4,116.7 L478.0,116.9 L478.6,116.8 L479.2,116.8 L479.8,116.9 L480.5,116.8 L481.1,116.8 L481.7,117.0 L482.3,117.4 L482.9,118.1 L483.6,118.2 L484.2,118.0 L484.8,117.3 L485.4,115.8 L486.0,116.3 L486.7,117.1 L487.3,117.6 L487.9,117.3 L488.5,116.7 L489.1,116.6 L489.8,116.8 L490.4,117.0 L491.0,116.5 L491.6,116.6 L492.2,117.9 L492.9,118.7 L493.5,118.8 L494.1,118.9 L494.7,118.9 L495.3,118.3 L496.0,116.7 L496.6,116.6 L497.2,116.8 L497.8,116.7 L498.4,116.9 L499.1,117.1 L499.7,116.9 L500.3,117.0 L500.9,116.7 L501.5,118.1 L502.2,118.0 L502.8,118.0 L503.4,117.3 L504.0,116.6 L504.6,116.3 L505.3,116.5 L505.9,117.6 L506.5,117.8 L507.1,116.6 L507.7,116.6 L508.4,116.7 L509.0,117.0 L509.6,117.0 L510.2,116.6 L510.8,117.9 L511.5,118.5 L512.1,118.8 L512.7,118.9 L513.3,118.9 L513.9,118.7 L514.6,117.4 L515.2,116.6 L515.8,116.9 L516.4,116.7 L517.0,116.8 L517.7,117.1 L518.3,116.9 L518.9,116.8 L519.5,116.7 L520.1,117.4 L520.8,118.0 L521.4,118.2 L522.0,117.6 L522.6,116.6 L523.2,115.8 L523.9,116.5 L524.5,117.1 L525.1,117.8 L525.7,116.6 L526.3,116.7 L527.0,116.7 L527.6,116.8 L528.2,117.0 L528.8,116.5 L529.4,116.9 L530.1,118.5 L530.7,118.7 L531.3,118.9 L531.9,118.9 L532.5,118.7 L533.2,117.4 L533.8,116.7 L534.4,116.9 L535.0,116.8 L535.6,116.8 L536.3,116.9 L536.9,116.8 L537.5,116.8 L538.1,117.0 L538.7,117.4 L539.4,118.1 L540.0,118.2 L540.6,117.6 L541.2,117.3 L541.8,115.8 L542.5,116.3 L543.1,117.1 L543.7,117.8 L544.3,117.3 L544.9,116.7 L545.6,116.6 L546.2,116.8 L546.8,117.0 L547.4,116.5 L548.0,116.9 L548.7,117.9 L549.3,118.7 L549.9,118.8 L550.5,118.9 L551.1,118.7 L551.1,120.6 L550.5,120.4 L549.9,120.5 L549.3,120.5 L548.7,121.4 L548.0,122.5 L547.4,123.0 L546.8,122.4 L546.2,122.6 L545.6,122.8 L544.9,122.7 L544.3,122.1 L543.7,121.6 L543.1,122.4 L542.5,123.2 L541.8,123.7 L541.2,122.1 L540.6,121.7 L540.0,121.1 L539.4,121.3 L538.7,122.0 L538.1,122.4 L537.5,122.6 L536.9,122.6 L536.3,122.6 L535.6,122.6 L535.0,122.6 L534.4,122.6 L533.8,122.7 L533.2,122.0 L532.5,120.6 L531.9,120.4 L531.3,120.4 L530.7,120.5 L530.1,120.8 L529.4,122.5 L528.8,123.0 L528.2,122.5 L527.6,122.6 L527.0,122.7 L526.3,122.7 L525.7,122.8 L525.1,121.6 L524.5,122.4 L523.9,123.0 L523.2,123.7 L522.6,122.8 L522.0,121.7 L521.4,121.1 L520.8,121.3 L520.1,122.0 L519.5,122.7 L518.9,122.6 L518.3,122.5 L517.7,122.4 L517.0,122.6 L516.4,122.8 L515.8,122.6 L515.2,122.9 L514.6,122.0 L513.9,120.6 L513.3,120.4 L512.7,120.4 L512.1,120.5 L511.5,120.8 L510.8,121.4 L510.2,122.8 L509.6,122.5 L509.0,122.4 L508.4,122.7 L507.7,122.8 L507.1,122.8 L506.5,121.6 L505.9,121.7 L505.3,123.0 L504.6,123.2 L504.0,122.8 L503.4,122.1 L502.8,121.3 L502.2,121.3 L501.5,121.3 L500.9,122.7 L500.3,122.4 L499.7,122.5 L499.1,122.4 L498.4,122.6 L497.8,122.8 L497.2,122.6 L496.6,122.9 L496.0,122.7 L495.3,121.0 L494.7,120.4 L494.1,120.4 L493.5,120.5 L492.9,120.5 L492.2,121.4 L491.6,122.8 L491.0,123.0 L490.4,122.4 L489.8,122.6 L489.1,122.8 L488.5,122.7 L487.9,122.1 L487.3,121.7 L486.7,122.4 L486.0,123.2 L485.4,123.7 L484.8,122.1 L484.2,121.3 L483.6,121.1 L482.9,121.3 L482.3,122.0 L481.7,122.4 L481.1,122.6 L480.5,122.6 L479.8,122.6 L479.2,122.6 L478.6,122.6 L478.0,122.6 L477.4,122.7Z" fill="#1c1e2e" fill-opacity="0.95"/>
<path d="M477.4,129.6 L478.0,129.8 L478.6,129.7 L479.2,129.7 L479.8,129.8 L480.5,129.7 L481.1,129.7 L481.7,129.9 L482.3,130.3 L482.9,131.0 L483.6,131.1 L484.2,130.9 L484.8,130.2 L485.4,128.7 L486.0,129.2 L486.7,130.0 L487.3,130.5 L487.9,130.2 L488.5,129.6 L489.1,129.5 L489.8,129.7 L490.4,129.9 L491.0,129.4 L491.6,129.5 L492.2,130.8 L492.9,131.6 L493.5,131.7 L494.1,131.8 L494.7,131.8 L495.3,131.2 L496.0,129.6 L496.6,129.5 L497.2,129.7 L497.8,129.6 L498.4,129.8 L499.1,130.0 L499.7,129.8 L500.3,129.9 L500.9,129.6 L501.5,131.0 L502.2,130.9 L502.8,130.9 L503.4,130.2 L504.0,129.5 L504.6,129.2 L505.3,129.4 L505.9,130.5 L506.5,130.7 L507.1,129.5 L507.7,129.5 L508.4,129.6 L509.0,129.9 L509.6,129.9 L510.2,129.5 L510.8,130.8 L511.5,131.4 L512.1,131.7 L512.7,131.8 L513.3,131.8 L513.9,131.6 L514.6,130.3 L515.2,129.5 L515.8,129.8 L516.4,129.6 L517.0,129.7 L517.7,130.0 L518.3,129.8 L518.9,129.7 L519.5,129.6 L520.1,130.3 L520.8,130.9 L521.4,131.1 L522.0,130.5 L522.6,129.5 L523.2,128.7 L523.9,129.4 L524.5,130.0 L525.1,130.7 L525.7,129.5 L526.3,129.6 L527.0,129.6 L527.6,129.7 L528.2,129.9 L528.8,129.4 L529.4,129.8 L530.1,131.4 L530.7,131.6 L531.3,131.8 L531.9,131.8 L532.5,131.6 L533.2,130.3 L533.8,129.6 L534.4,129.8 L535.0,129.7 L535.6,129.7 L536.3,129.8 L536.9,129.7 L537.5,129.7 L538.1,129.9 L538.7,130.3 L539.4,131.0 L540.0,131.1 L540.6,130.5 L541.2,130.2 L541.8,128.7 L542.5,129.2 L543.1,130.0 L543.7,130.7 L544.3,130.2 L544.9,129.6 L545.6,129.5 L546.2,129.7 L546.8,129.9 L547.4,129.4 L548.0,129.8 L548.7,130.8 L549.3,131.6 L549.9,131.7 L550.5,131.8 L551.1,131.6 L551.1,133.5 L550.5,133.3 L549.9,133.4 L549.3,133.4 L548.7,134.3 L548.0,135.4 L547.4,135.9 L546.8,135.3 L546.2,135.5 L545.6,135.7 L544.9,135.6 L544.3,135.0 L543.7,134.5 L543.1,135.3 L542.5,136.1 L541.8,136.6 L541.2,135.0 L540.6,134.6 L540.0,134.0 L539.4,134.2 L538.7,134.9 L538.1,135.3 L537.5,135.5 L536.9,135.5 L536.3,135.5 L535.6,135.5 L535.0,135.5 L534.4,135.5 L533.8,135.6 L533.2,134.9 L532.5,133.5 L531.9,133.3 L531.3,133.3 L530.7,133.4 L530.1,133.7 L529.4,135.4 L528.8,135.9 L528.2,135.4 L527.6,135.5 L527.0,135.6 L526.3,135.6 L525.7,135.7 L525.1,134.5 L524.5,135.3 L523.9,135.9 L523.2,136.6 L522.6,135.7 L522.0,134.6 L521.4,134.0 L520.8,134.2 L520.1,134.9 L519.5,135.6 L518.9,135.5 L518.3,135.4 L517.7,135.3 L517.0,135.5 L516.4,135.7 L515.8,135.5 L515.2,135.8 L514.6,134.9 L513.9,133.5 L513.3,133.3 L512.7,133.3 L512.1,133.4 L511.5,133.7 L510.8,134.3 L510.2,135.7 L509.6,135.4 L509.0,135.3 L508.4,135.6 L507.7,135.7 L507.1,135.7 L506.5,134.5 L505.9,134.6 L505.3,135.9 L504.6,136.1 L504.0,135.7 L503.4,135.0 L502.8,134.2 L502.2,134.2 L501.5,134.2 L500.9,135.6 L500.3,135.3 L499.7,135.4 L499.1,135.3 L498.4,135.5 L497.8,135.7 L497.2,135.5 L496.6,135.8 L496.0,135.6 L495.3,133.9 L494.7,133.3 L494.1,133.3 L493.5,133.4 L492.9,133.4 L492.2,134.3 L491.6,135.7 L491.0,135.9 L490.4,135.3 L489.8,135.5 L489.1,135.7 L488.5,135.6 L487.9,135.0 L487.3,134.6 L486.7,135.3 L486.0,136.1 L485.4,136.6 L484.8,135.0 L484.2,134.2 L483.6,134.0 L482.9,134.2 L482.3,134.9 L481.7,135.3 L481.1,135.5 L480.5,135.5 L479.8,135.5 L479.2,135.5 L478.6,135.5 L478.0,135.5 L477.4,135.6Z" fill="#1c1e2e" fill-opacity="0.95"/>
<rect x="551.92" y="101.90" width="75.16" height="36.80" fill="#95a7ff"/>
<path d="M561.31,113.20V138.70M570.71,113.20V138.70M580.10,113.20V138.70M589.50,113.20V138.70M598.89,113.20V138.70M608.29,113.20V138.70M617.68,113.20V138.70" fill="none" stroke="#000" stroke-width="0.8" stroke-opacity="0.12"/>
<line x1="551.92" y1="113.20" x2="627.08" y2="113.20" stroke="#000" stroke-width="0.8" stroke-opacity="0.16"/>
<line x1="551.92" y1="101.90" x2="551.92" y2="138.70" stroke="#000" stroke-width="0.9" stroke-opacity="0.42"/>
<path d="M552.5,116.7 L553.1,116.9 L553.8,116.8 L554.4,116.8 L555.0,116.9 L555.6,116.8 L556.2,116.8 L556.9,117.0 L557.5,117.4 L558.1,118.1 L558.7,118.2 L559.3,118.0 L560.0,117.3 L560.6,115.8 L561.2,116.3 L561.8,117.1 L562.4,117.6 L563.1,117.3 L563.7,116.7 L564.3,116.6 L564.9,116.8 L565.5,117.0 L566.2,116.5 L566.8,116.6 L567.4,117.9 L568.0,118.7 L568.6,118.8 L569.3,118.9 L569.9,118.9 L570.5,118.3 L571.1,116.7 L571.7,116.6 L572.4,116.8 L573.0,116.7 L573.6,116.9 L574.2,117.1 L574.8,116.9 L575.5,117.0 L576.1,116.7 L576.7,118.1 L577.3,118.0 L577.9,118.0 L578.6,117.3 L579.2,116.6 L579.8,116.3 L580.4,116.5 L581.0,117.6 L581.7,117.8 L582.3,116.6 L582.9,116.6 L583.5,116.7 L584.1,117.0 L584.8,117.0 L585.4,116.6 L586.0,117.9 L586.6,118.5 L587.2,118.8 L587.9,118.9 L588.5,118.9 L589.1,118.7 L589.7,117.4 L590.3,116.6 L591.0,116.9 L591.6,116.7 L592.2,116.8 L592.8,117.1 L593.4,116.9 L594.1,116.8 L594.7,116.7 L595.3,117.4 L595.9,118.0 L596.5,118.2 L597.2,117.6 L597.8,116.6 L598.4,115.8 L599.0,116.5 L599.6,117.1 L600.3,117.8 L600.9,116.6 L601.5,116.7 L602.1,116.7 L602.7,116.8 L603.4,117.0 L604.0,116.5 L604.6,116.9 L605.2,118.5 L605.8,118.7 L606.5,118.9 L607.1,118.9 L607.7,118.7 L608.3,117.4 L608.9,116.7 L609.6,116.9 L610.2,116.8 L610.8,116.8 L611.4,116.9 L612.0,116.8 L612.7,116.8 L613.3,117.0 L613.9,117.4 L614.5,118.1 L615.1,118.2 L615.8,117.6 L616.4,117.3 L617.0,115.8 L617.6,116.3 L618.2,117.1 L618.9,117.8 L619.5,117.3 L620.1,116.7 L620.7,116.6 L621.3,116.8 L622.0,117.0 L622.6,116.5 L623.2,116.9 L623.8,117.9 L624.4,118.7 L625.1,118.8 L625.7,118.9 L626.3,118.7 L626.3,120.6 L625.7,120.4 L625.1,120.5 L624.4,120.5 L623.8,121.4 L623.2,122.5 L622.6,123.0 L622.0,122.4 L621.3,122.6 L620.7,122.8 L620.1,122.7 L619.5,122.1 L618.9,121.6 L618.2,122.4 L617.6,123.2 L617.0,123.7 L616.4,122.1 L615.8,121.7 L615.1,121.1 L614.5,121.3 L613.9,122.0 L613.3,122.4 L612.7,122.6 L612.0,122.6 L611.4,122.6 L610.8,122.6 L610.2,122.6 L609.6,122.6 L608.9,122.7 L608.3,122.0 L607.7,120.6 L607.1,120.4 L606.5,120.4 L605.8,120.5 L605.2,120.8 L604.6,122.5 L604.0,123.0 L603.4,122.5 L602.7,122.6 L602.1,122.7 L601.5,122.7 L600.9,122.8 L600.3,121.6 L599.6,122.4 L599.0,123.0 L598.4,123.7 L597.8,122.8 L597.2,121.7 L596.5,121.1 L595.9,121.3 L595.3,122.0 L594.7,122.7 L594.1,122.6 L593.4,122.5 L592.8,122.4 L592.2,122.6 L591.6,122.8 L591.0,122.6 L590.3,122.9 L589.7,122.0 L589.1,120.6 L588.5,120.4 L587.9,120.4 L587.2,120.5 L586.6,120.8 L586.0,121.4 L585.4,122.8 L584.8,122.5 L584.1,122.4 L583.5,122.7 L582.9,122.8 L582.3,122.8 L581.7,121.6 L581.0,121.7 L580.4,123.0 L579.8,123.2 L579.2,122.8 L578.6,122.1 L577.9,121.3 L577.3,121.3 L576.7,121.3 L576.1,122.7 L575.5,122.4 L574.8,122.5 L574.2,122.4 L573.6,122.6 L573.0,122.8 L572.4,122.6 L571.7,122.9 L571.1,122.7 L570.5,121.0 L569.9,120.4 L569.3,120.4 L568.6,120.5 L568.0,120.5 L567.4,121.4 L566.8,122.8 L566.2,123.0 L565.5,122.4 L564.9,122.6 L564.3,122.8 L563.7,122.7 L563.1,122.1 L562.4,121.7 L561.8,122.4 L561.2,123.2 L560.6,123.7 L560.0,122.1 L559.3,121.3 L558.7,121.1 L558.1,121.3 L557.5,122.0 L556.9,122.4 L556.2,122.6 L555.6,122.6 L555.0,122.6 L554.4,122.6 L553.8,122.6 L553.1,122.6 L552.5,122.7Z" fill="#1c1e2e" fill-opacity="0.95"/>
<path d="M552.5,129.6 L553.1,129.8 L553.8,129.7 L554.4,129.7 L555.0,129.8 L555.6,129.7 L556.2,129.7 L556.9,129.9 L557.5,130.3 L558.1,131.0 L558.7,131.1 L559.3,130.9 L560.0,130.2 L560.6,128.7 L561.2,129.2 L561.8,130.0 L562.4,130.5 L563.1,130.2 L563.7,129.6 L564.3,129.5 L564.9,129.7 L565.5,129.9 L566.2,129.4 L566.8,129.5 L567.4,130.8 L568.0,131.6 L568.6,131.7 L569.3,131.8 L569.9,131.8 L570.5,131.2 L571.1,129.6 L571.7,129.5 L572.4,129.7 L573.0,129.6 L573.6,129.8 L574.2,130.0 L574.8,129.8 L575.5,129.9 L576.1,129.6 L576.7,131.0 L577.3,130.9 L577.9,130.9 L578.6,130.2 L579.2,129.5 L579.8,129.2 L580.4,129.4 L581.0,130.5 L581.7,130.7 L582.3,129.5 L582.9,129.5 L583.5,129.6 L584.1,129.9 L584.8,129.9 L585.4,129.5 L586.0,130.8 L586.6,131.4 L587.2,131.7 L587.9,131.8 L588.5,131.8 L589.1,131.6 L589.7,130.3 L590.3,129.5 L591.0,129.8 L591.6,129.6 L592.2,129.7 L592.8,130.0 L593.4,129.8 L594.1,129.7 L594.7,129.6 L595.3,130.3 L595.9,130.9 L596.5,131.1 L597.2,130.5 L597.8,129.5 L598.4,128.7 L599.0,129.4 L599.6,130.0 L600.3,130.7 L600.9,129.5 L601.5,129.6 L602.1,129.6 L602.7,129.7 L603.4,129.9 L604.0,129.4 L604.6,129.8 L605.2,131.4 L605.8,131.6 L606.5,131.8 L607.1,131.8 L607.7,131.6 L608.3,130.3 L608.9,129.6 L609.6,129.8 L610.2,129.7 L610.8,129.7 L611.4,129.8 L612.0,129.7 L612.7,129.7 L613.3,129.9 L613.9,130.3 L614.5,131.0 L615.1,131.1 L615.8,130.5 L616.4,130.2 L617.0,128.7 L617.6,129.2 L618.2,130.0 L618.9,130.7 L619.5,130.2 L620.1,129.6 L620.7,129.5 L621.3,129.7 L622.0,129.9 L622.6,129.4 L623.2,129.8 L623.8,130.8 L624.4,131.6 L625.1,131.7 L625.7,131.8 L626.3,131.6 L626.3,133.5 L625.7,133.3 L625.1,133.4 L624.4,133.4 L623.8,134.3 L623.2,135.4 L622.6,135.9 L622.0,135.3 L621.3,135.5 L620.7,135.7 L620.1,135.6 L619.5,135.0 L618.9,134.5 L618.2,135.3 L617.6,136.1 L617.0,136.6 L616.4,135.0 L615.8,134.6 L615.1,134.0 L614.5,134.2 L613.9,134.9 L613.3,135.3 L612.7,135.5 L612.0,135.5 L611.4,135.5 L610.8,135.5 L610.2,135.5 L609.6,135.5 L608.9,135.6 L608.3,134.9 L607.7,133.5 L607.1,133.3 L606.5,133.3 L605.8,133.4 L605.2,133.7 L604.6,135.4 L604.0,135.9 L603.4,135.4 L602.7,135.5 L602.1,135.6 L601.5,135.6 L600.9,135.7 L600.3,134.5 L599.6,135.3 L599.0,135.9 L598.4,136.6 L597.8,135.7 L597.2,134.6 L596.5,134.0 L595.9,134.2 L595.3,134.9 L594.7,135.6 L594.1,135.5 L593.4,135.4 L592.8,135.3 L592.2,135.5 L591.6,135.7 L591.0,135.5 L590.3,135.8 L589.7,134.9 L589.1,133.5 L588.5,133.3 L587.9,133.3 L587.2,133.4 L586.6,133.7 L586.0,134.3 L585.4,135.7 L584.8,135.4 L584.1,135.3 L583.5,135.6 L582.9,135.7 L582.3,135.7 L581.7,134.5 L581.0,134.6 L580.4,135.9 L579.8,136.1 L579.2,135.7 L578.6,135.0 L577.9,134.2 L577.3,134.2 L576.7,134.2 L576.1,135.6 L575.5,135.3 L574.8,135.4 L574.2,135.3 L573.6,135.5 L573.0,135.7 L572.4,135.5 L571.7,135.8 L571.1,135.6 L570.5,133.9 L569.9,133.3 L569.3,133.3 L568.6,133.4 L568.0,133.4 L567.4,134.3 L566.8,135.7 L566.2,135.9 L565.5,135.3 L564.9,135.5 L564.3,135.7 L563.7,135.6 L563.1,135.0 L562.4,134.6 L561.8,135.3 L561.2,136.1 L560.6,136.6 L560.0,135.0 L559.3,134.2 L558.7,134.0 L558.1,134.2 L557.5,134.9 L556.9,135.3 L556.2,135.5 L555.6,135.5 L555.0,135.5 L554.4,135.5 L553.8,135.5 L553.1,135.5 L552.5,135.6Z" fill="#1c1e2e" fill-opacity="0.95"/>
<rect x="627.08" y="101.90" width="75.16" height="36.80" fill="#95a7ff"/>
<path d="M636.47,113.20V138.70M645.87,113.20V138.70M655.26,113.20V138.70M664.66,113.20V138.70M674.05,113.20V138.70M683.45,113.20V138.70M692.84,113.20V138.70" fill="none" stroke="#000" stroke-width="0.8" stroke-opacity="0.12"/>
<line x1="627.08" y1="113.20" x2="702.24" y2="113.20" stroke="#000" stroke-width="0.8" stroke-opacity="0.16"/>
<line x1="627.08" y1="101.90" x2="627.08" y2="138.70" stroke="#000" stroke-width="0.9" stroke-opacity="0.42"/>
<line x1="627.58" y1="120.20" x2="702.24" y2="120.20" stroke="#23284a" stroke-width="0.6" stroke-opacity="0.8"/>
<line x1="627.58" y1="132.20" x2="702.24" y2="132.20" stroke="#23284a" stroke-width="0.6" stroke-opacity="0.8"/>
<line x1="627.58" y1="126.20" x2="702.24" y2="126.20" stroke="#fff" stroke-width="0.5" stroke-opacity="0.12"/>
<rect x="702.24" y="101.90" width="75.16" height="36.80" fill="#95a7ff"/>
<path d="M711.63,113.20V138.70M721.03,113.20V138.70M730.42,113.20V138.70M739.82,113.20V138.70M749.21,113.20V138.70M758.61,113.20V138.70M768.00,113.20V138.70" fill="none" stroke="#000" stroke-width="0.8" stroke-opacity="0.12"/>
<line x1="702.24" y1="113.20" x2="777.40" y2="113.20" stroke="#000" stroke-width="0.8" stroke-opacity="0.16"/>
<line x1="702.24" y1="101.90" x2="702.24" y2="138.70" stroke="#000" stroke-width="0.9" stroke-opacity="0.42"/>
<path d="M702.8,116.7 L703.5,116.9 L704.1,116.8 L704.7,116.8 L705.3,116.9 L705.9,116.8 L706.6,116.8 L707.2,117.0 L707.8,117.4 L708.4,118.1 L709.0,118.2 L709.7,118.0 L710.3,117.3 L710.9,115.8 L711.5,116.3 L712.1,117.1 L712.8,117.6 L713.4,117.3 L714.0,116.7 L714.6,116.6 L715.2,116.8 L715.9,117.0 L716.5,116.5 L717.1,116.6 L717.7,117.9 L718.3,118.7 L719.0,118.8 L719.6,118.9 L720.2,118.9 L720.8,118.3 L721.4,116.7 L722.1,116.6 L722.7,116.8 L723.3,116.7 L723.9,116.9 L724.5,117.1 L725.2,116.9 L725.8,117.0 L726.4,116.7 L727.0,118.1 L727.6,118.0 L728.3,118.0 L728.9,117.3 L729.5,116.6 L730.1,116.3 L730.7,116.5 L731.4,117.6 L732.0,117.8 L732.6,116.6 L733.2,116.6 L733.8,116.7 L734.5,117.0 L735.1,117.0 L735.7,116.6 L736.3,117.9 L736.9,118.5 L737.6,118.8 L738.2,118.9 L738.8,118.9 L739.4,118.7 L740.0,117.4 L740.7,116.6 L741.3,116.9 L741.9,116.7 L742.5,116.8 L743.1,117.1 L743.8,116.9 L744.4,116.8 L745.0,116.7 L745.6,117.4 L746.2,118.0 L746.9,118.2 L747.5,117.6 L748.1,116.6 L748.7,115.8 L749.3,116.5 L750.0,117.1 L750.6,117.8 L751.2,116.6 L751.8,116.7 L752.4,116.7 L753.1,116.8 L753.7,117.0 L754.3,116.5 L754.9,116.9 L755.5,118.5 L756.2,118.7 L756.8,118.9 L757.4,118.9 L758.0,118.7 L758.6,117.4 L759.3,116.7 L759.9,116.9 L760.5,116.8 L761.1,116.8 L761.7,116.9 L762.4,116.8 L763.0,116.8 L763.6,117.0 L764.2,117.4 L764.8,118.1 L765.5,118.2 L766.1,117.6 L766.7,117.3 L767.3,115.8 L767.9,116.3 L768.6,117.1 L769.2,117.8 L769.8,117.3 L770.4,116.7 L771.0,116.6 L771.7,116.8 L772.3,117.0 L772.9,116.5 L773.5,116.9 L774.1,117.9 L774.8,118.7 L775.4,118.8 L776.0,118.9 L776.6,118.7 L776.6,120.6 L776.0,120.4 L775.4,120.5 L774.8,120.5 L774.1,121.4 L773.5,122.5 L772.9,123.0 L772.3,122.4 L771.7,122.6 L771.0,122.8 L770.4,122.7 L769.8,122.1 L769.2,121.6 L768.6,122.4 L767.9,123.2 L767.3,123.7 L766.7,122.1 L766.1,121.7 L765.5,121.1 L764.8,121.3 L764.2,122.0 L763.6,122.4 L763.0,122.6 L762.4,122.6 L761.7,122.6 L761.1,122.6 L760.5,122.6 L759.9,122.6 L759.3,122.7 L758.6,122.0 L758.0,120.6 L757.4,120.4 L756.8,120.4 L756.2,120.5 L755.5,120.8 L754.9,122.5 L754.3,123.0 L753.7,122.5 L753.1,122.6 L752.4,122.7 L751.8,122.7 L751.2,122.8 L750.6,121.6 L750.0,122.4 L749.3,123.0 L748.7,123.7 L748.1,122.8 L747.5,121.7 L746.9,121.1 L746.2,121.3 L745.6,122.0 L745.0,122.7 L744.4,122.6 L743.8,122.5 L743.1,122.4 L742.5,122.6 L741.9,122.8 L741.3,122.6 L740.7,122.9 L740.0,122.0 L739.4,120.6 L738.8,120.4 L738.2,120.4 L737.6,120.5 L736.9,120.8 L736.3,121.4 L735.7,122.8 L735.1,122.5 L734.5,122.4 L733.8,122.7 L733.2,122.8 L732.6,122.8 L732.0,121.6 L731.4,121.7 L730.7,123.0 L730.1,123.2 L729.5,122.8 L728.9,122.1 L728.3,121.3 L727.6,121.3 L727.0,121.3 L726.4,122.7 L725.8,122.4 L725.2,122.5 L724.5,122.4 L723.9,122.6 L723.3,122.8 L722.7,122.6 L722.1,122.9 L721.4,122.7 L720.8,121.0 L720.2,120.4 L719.6,120.4 L719.0,120.5 L718.3,120.5 L717.7,121.4 L717.1,122.8 L716.5,123.0 L715.9,122.4 L715.2,122.6 L714.6,122.8 L714.0,122.7 L713.4,122.1 L712.8,121.7 L712.1,122.4 L711.5,123.2 L710.9,123.7 L710.3,122.1 L709.7,121.3 L709.0,121.1 L708.4,121.3 L707.8,122.0 L707.2,122.4 L706.6,122.6 L705.9,122.6 L705.3,122.6 L704.7,122.6 L704.1,122.6 L703.5,122.6 L702.8,122.7Z" fill="#1c1e2e" fill-opacity="0.95"/>
<path d="M702.8,129.6 L703.5,129.8 L704.1,129.7 L704.7,129.7 L705.3,129.8 L705.9,129.7 L706.6,129.7 L707.2,129.9 L707.8,130.3 L708.4,131.0 L709.0,131.1 L709.7,130.9 L710.3,130.2 L710.9,128.7 L711.5,129.2 L712.1,130.0 L712.8,130.5 L713.4,130.2 L714.0,129.6 L714.6,129.5 L715.2,129.7 L715.9,129.9 L716.5,129.4 L717.1,129.5 L717.7,130.8 L718.3,131.6 L719.0,131.7 L719.6,131.8 L720.2,131.8 L720.8,131.2 L721.4,129.6 L722.1,129.5 L722.7,129.7 L723.3,129.6 L723.9,129.8 L724.5,130.0 L725.2,129.8 L725.8,129.9 L726.4,129.6 L727.0,131.0 L727.6,130.9 L728.3,130.9 L728.9,130.2 L729.5,129.5 L730.1,129.2 L730.7,129.4 L731.4,130.5 L732.0,130.7 L732.6,129.5 L733.2,129.5 L733.8,129.6 L734.5,129.9 L735.1,129.9 L735.7,129.5 L736.3,130.8 L736.9,131.4 L737.6,131.7 L738.2,131.8 L738.8,131.8 L739.4,131.6 L740.0,130.3 L740.7,129.5 L741.3,129.8 L741.9,129.6 L742.5,129.7 L743.1,130.0 L743.8,129.8 L744.4,129.7 L745.0,129.6 L745.6,130.3 L746.2,130.9 L746.9,131.1 L747.5,130.5 L748.1,129.5 L748.7,128.7 L749.3,129.4 L750.0,130.0 L750.6,130.7 L751.2,129.5 L751.8,129.6 L752.4,129.6 L753.1,129.7 L753.7,129.9 L754.3,129.4 L754.9,129.8 L755.5,131.4 L756.2,131.6 L756.8,131.8 L757.4,131.8 L758.0,131.6 L758.6,130.3 L759.3,129.6 L759.9,129.8 L760.5,129.7 L761.1,129.7 L761.7,129.8 L762.4,129.7 L763.0,129.7 L763.6,129.9 L764.2,130.3 L764.8,131.0 L765.5,131.1 L766.1,130.5 L766.7,130.2 L767.3,128.7 L767.9,129.2 L768.6,130.0 L769.2,130.7 L769.8,130.2 L770.4,129.6 L771.0,129.5 L771.7,129.7 L772.3,129.9 L772.9,129.4 L773.5,129.8 L774.1,130.8 L774.8,131.6 L775.4,131.7 L776.0,131.8 L776.6,131.6 L776.6,133.5 L776.0,133.3 L775.4,133.4 L774.8,133.4 L774.1,134.3 L773.5,135.4 L772.9,135.9 L772.3,135.3 L771.7,135.5 L771.0,135.7 L770.4,135.6 L769.8,135.0 L769.2,134.5 L768.6,135.3 L767.9,136.1 L767.3,136.6 L766.7,135.0 L766.1,134.6 L765.5,134.0 L764.8,134.2 L764.2,134.9 L763.6,135.3 L763.0,135.5 L762.4,135.5 L761.7,135.5 L761.1,135.5 L760.5,135.5 L759.9,135.5 L759.3,135.6 L758.6,134.9 L758.0,133.5 L757.4,133.3 L756.8,133.3 L756.2,133.4 L755.5,133.7 L754.9,135.4 L754.3,135.9 L753.7,135.4 L753.1,135.5 L752.4,135.6 L751.8,135.6 L751.2,135.7 L750.6,134.5 L750.0,135.3 L749.3,135.9 L748.7,136.6 L748.1,135.7 L747.5,134.6 L746.9,134.0 L746.2,134.2 L745.6,134.9 L745.0,135.6 L744.4,135.5 L743.8,135.4 L743.1,135.3 L742.5,135.5 L741.9,135.7 L741.3,135.5 L740.7,135.8 L740.0,134.9 L739.4,133.5 L738.8,133.3 L738.2,133.3 L737.6,133.4 L736.9,133.7 L736.3,134.3 L735.7,135.7 L735.1,135.4 L734.5,135.3 L733.8,135.6 L733.2,135.7 L732.6,135.7 L732.0,134.5 L731.4,134.6 L730.7,135.9 L730.1,136.1 L729.5,135.7 L728.9,135.0 L728.3,134.2 L727.6,134.2 L727.0,134.2 L726.4,135.6 L725.8,135.3 L725.2,135.4 L724.5,135.3 L723.9,135.5 L723.3,135.7 L722.7,135.5 L722.1,135.8 L721.4,135.6 L720.8,133.9 L720.2,133.3 L719.6,133.3 L719.0,133.4 L718.3,133.4 L717.7,134.3 L717.1,135.7 L716.5,135.9 L715.9,135.3 L715.2,135.5 L714.6,135.7 L714.0,135.6 L713.4,135.0 L712.8,134.6 L712.1,135.3 L711.5,136.1 L710.9,136.6 L710.3,135.0 L709.7,134.2 L709.0,134.0 L708.4,134.2 L707.8,134.9 L707.2,135.3 L706.6,135.5 L705.9,135.5 L705.3,135.5 L704.7,135.5 L704.1,135.5 L703.5,135.5 L702.8,135.6Z" fill="#1c1e2e" fill-opacity="0.95"/>
<rect x="796.19" y="101.90" width="61.01" height="36.80" fill="#95a7ff"/>
<path d="M805.58,113.20V138.70M814.98,113.20V138.70M824.37,113.20V138.70M833.77,113.20V138.70M843.16,113.20V138.70M852.56,113.20V138.70" fill="none" stroke="#000" stroke-width="0.8" stroke-opacity="0.12"/>
<line x1="796.19" y1="113.20" x2="857.20" y2="113.20" stroke="#000" stroke-width="0.8" stroke-opacity="0.16"/>
<line x1="796.19" y1="101.90" x2="796.19" y2="138.70" stroke="#000" stroke-width="0.9" stroke-opacity="0.42"/>
<path d="M796.8,116.7 L797.4,116.9 L798.0,116.8 L798.6,116.8 L799.3,116.9 L799.9,116.8 L800.5,116.8 L801.1,117.0 L801.8,117.4 L802.4,118.1 L803.0,118.2 L803.6,118.0 L804.2,117.3 L804.9,115.8 L805.5,116.3 L806.1,117.1 L806.7,117.6 L807.3,117.3 L808.0,116.7 L808.6,116.6 L809.2,116.8 L809.8,117.0 L810.4,116.5 L811.1,116.6 L811.7,117.9 L812.3,118.7 L812.9,118.8 L813.5,118.9 L814.2,118.9 L814.8,118.3 L815.4,116.7 L816.0,116.6 L816.6,116.8 L817.3,116.7 L817.9,116.9 L818.5,117.1 L819.1,116.9 L819.7,117.0 L820.4,116.7 L821.0,118.1 L821.6,118.0 L822.2,118.0 L822.8,117.3 L823.5,116.6 L824.1,116.3 L824.7,116.5 L825.3,117.6 L825.9,117.8 L826.6,116.6 L827.2,116.6 L827.8,116.7 L828.4,117.0 L829.0,117.0 L829.7,116.6 L830.3,117.9 L830.9,118.5 L831.5,118.8 L832.1,118.9 L832.8,118.9 L833.4,118.7 L834.0,117.4 L834.6,116.6 L835.2,116.9 L835.9,116.7 L836.5,116.8 L837.1,117.1 L837.7,116.9 L838.3,116.8 L839.0,116.7 L839.6,117.4 L840.2,118.0 L840.8,118.2 L841.4,117.6 L842.1,116.6 L842.7,115.8 L843.3,116.5 L843.9,117.1 L844.5,117.8 L845.2,116.6 L845.8,116.7 L846.4,116.7 L847.0,116.8 L847.6,117.0 L848.3,116.5 L848.9,116.9 L849.5,118.5 L850.1,118.7 L850.7,118.9 L851.4,118.9 L852.0,118.7 L852.6,117.4 L853.2,116.7 L853.8,116.9 L854.5,116.8 L855.1,116.8 L855.7,116.9 L856.3,116.8 L856.9,116.8 L856.9,122.6 L856.3,122.6 L855.7,122.6 L855.1,122.6 L854.5,122.6 L853.8,122.6 L853.2,122.7 L852.6,122.0 L852.0,120.6 L851.4,120.4 L850.7,120.4 L850.1,120.5 L849.5,120.8 L848.9,122.5 L848.3,123.0 L847.6,122.5 L847.0,122.6 L846.4,122.7 L845.8,122.7 L845.2,122.8 L844.5,121.6 L843.9,122.4 L843.3,123.0 L842.7,123.7 L842.1,122.8 L841.4,121.7 L840.8,121.1 L840.2,121.3 L839.6,122.0 L839.0,122.7 L838.3,122.6 L837.7,122.5 L837.1,122.4 L836.5,122.6 L835.9,122.8 L835.2,122.6 L834.6,122.9 L834.0,122.0 L833.4,120.6 L832.8,120.4 L832.1,120.4 L831.5,120.5 L830.9,120.8 L830.3,121.4 L829.7,122.8 L829.0,122.5 L828.4,122.4 L827.8,122.7 L827.2,122.8 L826.6,122.8 L825.9,121.6 L825.3,121.7 L824.7,123.0 L824.1,123.2 L823.5,122.8 L822.8,122.1 L822.2,121.3 L821.6,121.3 L821.0,121.3 L820.4,122.7 L819.7,122.4 L819.1,122.5 L818.5,122.4 L817.9,122.6 L817.3,122.8 L816.6,122.6 L816.0,122.9 L815.4,122.7 L814.8,121.0 L814.2,120.4 L813.5,120.4 L812.9,120.5 L812.3,120.5 L811.7,121.4 L811.1,122.8 L810.4,123.0 L809.8,122.4 L809.2,122.6 L808.6,122.8 L808.0,122.7 L807.3,122.1 L806.7,121.7 L806.1,122.4 L805.5,123.2 L804.9,123.7 L804.2,122.1 L803.6,121.3 L803.0,121.1 L802.4,121.3 L801.8,122.0 L801.1,122.4 L800.5,122.6 L799.9,122.6 L799.3,122.6 L798.6,122.6 L798.0,122.6 L797.4,122.6 L796.8,122.7Z" fill="#1c1e2e" fill-opacity="0.95"/>
<path d="M796.8,129.6 L797.4,129.8 L798.0,129.7 L798.6,129.7 L799.3,129.8 L799.9,129.7 L800.5,129.7 L801.1,129.9 L801.8,130.3 L802.4,131.0 L803.0,131.1 L803.6,130.9 L804.2,130.2 L804.9,128.7 L805.5,129.2 L806.1,130.0 L806.7,130.5 L807.3,130.2 L808.0,129.6 L808.6,129.5 L809.2,129.7 L809.8,129.9 L810.4,129.4 L811.1,129.5 L811.7,130.8 L812.3,131.6 L812.9,131.7 L813.5,131.8 L814.2,131.8 L814.8,131.2 L815.4,129.6 L816.0,129.5 L816.6,129.7 L817.3,129.6 L817.9,129.8 L818.5,130.0 L819.1,129.8 L819.7,129.9 L820.4,129.6 L821.0,131.0 L821.6,130.9 L822.2,130.9 L822.8,130.2 L823.5,129.5 L824.1,129.2 L824.7,129.4 L825.3,130.5 L825.9,130.7 L826.6,129.5 L827.2,129.5 L827.8,129.6 L828.4,129.9 L829.0,129.9 L829.7,129.5 L830.3,130.8 L830.9,131.4 L831.5,131.7 L832.1,131.8 L832.8,131.8 L833.4,131.6 L834.0,130.3 L834.6,129.5 L835.2,129.8 L835.9,129.6 L836.5,129.7 L837.1,130.0 L837.7,129.8 L838.3,129.7 L839.0,129.6 L839.6,130.3 L840.2,130.9 L840.8,131.1 L841.4,130.5 L842.1,129.5 L842.7,128.7 L843.3,129.4 L843.9,130.0 L844.5,130.7 L845.2,129.5 L845.8,129.6 L846.4,129.6 L847.0,129.7 L847.6,129.9 L848.3,129.4 L848.9,129.8 L849.5,131.4 L850.1,131.6 L850.7,131.8 L851.4,131.8 L852.0,131.6 L852.6,130.3 L853.2,129.6 L853.8,129.8 L854.5,129.7 L855.1,129.7 L855.7,129.8 L856.3,129.7 L856.9,129.7 L856.9,135.5 L856.3,135.5 L855.7,135.5 L855.1,135.5 L854.5,135.5 L853.8,135.5 L853.2,135.6 L852.6,134.9 L852.0,133.5 L851.4,133.3 L850.7,133.3 L850.1,133.4 L849.5,133.7 L848.9,135.4 L848.3,135.9 L847.6,135.4 L847.0,135.5 L846.4,135.6 L845.8,135.6 L845.2,135.7 L844.5,134.5 L843.9,135.3 L843.3,135.9 L842.7,136.6 L842.1,135.7 L841.4,134.6 L840.8,134.0 L840.2,134.2 L839.6,134.9 L839.0,135.6 L838.3,135.5 L837.7,135.4 L837.1,135.3 L836.5,135.5 L835.9,135.7 L835.2,135.5 L834.6,135.8 L834.0,134.9 L833.4,133.5 L832.8,133.3 L832.1,133.3 L831.5,133.4 L830.9,133.7 L830.3,134.3 L829.7,135.7 L829.0,135.4 L828.4,135.3 L827.8,135.6 L827.2,135.7 L826.6,135.7 L825.9,134.5 L825.3,134.6 L824.7,135.9 L824.1,136.1 L823.5,135.7 L822.8,135.0 L822.2,134.2 L821.6,134.2 L821.0,134.2 L820.4,135.6 L819.7,135.3 L819.1,135.4 L818.5,135.3 L817.9,135.5 L817.3,135.7 L816.6,135.5 L816.0,135.8 L815.4,135.6 L814.8,133.9 L814.2,133.3 L813.5,133.3 L812.9,133.4 L812.3,133.4 L811.7,134.3 L811.1,135.7 L810.4,135.9 L809.8,135.3 L809.2,135.5 L808.6,135.7 L808.0,135.6 L807.3,135.0 L806.7,134.6 L806.1,135.3 L805.5,136.1 L804.9,136.6 L804.2,135.0 L803.6,134.2 L803.0,134.0 L802.4,134.2 L801.8,134.9 L801.1,135.3 L800.5,135.5 L799.9,135.5 L799.3,135.5 L798.6,135.5 L798.0,135.5 L797.4,135.5 L796.8,135.6Z" fill="#1c1e2e" fill-opacity="0.95"/>
<rect x="6.30" y="141.50" width="320.14" height="2.00" fill="#8cc6ff"/>
<rect x="25.80" y="147.00" width="751.60" height="1.90" fill="#6ea6d6"/>
<rect x="777.40" y="149.10" width="79.80" height="2.10" fill="#7fb8ea"/>
<rect x="796.19" y="144.40" width="61.01" height="1.80" fill="#8cc6ff"/>
<rect x="796.19" y="146.80" width="61.01" height="1.70" fill="#6797c4"/>
<path d="M7.01,141.50V143.50M16.41,141.50V143.50M25.80,141.50V143.50M35.20,141.50V143.50M44.59,141.50V143.50M53.98,141.50V143.50M63.38,141.50V143.50M72.77,141.50V143.50M82.17,141.50V143.50M91.56,141.50V143.50M100.96,141.50V143.50M110.35,141.50V143.50M119.75,141.50V143.50M129.15,141.50V143.50M138.54,141.50V143.50M147.94,141.50V143.50M157.33,141.50V143.50M166.72,141.50V143.50M176.12,141.50V143.50M185.52,141.50V143.50M194.91,141.50V143.50M204.31,141.50V143.50M213.70,141.50V143.50M223.09,141.50V143.50M232.49,141.50V143.50M241.88,141.50V143.50M251.28,141.50V143.50M260.68,141.50V143.50M270.07,141.50V143.50M279.46,141.50V143.50M288.86,141.50V143.50M298.25,141.50V143.50M307.65,141.50V143.50M317.05,141.50V143.50M326.44,141.50V143.50M335.83,141.50V143.50M345.23,141.50V143.50M354.62,141.50V143.50M364.02,141.50V143.50M373.42,141.50V143.50M382.81,141.50V143.50M392.20,141.50V143.50M401.60,141.50V143.50M411.00,141.50V143.50M420.39,141.50V143.50M429.78,141.50V143.50M439.18,141.50V143.50M448.57,141.50V143.50M457.97,141.50V143.50M467.37,141.50V143.50M476.76,141.50V143.50M486.15,141.50V143.50M495.55,141.50V143.50M504.94,141.50V143.50M514.34,141.50V143.50M523.74,141.50V143.50M533.13,141.50V143.50M542.52,141.50V143.50M551.92,141.50V143.50M561.31,141.50V143.50M570.71,141.50V143.50M580.10,141.50V143.50M589.50,141.50V143.50M598.89,141.50V143.50M608.29,141.50V143.50M617.68,141.50V143.50M627.08,141.50V143.50M636.47,141.50V143.50M645.87,141.50V143.50M655.26,141.50V143.50M664.66,141.50V143.50M674.05,141.50V143.50M683.45,141.50V143.50M692.84,141.50V143.50M702.24,141.50V143.50M711.63,141.50V143.50M721.03,141.50V143.50M730.42,141.50V143.50M739.82,141.50V143.50M749.21,141.50V143.50M758.61,141.50V143.50M768.00,141.50V143.50M777.40,141.50V143.50M786.79,141.50V143.50M796.19,141.50V143.50M805.58,141.50V143.50M814.98,141.50V143.50M824.37,141.50V143.50M833.77,141.50V143.50M843.16,141.50V143.50M852.56,141.50V143.50" fill="none" stroke="#000" stroke-width="0.8" stroke-opacity="0.12"/>
<path d="M7.01,147.00V148.90M16.41,147.00V148.90M25.80,147.00V148.90M35.20,147.00V148.90M44.59,147.00V148.90M53.98,147.00V148.90M63.38,147.00V148.90M72.77,147.00V148.90M82.17,147.00V148.90M91.56,147.00V148.90M100.96,147.00V148.90M110.35,147.00V148.90M119.75,147.00V148.90M129.15,147.00V148.90M138.54,147.00V148.90M147.94,147.00V148.90M157.33,147.00V148.90M166.72,147.00V148.90M176.12,147.00V148.90M185.52,147.00V148.90M194.91,147.00V148.90M204.31,147.00V148.90M213.70,147.00V148.90M223.09,147.00V148.90M232.49,147.00V148.90M241.88,147.00V148.90M251.28,147.00V148.90M260.68,147.00V148.90M270.07,147.00V148.90M279.46,147.00V148.90M288.86,147.00V148.90M298.25,147.00V148.90M307.65,147.00V148.90M317.05,147.00V148.90M326.44,147.00V148.90M335.83,147.00V148.90M345.23,147.00V148.90M354.62,147.00V148.90M364.02,147.00V148.90M373.42,147.00V148.90M382.81,147.00V148.90M392.20,147.00V148.90M401.60,147.00V148.90M411.00,147.00V148.90M420.39,147.00V148.90M429.78,147.00V148.90M439.18,147.00V148.90M448.57,147.00V148.90M457.97,147.00V148.90M467.37,147.00V148.90M476.76,147.00V148.90M486.15,147.00V148.90M495.55,147.00V148.90M504.94,147.00V148.90M514.34,147.00V148.90M523.74,147.00V148.90M533.13,147.00V148.90M542.52,147.00V148.90M551.92,147.00V148.90M561.31,147.00V148.90M570.71,147.00V148.90M580.10,147.00V148.90M589.50,147.00V148.90M598.89,147.00V148.90M608.29,147.00V148.90M617.68,147.00V148.90M627.08,147.00V148.90M636.47,147.00V148.90M645.87,147.00V148.90M655.26,147.00V148.90M664.66,147.00V148.90M674.05,147.00V148.90M683.45,147.00V148.90M692.84,147.00V148.90M702.24,147.00V148.90M711.63,147.00V148.90M721.03,147.00V148.90M730.42,147.00V148.90M739.82,147.00V148.90M749.21,147.00V148.90M758.61,147.00V148.90M768.00,147.00V148.90M777.40,147.00V148.90M786.79,147.00V148.90M796.19,147.00V148.90M805.58,147.00V148.90M814.98,147.00V148.90M824.37,147.00V148.90M833.77,147.00V148.90M843.16,147.00V148.90M852.56,147.00V148.90" fill="none" stroke="#000" stroke-width="0.8" stroke-opacity="0.12"/>
<path d="M7.01,149.10V151.20M16.41,149.10V151.20M25.80,149.10V151.20M35.20,149.10V151.20M44.59,149.10V151.20M53.98,149.10V151.20M63.38,149.10V151.20M72.77,149.10V151.20M82.17,149.10V151.20M91.56,149.10V151.20M100.96,149.10V151.20M110.35,149.10V151.20M119.75,149.10V151.20M129.15,149.10V151.20M138.54,149.10V151.20M147.94,149.10V151.20M157.33,149.10V151.20M166.72,149.10V151.20M176.12,149.10V151.20M185.52,149.10V151.20M194.91,149.10V151.20M204.31,149.10V151.20M213.70,149.10V151.20M223.09,149.10V151.20M232.49,149.10V151.20M241.88,149.10V151.20M251.28,149.10V151.20M260.68,149.10V151.20M270.07,149.10V151.20M279.46,149.10V151.20M288.86,149.10V151.20M298.25,149.10V151.20M307.65,149.10V151.20M317.05,149.10V151.20M326.44,149.10V151.20M335.83,149.10V151.20M345.23,149.10V151.20M354.62,149.10V151.20M364.02,149.10V151.20M373.42,149.10V151.20M382.81,149.10V151.20M392.20,149.10V151.20M401.60,149.10V151.20M411.00,149.10V151.20M420.39,149.10V151.20M429.78,149.10V151.20M439.18,149.10V151.20M448.57,149.10V151.20M457.97,149.10V151.20M467.37,149.10V151.20M476.76,149.10V151.20M486.15,149.10V151.20M495.55,149.10V151.20M504.94,149.10V151.20M514.34,149.10V151.20M523.74,149.10V151.20M533.13,149.10V151.20M542.52,149.10V151.20M551.92,149.10V151.20M561.31,149.10V151.20M570.71,149.10V151.20M580.10,149.10V151.20M589.50,149.10V151.20M598.89,149.10V151.20M608.29,149.10V151.20M617.68,149.10V151.20M627.08,149.10V151.20M636.47,149.10V151.20M645.87,149.10V151.20M655.26,149.10V151.20M664.66,149.10V151.20M674.05,149.10V151.20M683.45,149.10V151.20M692.84,149.10V151.20M702.24,149.10V151.20M711.63,149.10V151.20M721.03,149.10V151.20M730.42,149.10V151.20M739.82,149.10V151.20M749.21,149.10V151.20M758.61,149.10V151.20M768.00,149.10V151.20M777.40,149.10V151.20M786.79,149.10V151.20M796.19,149.10V151.20M805.58,149.10V151.20M814.98,149.10V151.20M824.37,149.10V151.20M833.77,149.10V151.20M843.16,149.10V151.20M852.56,149.10V151.20" fill="none" stroke="#000" stroke-width="0.8" stroke-opacity="0.12"/>
<path d="M7.01,144.40V148.50M16.41,144.40V148.50M25.80,144.40V148.50M35.20,144.40V148.50M44.59,144.40V148.50M53.98,144.40V148.50M63.38,144.40V148.50M72.77,144.40V148.50M82.17,144.40V148.50M91.56,144.40V148.50M100.96,144.40V148.50M110.35,144.40V148.50M119.75,144.40V148.50M129.15,144.40V148.50M138.54,144.40V148.50M147.94,144.40V148.50M157.33,144.40V148.50M166.72,144.40V148.50M176.12,144.40V148.50M185.52,144.40V148.50M194.91,144.40V148.50M204.31,144.40V148.50M213.70,144.40V148.50M223.09,144.40V148.50M232.49,144.40V148.50M241.88,144.40V148.50M251.28,144.40V148.50M260.68,144.40V148.50M270.07,144.40V148.50M279.46,144.40V148.50M288.86,144.40V148.50M298.25,144.40V148.50M307.65,144.40V148.50M317.05,144.40V148.50M326.44,144.40V148.50M335.83,144.40V148.50M345.23,144.40V148.50M354.62,144.40V148.50M364.02,144.40V148.50M373.42,144.40V148.50M382.81,144.40V148.50M392.20,144.40V148.50M401.60,144.40V148.50M411.00,144.40V148.50M420.39,144.40V148.50M429.78,144.40V148.50M439.18,144.40V148.50M448.57,144.40V148.50M457.97,144.40V148.50M467.37,144.40V148.50M476.76,144.40V148.50M486.15,144.40V148.50M495.55,144.40V148.50M504.94,144.40V148.50M514.34,144.40V148.50M523.74,144.40V148.50M533.13,144.40V148.50M542.52,144.40V148.50M551.92,144.40V148.50M561.31,144.40V148.50M570.71,144.40V148.50M580.10,144.40V148.50M589.50,144.40V148.50M598.89,144.40V148.50M608.29,144.40V148.50M617.68,144.40V148.50M627.08,144.40V148.50M636.47,144.40V148.50M645.87,144.40V148.50M655.26,144.40V148.50M664.66,144.40V148.50M674.05,144.40V148.50M683.45,144.40V148.50M692.84,144.40V148.50M702.24,144.40V148.50M711.63,144.40V148.50M721.03,144.40V148.50M730.42,144.40V148.50M739.82,144.40V148.50M749.21,144.40V148.50M758.61,144.40V148.50M768.00,144.40V148.50M777.40,144.40V148.50M786.79,144.40V148.50M796.19,144.40V148.50M805.58,144.40V148.50M814.98,144.40V148.50M824.37,144.40V148.50M833.77,144.40V148.50M843.16,144.40V148.50M852.56,144.40V148.50" fill="none" stroke="#000" stroke-width="0.8" stroke-opacity="0.12"/>
<rect x="176.12" y="153.70" width="150.32" height="36.80" fill="#5fffe6"/>
<path d="M185.52,165.00V190.50M194.91,165.00V190.50M204.31,165.00V190.50M213.70,165.00V190.50M223.09,165.00V190.50M232.49,165.00V190.50M241.88,165.00V190.50M251.28,165.00V190.50M260.68,165.00V190.50M270.07,165.00V190.50M279.46,165.00V190.50M288.86,165.00V190.50M298.25,165.00V190.50M307.65,165.00V190.50M317.05,165.00V190.50" fill="none" stroke="#000" stroke-width="0.8" stroke-opacity="0.12"/>
<line x1="176.12" y1="165.00" x2="326.44" y2="165.00" stroke="#000" stroke-width="0.8" stroke-opacity="0.16"/>
<line x1="176.12" y1="153.70" x2="176.12" y2="190.50" stroke="#000" stroke-width="0.9" stroke-opacity="0.42"/>
<path d="M190.22,182.10h4.70v1.30h-4.70zM183.12,186.40h4.80v1.30h-4.80zM195.02,186.40h4.80v1.30h-4.80zM176.92,169.10h4.10v1.30h-4.10zM209.01,182.10h4.70v1.30h-4.70zM204.41,169.10h1.50v1.30h-1.50zM227.80,182.10h4.70v1.30h-4.70zM220.70,186.40h4.80v1.30h-4.80zM232.60,186.40h4.80v1.30h-4.80zM246.59,182.10h4.70v1.30h-4.70zM242.19,169.10h1.50v1.30h-1.50zM265.38,182.10h4.70v1.30h-4.70zM258.28,186.40h4.80v1.30h-4.80zM270.18,186.40h4.80v1.30h-4.80zM252.08,169.10h4.10v1.30h-4.10zM284.17,182.10h4.70v1.30h-4.70zM279.57,169.10h1.50v1.30h-1.50zM302.96,182.10h4.70v1.30h-4.70zM295.86,186.40h4.80v1.30h-4.80zM307.76,186.40h4.80v1.30h-4.80zM321.75,182.10h4.70v1.30h-4.70zM317.35,169.10h1.50v1.30h-1.50z" fill="#0d2a2a" fill-opacity="0.85"/>
<rect x="326.44" y="153.70" width="150.32" height="36.80" fill="#5fffe6"/>
<path d="M335.83,165.00V190.50M345.23,165.00V190.50M354.62,165.00V190.50M364.02,165.00V190.50M373.42,165.00V190.50M382.81,165.00V190.50M392.20,165.00V190.50M401.60,165.00V190.50M411.00,165.00V190.50M420.39,165.00V190.50M429.78,165.00V190.50M439.18,165.00V190.50M448.57,165.00V190.50M457.97,165.00V190.50M467.37,165.00V190.50" fill="none" stroke="#000" stroke-width="0.8" stroke-opacity="0.12"/>
<line x1="326.44" y1="165.00" x2="476.76" y2="165.00" stroke="#000" stroke-width="0.8" stroke-opacity="0.16"/>
<line x1="326.44" y1="153.70" x2="326.44" y2="190.50" stroke="#000" stroke-width="0.9" stroke-opacity="0.42"/>
<path d="M340.54,182.10h4.70v1.30h-4.70zM333.44,186.40h4.80v1.30h-4.80zM345.34,186.40h4.80v1.30h-4.80zM327.24,169.10h4.10v1.30h-4.10zM359.33,182.10h4.70v1.30h-4.70zM354.73,169.10h1.50v1.30h-1.50zM378.12,182.10h4.70v1.30h-4.70zM371.02,186.40h4.80v1.30h-4.80zM382.92,186.40h4.80v1.30h-4.80zM396.91,182.10h4.70v1.30h-4.70zM392.51,169.10h1.50v1.30h-1.50zM415.70,182.10h4.70v1.30h-4.70zM408.60,186.40h4.80v1.30h-4.80zM420.50,186.40h4.80v1.30h-4.80zM402.40,169.10h4.10v1.30h-4.10zM434.49,182.10h4.70v1.30h-4.70zM429.89,169.10h1.50v1.30h-1.50zM453.28,182.10h4.70v1.30h-4.70zM446.18,186.40h4.80v1.30h-4.80zM458.08,186.40h4.80v1.30h-4.80zM472.07,182.10h4.70v1.30h-4.70zM467.67,169.10h1.50v1.30h-1.50z" fill="#0d2a2a" fill-opacity="0.85"/>
<rect x="476.76" y="153.70" width="150.32" height="36.80" fill="#5fffe6"/>
<path d="M486.15,165.00V190.50M495.55,165.00V190.50M504.94,165.00V190.50M514.34,165.00V190.50M523.74,165.00V190.50M533.13,165.00V190.50M542.52,165.00V190.50M551.92,165.00V190.50M561.31,165.00V190.50M570.71,165.00V190.50M580.10,165.00V190.50M589.50,165.00V190.50M598.89,165.00V190.50M608.29,165.00V190.50M617.68,165.00V190.50" fill="none" stroke="#000" stroke-width="0.8" stroke-opacity="0.12"/>
<line x1="476.76" y1="165.00" x2="627.08" y2="165.00" stroke="#000" stroke-width="0.8" stroke-opacity="0.16"/>
<line x1="476.76" y1="153.70" x2="476.76" y2="190.50" stroke="#000" stroke-width="0.9" stroke-opacity="0.42"/>
<path d="M490.86,182.10h4.70v1.30h-4.70zM483.76,186.40h4.80v1.30h-4.80zM495.66,186.40h4.80v1.30h-4.80zM477.56,169.10h4.10v1.30h-4.10zM509.65,182.10h4.70v1.30h-4.70zM505.05,169.10h1.50v1.30h-1.50zM528.44,182.10h4.70v1.30h-4.70zM521.34,186.40h4.80v1.30h-4.80zM533.24,186.40h4.80v1.30h-4.80zM547.23,182.10h4.70v1.30h-4.70zM542.83,169.10h1.50v1.30h-1.50zM566.02,182.10h4.70v1.30h-4.70zM558.92,186.40h4.80v1.30h-4.80zM570.82,186.40h4.80v1.30h-4.80zM552.72,169.10h4.10v1.30h-4.10zM584.81,182.10h4.70v1.30h-4.70zM580.21,169.10h1.50v1.30h-1.50zM603.60,182.10h4.70v1.30h-4.70zM596.50,186.40h4.80v1.30h-4.80zM608.40,186.40h4.80v1.30h-4.80zM622.39,182.10h4.70v1.30h-4.70zM617.99,169.10h1.50v1.30h-1.50z" fill="#0d2a2a" fill-opacity="0.85"/>
<rect x="777.40" y="153.70" width="79.80" height="36.80" fill="#5fffe6"/>
<path d="M786.79,165.00V190.50M796.19,165.00V190.50M805.58,165.00V190.50M814.98,165.00V190.50M824.37,165.00V190.50M833.77,165.00V190.50M843.16,165.00V190.50M852.56,165.00V190.50" fill="none" stroke="#000" stroke-width="0.8" stroke-opacity="0.12"/>
<line x1="777.40" y1="165.00" x2="857.20" y2="165.00" stroke="#000" stroke-width="0.8" stroke-opacity="0.16"/>
<line x1="777.40" y1="153.70" x2="777.40" y2="190.50" stroke="#000" stroke-width="0.9" stroke-opacity="0.42"/>
<path d="M796.30,186.40h4.80v1.30h-4.80zM810.29,182.10h4.70v1.30h-4.70zM805.69,169.10h1.50v1.30h-1.50zM829.08,182.10h4.70v1.30h-4.70zM821.98,186.40h4.80v1.30h-4.80zM833.88,186.40h4.80v1.30h-4.80zM847.87,182.10h4.70v1.30h-4.70zM843.47,169.10h1.50v1.30h-1.50zM853.36,169.10h3.84v1.30h-3.84z" fill="#0d2a2a" fill-opacity="0.85"/>
<rect x="307.65" y="192.00" width="18.79" height="12.00" fill="#5fffe6"/>
<rect x="457.97" y="192.00" width="18.79" height="12.00" fill="#5fffe6"/>
<rect x="608.29" y="192.00" width="18.79" height="12.00" fill="#5fffe6"/>
<rect x="326.44" y="205.60" width="150.32" height="24.80" fill="#edfdab"/>
<path d="M335.83,217.10V230.40M345.23,217.10V230.40M354.62,217.10V230.40M364.02,217.10V230.40M373.42,217.10V230.40M382.81,217.10V230.40M392.20,217.10V230.40M401.60,217.10V230.40M411.00,217.10V230.40M420.39,217.10V230.40M429.78,217.10V230.40M439.18,217.10V230.40M448.57,217.10V230.40M457.97,217.10V230.40M467.37,217.10V230.40" fill="none" stroke="#000" stroke-width="0.8" stroke-opacity="0.12"/>
<line x1="326.44" y1="217.10" x2="476.76" y2="217.10" stroke="#000" stroke-width="0.8" stroke-opacity="0.16"/>
<line x1="326.44" y1="205.60" x2="326.44" y2="230.40" stroke="#000" stroke-width="0.9" stroke-opacity="0.42"/>
<rect x="326.94" y="221.50" width="149.82" height="4.80" fill="#23251c"/>
<rect x="176.12" y="231.90" width="56.37" height="37.00" fill="#f8f17c"/>
<path d="M185.52,243.20V268.90M194.91,243.20V268.90M204.31,243.20V268.90M213.70,243.20V268.90M223.09,243.20V268.90" fill="none" stroke="#000" stroke-width="0.8" stroke-opacity="0.12"/>
<line x1="176.12" y1="243.20" x2="232.49" y2="243.20" stroke="#000" stroke-width="0.8" stroke-opacity="0.16"/>
<line x1="176.12" y1="231.90" x2="176.12" y2="268.90" stroke="#000" stroke-width="0.9" stroke-opacity="0.42"/>
<path d="M177.02,254.20h3.50v1.20h-3.50zM183.02,262.70h4.50v1.20h-4.50zM190.02,260.70h5.00v1.20h-5.00zM195.02,262.70h5.00v1.20h-5.00zM204.52,254.20h1.50v1.20h-1.50zM209.52,260.70h3.60v1.20h-3.60zM221.02,262.70h4.00v1.20h-4.00zM227.52,260.70h5.00v1.20h-5.00z" fill="#2a2810" fill-opacity="0.85"/>
<rect x="326.44" y="231.90" width="75.16" height="37.00" fill="#f8f17c"/>
<path d="M335.83,243.20V268.90M345.23,243.20V268.90M354.62,243.20V268.90M364.02,243.20V268.90M373.42,243.20V268.90M382.81,243.20V268.90M392.20,243.20V268.90" fill="none" stroke="#000" stroke-width="0.8" stroke-opacity="0.12"/>
<line x1="326.44" y1="243.20" x2="401.60" y2="243.20" stroke="#000" stroke-width="0.8" stroke-opacity="0.16"/>
<line x1="326.44" y1="231.90" x2="326.44" y2="268.90" stroke="#000" stroke-width="0.9" stroke-opacity="0.42"/>
<path d="M326.94,250.00h37.08v0.80h-37.08zM326.94,252.80h37.08v0.90h-37.08zM326.94,255.10h37.08v0.90h-37.08zM364.02,251.50h18.79v1.10h-18.79zM382.81,249.10h18.79v1.10h-18.79z" fill="#2a2810" fill-opacity="0.7"/>
<rect x="176.12" y="278.70" width="450.96" height="3.00" fill="#ffa374"/>
<rect x="326.44" y="275.40" width="75.16" height="3.00" fill="#dc8a62"/>
<rect x="401.60" y="275.40" width="225.48" height="3.00" fill="#f79a6c"/>
<rect x="476.76" y="271.30" width="37.58" height="3.00" fill="#f79a6c"/>
<rect x="551.92" y="271.30" width="225.48" height="3.00" fill="#f79a6c"/>
<rect x="777.40" y="275.30" width="79.80" height="3.20" fill="#f79a6c"/>
<path d="M7.01,271.30V274.30M16.41,271.30V274.30M25.80,271.30V274.30M35.20,271.30V274.30M44.59,271.30V274.30M53.98,271.30V274.30M63.38,271.30V274.30M72.77,271.30V274.30M82.17,271.30V274.30M91.56,271.30V274.30M100.96,271.30V274.30M110.35,271.30V274.30M119.75,271.30V274.30M129.15,271.30V274.30M138.54,271.30V274.30M147.94,271.30V274.30M157.33,271.30V274.30M166.72,271.30V274.30M176.12,271.30V274.30M185.52,271.30V274.30M194.91,271.30V274.30M204.31,271.30V274.30M213.70,271.30V274.30M223.09,271.30V274.30M232.49,271.30V274.30M241.88,271.30V274.30M251.28,271.30V274.30M260.68,271.30V274.30M270.07,271.30V274.30M279.46,271.30V274.30M288.86,271.30V274.30M298.25,271.30V274.30M307.65,271.30V274.30M317.05,271.30V274.30M326.44,271.30V274.30M335.83,271.30V274.30M345.23,271.30V274.30M354.62,271.30V274.30M364.02,271.30V274.30M373.42,271.30V274.30M382.81,271.30V274.30M392.20,271.30V274.30M401.60,271.30V274.30M411.00,271.30V274.30M420.39,271.30V274.30M429.78,271.30V274.30M439.18,271.30V274.30M448.57,271.30V274.30M457.97,271.30V274.30M467.37,271.30V274.30M476.76,271.30V274.30M486.15,271.30V274.30M495.55,271.30V274.30M504.94,271.30V274.30M514.34,271.30V274.30M523.74,271.30V274.30M533.13,271.30V274.30M542.52,271.30V274.30M551.92,271.30V274.30M561.31,271.30V274.30M570.71,271.30V274.30M580.10,271.30V274.30M589.50,271.30V274.30M598.89,271.30V274.30M608.29,271.30V274.30M617.68,271.30V274.30M627.08,271.30V274.30M636.47,271.30V274.30M645.87,271.30V274.30M655.26,271.30V274.30M664.66,271.30V274.30M674.05,271.30V274.30M683.45,271.30V274.30M692.84,271.30V274.30M702.24,271.30V274.30M711.63,271.30V274.30M721.03,271.30V274.30M730.42,271.30V274.30M739.82,271.30V274.30M749.21,271.30V274.30M758.61,271.30V274.30M768.00,271.30V274.30M777.40,271.30V274.30M786.79,271.30V274.30M796.19,271.30V274.30M805.58,271.30V274.30M814.98,271.30V274.30M824.37,271.30V274.30M833.77,271.30V274.30M843.16,271.30V274.30M852.56,271.30V274.30" fill="none" stroke="#000" stroke-width="0.8" stroke-opacity="0.12"/>
<path d="M7.01,275.30V278.50M16.41,275.30V278.50M25.80,275.30V278.50M35.20,275.30V278.50M44.59,275.30V278.50M53.98,275.30V278.50M63.38,275.30V278.50M72.77,275.30V278.50M82.17,275.30V278.50M91.56,275.30V278.50M100.96,275.30V278.50M110.35,275.30V278.50M119.75,275.30V278.50M129.15,275.30V278.50M138.54,275.30V278.50M147.94,275.30V278.50M157.33,275.30V278.50M166.72,275.30V278.50M176.12,275.30V278.50M185.52,275.30V278.50M194.91,275.30V278.50M204.31,275.30V278.50M213.70,275.30V278.50M223.09,275.30V278.50M232.49,275.30V278.50M241.88,275.30V278.50M251.28,275.30V278.50M260.68,275.30V278.50M270.07,275.30V278.50M279.46,275.30V278.50M288.86,275.30V278.50M298.25,275.30V278.50M307.65,275.30V278.50M317.05,275.30V278.50M326.44,275.30V278.50M335.83,275.30V278.50M345.23,275.30V278.50M354.62,275.30V278.50M364.02,275.30V278.50M373.42,275.30V278.50M382.81,275.30V278.50M392.20,275.30V278.50M401.60,275.30V278.50M411.00,275.30V278.50M420.39,275.30V278.50M429.78,275.30V278.50M439.18,275.30V278.50M448.57,275.30V278.50M457.97,275.30V278.50M467.37,275.30V278.50M476.76,275.30V278.50M486.15,275.30V278.50M495.55,275.30V278.50M504.94,275.30V278.50M514.34,275.30V278.50M523.74,275.30V278.50M533.13,275.30V278.50M542.52,275.30V278.50M551.92,275.30V278.50M561.31,275.30V278.50M570.71,275.30V278.50M580.10,275.30V278.50M589.50,275.30V278.50M598.89,275.30V278.50M608.29,275.30V278.50M617.68,275.30V278.50M627.08,275.30V278.50M636.47,275.30V278.50M645.87,275.30V278.50M655.26,275.30V278.50M664.66,275.30V278.50M674.05,275.30V278.50M683.45,275.30V278.50M692.84,275.30V278.50M702.24,275.30V278.50M711.63,275.30V278.50M721.03,275.30V278.50M730.42,275.30V278.50M739.82,275.30V278.50M749.21,275.30V278.50M758.61,275.30V278.50M768.00,275.30V278.50M777.40,275.30V278.50M786.79,275.30V278.50M796.19,275.30V278.50M805.58,275.30V278.50M814.98,275.30V278.50M824.37,275.30V278.50M833.77,275.30V278.50M843.16,275.30V278.50M852.56,275.30V278.50" fill="none" stroke="#000" stroke-width="0.8" stroke-opacity="0.12"/>
<path d="M7.01,278.70V281.70M16.41,278.70V281.70M25.80,278.70V281.70M35.20,278.70V281.70M44.59,278.70V281.70M53.98,278.70V281.70M63.38,278.70V281.70M72.77,278.70V281.70M82.17,278.70V281.70M91.56,278.70V281.70M100.96,278.70V281.70M110.35,278.70V281.70M119.75,278.70V281.70M129.15,278.70V281.70M138.54,278.70V281.70M147.94,278.70V281.70M157.33,278.70V281.70M166.72,278.70V281.70M176.12,278.70V281.70M185.52,278.70V281.70M194.91,278.70V281.70M204.31,278.70V281.70M213.70,278.70V281.70M223.09,278.70V281.70M232.49,278.70V281.70M241.88,278.70V281.70M251.28,278.70V281.70M260.68,278.70V281.70M270.07,278.70V281.70M279.46,278.70V281.70M288.86,278.70V281.70M298.25,278.70V281.70M307.65,278.70V281.70M317.05,278.70V281.70M326.44,278.70V281.70M335.83,278.70V281.70M345.23,278.70V281.70M354.62,278.70V281.70M364.02,278.70V281.70M373.42,278.70V281.70M382.81,278.70V281.70M392.20,278.70V281.70M401.60,278.70V281.70M411.00,278.70V281.70M420.39,278.70V281.70M429.78,278.70V281.70M439.18,278.70V281.70M448.57,278.70V281.70M457.97,278.70V281.70M467.37,278.70V281.70M476.76,278.70V281.70M486.15,278.70V281.70M495.55,278.70V281.70M504.94,278.70V281.70M514.34,278.70V281.70M523.74,278.70V281.70M533.13,278.70V281.70M542.52,278.70V281.70M551.92,278.70V281.70M561.31,278.70V281.70M570.71,278.70V281.70M580.10,278.70V281.70M589.50,278.70V281.70M598.89,278.70V281.70M608.29,278.70V281.70M617.68,278.70V281.70M627.08,278.70V281.70M636.47,278.70V281.70M645.87,278.70V281.70M655.26,278.70V281.70M664.66,278.70V281.70M674.05,278.70V281.70M683.45,278.70V281.70M692.84,278.70V281.70M702.24,278.70V281.70M711.63,278.70V281.70M721.03,278.70V281.70M730.42,278.70V281.70M739.82,278.70V281.70M749.21,278.70V281.70M758.61,278.70V281.70M768.00,278.70V281.70M777.40,278.70V281.70M786.79,278.70V281.70M796.19,278.70V281.70M805.58,278.70V281.70M814.98,278.70V281.70M824.37,278.70V281.70M833.77,278.70V281.70M843.16,278.70V281.70M852.56,278.70V281.70" fill="none" stroke="#000" stroke-width="0.8" stroke-opacity="0.12"/>
<rect x="6.30" y="283.90" width="19.50" height="36.80" fill="#ff94a6"/>
<path d="M7.01,295.20V320.70M16.41,295.20V320.70" fill="none" stroke="#000" stroke-width="0.8" stroke-opacity="0.12"/>
<line x1="6.30" y1="295.20" x2="25.80" y2="295.20" stroke="#000" stroke-width="0.8" stroke-opacity="0.16"/>
<rect x="9.10" y="290.90" width="1.15" height="1.15" fill="#1b1b1b" fill-opacity="0.85"/>
<rect x="11.45" y="290.90" width="1.15" height="1.15" fill="#1b1b1b" fill-opacity="0.85"/>
<rect x="13.80" y="290.90" width="1.15" height="1.15" fill="#1b1b1b" fill-opacity="0.85"/>
<line x1="6.30" y1="301.60" x2="25.80" y2="301.60" stroke="#2a1418" stroke-width="1.0" stroke-opacity="0.8"/>
<line x1="6.30" y1="314.70" x2="25.80" y2="314.70" stroke="#2a1418" stroke-width="1.0" stroke-opacity="0.8"/>
<rect x="25.80" y="283.90" width="150.32" height="36.80" fill="#ff94a6"/>
<path d="M35.20,295.20V320.70M44.59,295.20V320.70M53.98,295.20V320.70M63.38,295.20V320.70M72.77,295.20V320.70M82.17,295.20V320.70M91.56,295.20V320.70M100.96,295.20V320.70M110.35,295.20V320.70M119.75,295.20V320.70M129.15,295.20V320.70M138.54,295.20V320.70M147.94,295.20V320.70M157.33,295.20V320.70M166.72,295.20V320.70" fill="none" stroke="#000" stroke-width="0.8" stroke-opacity="0.12"/>
<line x1="25.80" y1="295.20" x2="176.12" y2="295.20" stroke="#000" stroke-width="0.8" stroke-opacity="0.16"/>
<line x1="25.80" y1="283.90" x2="25.80" y2="320.70" stroke="#000" stroke-width="0.9" stroke-opacity="0.42"/>
<line x1="25.80" y1="301.60" x2="176.12" y2="301.60" stroke="#2a1418" stroke-width="1.0" stroke-opacity="0.8"/>
<line x1="25.80" y1="314.70" x2="176.12" y2="314.70" stroke="#2a1418" stroke-width="1.0" stroke-opacity="0.8"/>
<rect x="326.44" y="283.90" width="150.32" height="36.80" fill="#ff94a6"/>
<path d="M335.83,295.20V320.70M345.23,295.20V320.70M354.62,295.20V320.70M364.02,295.20V320.70M373.42,295.20V320.70M382.81,295.20V320.70M392.20,295.20V320.70M401.60,295.20V320.70M411.00,295.20V320.70M420.39,295.20V320.70M429.78,295.20V320.70M439.18,295.20V320.70M448.57,295.20V320.70M457.97,295.20V320.70M467.37,295.20V320.70" fill="none" stroke="#000" stroke-width="0.8" stroke-opacity="0.12"/>
<line x1="326.44" y1="295.20" x2="476.76" y2="295.20" stroke="#000" stroke-width="0.8" stroke-opacity="0.16"/>
<line x1="326.44" y1="283.90" x2="326.44" y2="320.70" stroke="#000" stroke-width="0.9" stroke-opacity="0.42"/>
<line x1="326.44" y1="301.60" x2="476.76" y2="301.60" stroke="#2a1418" stroke-width="1.0" stroke-opacity="0.8"/>
<line x1="326.44" y1="314.70" x2="476.76" y2="314.70" stroke="#2a1418" stroke-width="1.0" stroke-opacity="0.8"/>
<polygon points="461.26,295.20 476.76,295.20 476.76,320.70" fill="#000" fill-opacity="0.16"/>
<rect x="627.08" y="283.90" width="150.32" height="36.80" fill="#ff94a6"/>
<path d="M636.47,295.20V320.70M645.87,295.20V320.70M655.26,295.20V320.70M664.66,295.20V320.70M674.05,295.20V320.70M683.45,295.20V320.70M692.84,295.20V320.70M702.24,295.20V320.70M711.63,295.20V320.70M721.03,295.20V320.70M730.42,295.20V320.70M739.82,295.20V320.70M749.21,295.20V320.70M758.61,295.20V320.70M768.00,295.20V320.70" fill="none" stroke="#000" stroke-width="0.8" stroke-opacity="0.12"/>
<line x1="627.08" y1="295.20" x2="777.40" y2="295.20" stroke="#000" stroke-width="0.8" stroke-opacity="0.16"/>
<line x1="627.08" y1="283.90" x2="627.08" y2="320.70" stroke="#000" stroke-width="0.9" stroke-opacity="0.42"/>
<line x1="627.08" y1="301.60" x2="777.40" y2="301.60" stroke="#2a1418" stroke-width="1.0" stroke-opacity="0.8"/>
<line x1="627.08" y1="314.70" x2="777.40" y2="314.70" stroke="#2a1418" stroke-width="1.0" stroke-opacity="0.8"/>
<polygon points="761.90,295.20 777.40,295.20 777.40,320.70" fill="#000" fill-opacity="0.16"/>
<rect x="25.80" y="322.30" width="150.32" height="11.80" fill="#ff94a6"/>
<polygon points="25.80,322.30 27.00,322.30 25.80,334.10" fill="#000" fill-opacity="0.2"/>
<polygon points="176.12,322.30 174.92,322.30 176.12,334.10" fill="#000" fill-opacity="0.2"/>
<rect x="312.50" y="322.30" width="18.00" height="11.80" fill="#ff94a6"/>
<polygon points="312.50,322.30 317.50,322.30 312.50,334.10" fill="#000" fill-opacity="0.2"/>
<polygon points="330.50,322.30 328.90,322.30 330.50,334.10" fill="#000" fill-opacity="0.2"/>
<rect x="401.60" y="322.30" width="75.16" height="11.80" fill="#ff94a6"/>
<polygon points="476.76,322.30 468.26,322.30 476.76,334.10" fill="#000" fill-opacity="0.2"/>
<polygon points="401.60,322.30 429.60,322.30 401.60,334.10" fill="#000" fill-opacity="0.14"/>
<rect x="613.20" y="322.30" width="13.88" height="11.80" fill="#ff94a6"/>
<polygon points="613.20,322.30 619.20,322.30 613.20,334.10" fill="#000" fill-opacity="0.2"/>
<rect x="702.24" y="322.30" width="75.16" height="11.80" fill="#ff94a6"/>
<polygon points="702.24,322.30 726.24,322.30 702.24,334.10" fill="#000" fill-opacity="0.14"/>
<rect x="138.54" y="335.70" width="37.58" height="11.80" fill="#d86de5"/>
<polygon points="138.54,335.70 140.34,335.70 138.54,347.50" fill="#000" fill-opacity="0.2"/>
<polygon points="176.12,335.70 174.62,335.70 176.12,347.50" fill="#000" fill-opacity="0.2"/>
<rect x="401.60" y="335.70" width="75.16" height="11.80" fill="#d86de5"/>
<polygon points="401.60,335.70 402.80,335.70 401.60,347.50" fill="#000" fill-opacity="0.2"/>
<polygon points="476.76,335.70 475.56,335.70 476.76,347.50" fill="#000" fill-opacity="0.2"/>
<rect x="702.24" y="335.70" width="75.16" height="11.80" fill="#d86de5"/>
<polygon points="702.24,335.70 703.44,335.70 702.24,347.50" fill="#000" fill-opacity="0.2"/>
<rect x="25.80" y="349.20" width="150.32" height="11.70" fill="#d86de5"/>
<rect x="326.44" y="349.20" width="150.32" height="11.70" fill="#d86de5"/>
<rect x="858.30" y="63.60" width="73.50" height="36.60" fill="#95a7ff"/>
<circle cx="865.30" cy="69.40" r="4.20" fill="none" stroke="#1b1b1b" stroke-width="0.75" stroke-opacity="0.85"/>
<polygon points="863.00,68.30 867.60,68.30 865.30,71.30" fill="#1b1b1b" fill-opacity="0.85"/>
<text x="874.60" y="71.90" font-size="7.25" fill="#1b1b1b" font-weight="bold" fill-opacity="0.8">Drums</text>
<rect x="934.80" y="65.10" width="31.90" height="8.50" fill="#ffad56"/>
<text x="950.75" y="72.10" font-size="7.6" fill="#1a1206" text-anchor="middle" font-weight="bold">1</text>
<rect x="970.00" y="65.10" width="14.60" height="8.50" fill="#212121"/>
<text x="977.30" y="71.90" font-size="7.0" fill="#c0c0c0" text-anchor="middle" font-weight="bold">S</text>
<rect x="988.10" y="65.10" width="14.70" height="8.50" fill="#212121"/>
<circle cx="995.45" cy="69.40" r="2.70" fill="#c4c4c4"/>
<circle cx="994.95" cy="70.40" r="0.85" fill="#222"/>
<line x1="995.65" y1="70.40" x2="995.95" y2="67.70" stroke="#222" stroke-width="0.7"/>
<rect x="934.80" y="77.20" width="31.90" height="8.50" fill="#212121"/>
<rect x="935.30" y="77.70" width="24.72" height="7.50" fill="#0f7b8d"/>
<text x="951.25" y="84.30" font-size="7.4" fill="#c8c8c8" text-anchor="middle">-1.0</text>
<rect x="970.00" y="77.20" width="32.80" height="8.50" fill="#212121"/>
<text x="986.40" y="84.20" font-size="7.0" fill="#c0c0c0" text-anchor="middle" font-weight="bold">C</text>
<rect x="934.40" y="89.20" width="21.10" height="8.20" fill="#212121"/>
<text x="945.95" y="95.90" font-size="7.2" fill="#c8c8c8" text-anchor="middle">-52.8</text>
<circle cx="936.00" cy="90.70" r="1.35" fill="#ff3b3b"/>
<rect x="958.00" y="89.20" width="20.80" height="8.20" fill="#212121"/>
<line x1="964.20" y1="93.40" x2="966.50" y2="93.40" stroke="#c8c8c8" stroke-width="0.8"/>
<text x="966.30" y="97.00" font-size="11.5" fill="#c8c8c8" font-family='"DejaVu Sans", sans-serif'>∞</text>
<circle cx="959.60" cy="90.70" r="1.35" fill="#ff3b3b"/>
<rect x="934.90" y="92.80" width="1.50" height="4.10" fill="#0f7b8d"/>
<rect x="1005.20" y="65.20" width="2.70" height="33.40" fill="#202020"/>
<rect x="1008.20" y="65.20" width="2.70" height="33.40" fill="#202020"/>
<rect x="858.30" y="101.90" width="73.50" height="36.80" fill="#95a7ff"/>
<circle cx="865.30" cy="107.70" r="4.20" fill="none" stroke="#1b1b1b" stroke-width="0.75" stroke-opacity="0.85"/>
<polygon points="863.00,106.60 867.60,106.60 865.30,109.60" fill="#1b1b1b" fill-opacity="0.85"/>
<text x="874.60" y="110.20" font-size="7.25" fill="#1b1b1b" font-weight="bold" fill-opacity="0.8">Breaks</text>
<rect x="934.80" y="103.40" width="31.90" height="8.50" fill="#ffad56"/>
<text x="950.75" y="110.40" font-size="7.6" fill="#1a1206" text-anchor="middle" font-weight="bold">2</text>
<rect x="970.00" y="103.40" width="14.60" height="8.50" fill="#212121"/>
<text x="977.30" y="110.20" font-size="7.0" fill="#c0c0c0" text-anchor="middle" font-weight="bold">S</text>
<rect x="988.10" y="103.40" width="14.70" height="8.50" fill="#212121"/>
<circle cx="995.45" cy="107.70" r="2.50" fill="#7a7a7a"/>
<rect x="934.80" y="115.50" width="31.90" height="8.50" fill="#212121"/>
<rect x="935.30" y="116.00" width="17.92" height="7.50" fill="#0f7b8d"/>
<text x="951.25" y="122.60" font-size="7.4" fill="#c8c8c8" text-anchor="middle">-9.4</text>
<rect x="970.00" y="115.50" width="32.80" height="8.50" fill="#212121"/>
<text x="986.40" y="122.50" font-size="7.0" fill="#c0c0c0" text-anchor="middle" font-weight="bold">C</text>
<rect x="934.40" y="127.50" width="21.10" height="8.20" fill="#212121"/>
<line x1="940.75" y1="131.70" x2="943.05" y2="131.70" stroke="#c8c8c8" stroke-width="0.8"/>
<text x="942.85" y="135.30" font-size="11.5" fill="#c8c8c8" font-family='"DejaVu Sans", sans-serif'>∞</text>
<circle cx="936.00" cy="129.00" r="1.35" fill="#ff3b3b"/>
<rect x="958.00" y="127.50" width="20.80" height="8.20" fill="#212121"/>
<line x1="963.20" y1="131.70" x2="965.50" y2="131.70" stroke="#c8c8c8" stroke-width="0.8"/>
<text x="965.30" y="135.30" font-size="11.5" fill="#c8c8c8" font-family='"DejaVu Sans", sans-serif'>∞</text>
<rect x="1005.20" y="103.50" width="2.70" height="33.60" fill="#202020"/>
<rect x="1008.20" y="103.50" width="2.70" height="33.60" fill="#202020"/>
<rect x="858.30" y="140.20" width="73.50" height="11.80" fill="#8bc5ff"/>
<circle cx="865.30" cy="146.00" r="4.20" fill="none" stroke="#1b1b1b" stroke-width="0.75" stroke-opacity="0.85"/>
<line x1="863.50" y1="144.60" x2="867.10" y2="144.60" stroke="#1b1b1b" stroke-width="0.75" stroke-opacity="0.85"/>
<line x1="863.50" y1="146.00" x2="867.10" y2="146.00" stroke="#1b1b1b" stroke-width="0.75" stroke-opacity="0.85"/>
<line x1="863.50" y1="147.40" x2="867.10" y2="147.40" stroke="#1b1b1b" stroke-width="0.75" stroke-opacity="0.85"/>
<text x="873.60" y="148.50" font-size="7.25" fill="#1b1b1b" font-weight="bold" fill-opacity="0.8">Percussion</text>
<rect x="934.80" y="141.70" width="31.90" height="8.50" fill="#ffad56"/>
<text x="950.75" y="148.70" font-size="7.6" fill="#1a1206" text-anchor="middle" font-weight="bold">3</text>
<rect x="970.00" y="141.70" width="14.60" height="8.50" fill="#212121"/>
<text x="977.30" y="148.50" font-size="7.0" fill="#c0c0c0" text-anchor="middle" font-weight="bold">S</text>
<rect x="1005.20" y="141.80" width="2.70" height="8.60" fill="#202020"/>
<rect x="1008.20" y="141.80" width="2.70" height="8.60" fill="#202020"/>
<rect x="858.30" y="153.70" width="73.50" height="36.80" fill="#5fffe6"/>
<circle cx="865.30" cy="159.50" r="4.20" fill="none" stroke="#1b1b1b" stroke-width="0.75" stroke-opacity="0.85"/>
<polygon points="863.00,158.40 867.60,158.40 865.30,161.40" fill="#1b1b1b" fill-opacity="0.85"/>
<text x="874.60" y="162.00" font-size="7.25" fill="#1b1b1b" font-weight="bold" fill-opacity="0.8">Bass</text>
<rect x="934.80" y="155.20" width="31.90" height="8.50" fill="#ffad56"/>
<text x="950.75" y="162.20" font-size="7.6" fill="#1a1206" text-anchor="middle" font-weight="bold">8</text>
<rect x="970.00" y="155.20" width="14.60" height="8.50" fill="#212121"/>
<text x="977.30" y="162.00" font-size="7.0" fill="#c0c0c0" text-anchor="middle" font-weight="bold">S</text>
<rect x="988.10" y="155.20" width="14.70" height="8.50" fill="#212121"/>
<circle cx="995.45" cy="159.50" r="2.70" fill="#c4c4c4"/>
<circle cx="994.95" cy="160.50" r="0.85" fill="#222"/>
<line x1="995.65" y1="160.50" x2="995.95" y2="157.80" stroke="#222" stroke-width="0.7"/>
<rect x="934.80" y="167.30" width="31.90" height="8.50" fill="#212121"/>
<rect x="935.30" y="167.80" width="20.09" height="7.50" fill="#0f7b8d"/>
<text x="951.25" y="174.40" font-size="7.4" fill="#c8c8c8" text-anchor="middle">-7.7</text>
<rect x="970.00" y="167.30" width="32.80" height="8.50" fill="#212121"/>
<text x="986.40" y="174.30" font-size="7.0" fill="#c0c0c0" text-anchor="middle" font-weight="bold">C</text>
<rect x="934.40" y="179.30" width="21.10" height="8.20" fill="#212121"/>
<line x1="939.75" y1="183.50" x2="942.05" y2="183.50" stroke="#c8c8c8" stroke-width="0.8"/>
<text x="941.85" y="187.10" font-size="11.5" fill="#c8c8c8" font-family='"DejaVu Sans", sans-serif'>∞</text>
<rect x="958.00" y="179.30" width="20.80" height="8.20" fill="#212121"/>
<line x1="963.20" y1="183.50" x2="965.50" y2="183.50" stroke="#c8c8c8" stroke-width="0.8"/>
<text x="965.30" y="187.10" font-size="11.5" fill="#c8c8c8" font-family='"DejaVu Sans", sans-serif'>∞</text>
<rect x="1005.20" y="155.30" width="2.70" height="33.60" fill="#202020"/>
<rect x="1008.20" y="155.30" width="2.70" height="33.60" fill="#202020"/>
<rect x="858.30" y="192.00" width="73.50" height="12.00" fill="#5fffe6"/>
<circle cx="865.30" cy="197.80" r="4.20" fill="none" stroke="#1b1b1b" stroke-width="0.75" stroke-opacity="0.85"/>
<polygon points="864.10,195.50 867.40,197.80 864.10,200.10" fill="#1b1b1b" fill-opacity="0.85"/>
<text x="874.60" y="200.30" font-size="7.25" fill="#1b1b1b" font-weight="bold" fill-opacity="0.8">Bass Drop</text>
<rect x="934.80" y="193.50" width="31.90" height="8.50" fill="#ffad56"/>
<text x="950.75" y="200.50" font-size="7.6" fill="#1a1206" text-anchor="middle" font-weight="bold">9</text>
<rect x="970.00" y="193.50" width="14.60" height="8.50" fill="#212121"/>
<text x="977.30" y="200.30" font-size="7.0" fill="#c0c0c0" text-anchor="middle" font-weight="bold">S</text>
<rect x="988.10" y="193.50" width="14.70" height="8.50" fill="#212121"/>
<circle cx="995.45" cy="197.80" r="2.70" fill="#c4c4c4"/>
<circle cx="994.95" cy="198.80" r="0.85" fill="#222"/>
<line x1="995.65" y1="198.80" x2="995.95" y2="196.10" stroke="#222" stroke-width="0.7"/>
<rect x="1005.20" y="193.60" width="2.70" height="8.80" fill="#202020"/>
<rect x="1008.20" y="193.60" width="2.70" height="8.80" fill="#202020"/>
<rect x="858.30" y="205.60" width="73.50" height="24.80" fill="#edfdab"/>
<circle cx="865.30" cy="211.40" r="4.20" fill="none" stroke="#1b1b1b" stroke-width="0.75" stroke-opacity="0.85"/>
<polygon points="863.00,210.30 867.60,210.30 865.30,213.30" fill="#1b1b1b" fill-opacity="0.85"/>
<text x="874.60" y="213.90" font-size="7.25" fill="#1b1b1b" font-weight="bold" fill-opacity="0.8">Synth Riser</text>
<rect x="934.80" y="207.10" width="31.90" height="8.50" fill="#ffad56"/>
<text x="950.75" y="214.10" font-size="7.6" fill="#1a1206" text-anchor="middle" font-weight="bold">10</text>
<rect x="970.00" y="207.10" width="14.60" height="8.50" fill="#212121"/>
<text x="977.30" y="213.90" font-size="7.0" fill="#c0c0c0" text-anchor="middle" font-weight="bold">S</text>
<rect x="988.10" y="207.10" width="14.70" height="8.50" fill="#212121"/>
<circle cx="995.45" cy="211.40" r="2.70" fill="#c4c4c4"/>
<circle cx="994.95" cy="212.40" r="0.85" fill="#222"/>
<line x1="995.65" y1="212.40" x2="995.95" y2="209.70" stroke="#222" stroke-width="0.7"/>
<rect x="934.80" y="219.20" width="31.90" height="8.50" fill="#212121"/>
<rect x="935.30" y="219.70" width="11.74" height="7.50" fill="#0f7b8d"/>
<text x="951.25" y="226.30" font-size="7.4" fill="#c8c8c8" text-anchor="middle">-18.0</text>
<rect x="970.00" y="219.20" width="32.80" height="8.50" fill="#212121"/>
<text x="986.40" y="226.20" font-size="7.0" fill="#c0c0c0" text-anchor="middle" font-weight="bold">C</text>
<rect x="1005.20" y="207.20" width="2.70" height="21.60" fill="#202020"/>
<rect x="1008.20" y="207.20" width="2.70" height="21.60" fill="#202020"/>
<rect x="858.30" y="231.90" width="73.50" height="37.00" fill="#f8f17c"/>
<circle cx="865.30" cy="237.70" r="4.20" fill="none" stroke="#1b1b1b" stroke-width="0.75" stroke-opacity="0.85"/>
<polygon points="863.00,236.60 867.60,236.60 865.30,239.60" fill="#1b1b1b" fill-opacity="0.85"/>
<text x="874.60" y="240.20" font-size="7.25" fill="#1b1b1b" font-weight="bold" fill-opacity="0.8">Keys</text>
<rect x="934.80" y="233.40" width="31.90" height="8.50" fill="#ffad56"/>
<text x="950.75" y="240.40" font-size="7.6" fill="#1a1206" text-anchor="middle" font-weight="bold">11</text>
<rect x="970.00" y="233.40" width="14.60" height="8.50" fill="#212121"/>
<text x="977.30" y="240.20" font-size="7.0" fill="#c0c0c0" text-anchor="middle" font-weight="bold">S</text>
<rect x="988.10" y="233.40" width="14.70" height="8.50" fill="#212121"/>
<circle cx="995.45" cy="237.70" r="2.70" fill="#c4c4c4"/>
<circle cx="994.95" cy="238.70" r="0.85" fill="#222"/>
<line x1="995.65" y1="238.70" x2="995.95" y2="236.00" stroke="#222" stroke-width="0.7"/>
<rect x="934.80" y="245.50" width="31.90" height="8.50" fill="#212121"/>
<rect x="935.30" y="246.00" width="21.01" height="7.50" fill="#0f7b8d"/>
<text x="951.25" y="252.60" font-size="7.4" fill="#c8c8c8" text-anchor="middle">-6.6</text>
<rect x="970.00" y="245.50" width="32.80" height="8.50" fill="#212121"/>
<text x="986.40" y="252.50" font-size="7.0" fill="#c0c0c0" text-anchor="middle" font-weight="bold">C</text>
<rect x="934.40" y="257.50" width="21.10" height="8.20" fill="#212121"/>
<line x1="939.75" y1="261.70" x2="942.05" y2="261.70" stroke="#c8c8c8" stroke-width="0.8"/>
<text x="941.85" y="265.30" font-size="11.5" fill="#c8c8c8" font-family='"DejaVu Sans", sans-serif'>∞</text>
<rect x="958.00" y="257.50" width="20.80" height="8.20" fill="#212121"/>
<line x1="963.20" y1="261.70" x2="965.50" y2="261.70" stroke="#c8c8c8" stroke-width="0.8"/>
<text x="965.30" y="265.30" font-size="11.5" fill="#c8c8c8" font-family='"DejaVu Sans", sans-serif'>∞</text>
<rect x="1005.20" y="233.50" width="2.70" height="33.80" fill="#202020"/>
<rect x="1008.20" y="233.50" width="2.70" height="33.80" fill="#202020"/>
<rect x="858.30" y="270.50" width="73.50" height="11.90" fill="#ffa374"/>
<circle cx="865.30" cy="276.30" r="4.20" fill="none" stroke="#1b1b1b" stroke-width="0.75" stroke-opacity="0.85"/>
<line x1="863.50" y1="274.90" x2="867.10" y2="274.90" stroke="#1b1b1b" stroke-width="0.75" stroke-opacity="0.85"/>
<line x1="863.50" y1="276.30" x2="867.10" y2="276.30" stroke="#1b1b1b" stroke-width="0.75" stroke-opacity="0.85"/>
<line x1="863.50" y1="277.70" x2="867.10" y2="277.70" stroke="#1b1b1b" stroke-width="0.75" stroke-opacity="0.85"/>
<text x="873.60" y="278.80" font-size="7.25" fill="#1b1b1b" font-weight="bold" fill-opacity="0.8">Pads</text>
<rect x="934.80" y="272.00" width="31.90" height="8.50" fill="#ffad56"/>
<text x="950.75" y="279.00" font-size="7.6" fill="#1a1206" text-anchor="middle" font-weight="bold">12</text>
<rect x="970.00" y="272.00" width="14.60" height="8.50" fill="#212121"/>
<text x="977.30" y="278.80" font-size="7.0" fill="#c0c0c0" text-anchor="middle" font-weight="bold">S</text>
<rect x="1005.20" y="272.10" width="2.70" height="8.70" fill="#202020"/>
<rect x="1008.20" y="272.10" width="2.70" height="8.70" fill="#202020"/>
<rect x="858.30" y="283.90" width="73.50" height="36.80" fill="#ff94a6"/>
<circle cx="865.30" cy="289.70" r="4.20" fill="none" stroke="#1b1b1b" stroke-width="0.75" stroke-opacity="0.85"/>
<polygon points="863.00,288.60 867.60,288.60 865.30,291.60" fill="#1b1b1b" fill-opacity="0.85"/>
<text x="874.60" y="292.20" font-size="7.25" fill="#1b1b1b" font-weight="bold" fill-opacity="0.8">Ambience</text>
<rect x="934.80" y="285.40" width="31.90" height="8.50" fill="#ffad56"/>
<text x="950.75" y="292.40" font-size="7.6" fill="#1a1206" text-anchor="middle" font-weight="bold">16</text>
<rect x="970.00" y="285.40" width="14.60" height="8.50" fill="#212121"/>
<text x="977.30" y="292.20" font-size="7.0" fill="#c0c0c0" text-anchor="middle" font-weight="bold">S</text>
<rect x="988.10" y="285.40" width="14.70" height="8.50" fill="#212121"/>
<circle cx="995.45" cy="289.70" r="2.50" fill="#7a7a7a"/>
<rect x="934.80" y="297.50" width="31.90" height="8.50" fill="#212121"/>
<rect x="935.30" y="298.00" width="19.16" height="7.50" fill="#0f7b8d"/>
<text x="951.25" y="304.60" font-size="7.4" fill="#c8c8c8" text-anchor="middle">-8.3</text>
<rect x="970.00" y="297.50" width="32.80" height="8.50" fill="#212121"/>
<text x="986.40" y="304.50" font-size="7.0" fill="#c0c0c0" text-anchor="middle" font-weight="bold">C</text>
<rect x="934.40" y="309.50" width="21.10" height="8.20" fill="#212121"/>
<line x1="939.75" y1="313.70" x2="942.05" y2="313.70" stroke="#c8c8c8" stroke-width="0.8"/>
<text x="941.85" y="317.30" font-size="11.5" fill="#c8c8c8" font-family='"DejaVu Sans", sans-serif'>∞</text>
<rect x="958.00" y="309.50" width="20.80" height="8.20" fill="#212121"/>
<line x1="963.20" y1="313.70" x2="965.50" y2="313.70" stroke="#c8c8c8" stroke-width="0.8"/>
<text x="965.30" y="317.30" font-size="11.5" fill="#c8c8c8" font-family='"DejaVu Sans", sans-serif'>∞</text>
<rect x="1005.20" y="285.50" width="2.70" height="33.60" fill="#202020"/>
<rect x="1008.20" y="285.50" width="2.70" height="33.60" fill="#202020"/>
<rect x="858.30" y="322.30" width="73.50" height="11.80" fill="#ff94a6"/>
<circle cx="865.30" cy="328.10" r="4.20" fill="none" stroke="#1b1b1b" stroke-width="0.75" stroke-opacity="0.85"/>
<polygon points="864.10,325.80 867.40,328.10 864.10,330.40" fill="#1b1b1b" fill-opacity="0.85"/>
<text x="874.60" y="330.60" font-size="7.25" fill="#1b1b1b" font-weight="bold" fill-opacity="0.8">Drone</text>
<rect x="934.80" y="323.80" width="31.90" height="8.50" fill="#ffad56"/>
<text x="950.75" y="330.80" font-size="7.6" fill="#1a1206" text-anchor="middle" font-weight="bold">17</text>
<rect x="970.00" y="323.80" width="14.60" height="8.50" fill="#212121"/>
<text x="977.30" y="330.60" font-size="7.0" fill="#c0c0c0" text-anchor="middle" font-weight="bold">S</text>
<rect x="988.10" y="323.80" width="14.70" height="8.50" fill="#212121"/>
<circle cx="995.45" cy="328.10" r="2.50" fill="#7a7a7a"/>
<rect x="1005.20" y="323.90" width="2.70" height="8.60" fill="#202020"/>
<rect x="1008.20" y="323.90" width="2.70" height="8.60" fill="#202020"/>
<rect x="858.30" y="335.70" width="73.50" height="11.80" fill="#d86de5"/>
<circle cx="865.30" cy="341.50" r="4.20" fill="none" stroke="#1b1b1b" stroke-width="0.75" stroke-opacity="0.85"/>
<polygon points="864.10,339.20 867.40,341.50 864.10,343.80" fill="#1b1b1b" fill-opacity="0.85"/>
<text x="874.60" y="344.00" font-size="7.25" fill="#1b1b1b" font-weight="bold" fill-opacity="0.8">FX</text>
<rect x="934.80" y="337.20" width="31.90" height="8.50" fill="#ffad56"/>
<text x="950.75" y="344.20" font-size="7.6" fill="#1a1206" text-anchor="middle" font-weight="bold">18</text>
<rect x="970.00" y="337.20" width="14.60" height="8.50" fill="#212121"/>
<text x="977.30" y="344.00" font-size="7.0" fill="#c0c0c0" text-anchor="middle" font-weight="bold">S</text>
<rect x="988.10" y="337.20" width="14.70" height="8.50" fill="#212121"/>
<circle cx="995.45" cy="341.50" r="2.50" fill="#7a7a7a"/>
<rect x="1005.20" y="337.30" width="2.70" height="8.60" fill="#202020"/>
<rect x="1008.20" y="337.30" width="2.70" height="8.60" fill="#202020"/>
<rect x="858.30" y="349.20" width="73.50" height="11.70" fill="#d86de5"/>
<circle cx="865.30" cy="355.00" r="4.20" fill="none" stroke="#1b1b1b" stroke-width="0.75" stroke-opacity="0.85"/>
<polygon points="864.10,352.70 867.40,355.00 864.10,357.30" fill="#1b1b1b" fill-opacity="0.85"/>
<text x="874.60" y="357.50" font-size="7.25" fill="#1b1b1b" font-weight="bold" fill-opacity="0.8">Zap</text>
<rect x="934.80" y="350.70" width="31.90" height="8.50" fill="#ffad56"/>
<text x="950.75" y="357.70" font-size="7.6" fill="#1a1206" text-anchor="middle" font-weight="bold">19</text>
<rect x="970.00" y="350.70" width="14.60" height="8.50" fill="#212121"/>
<text x="977.30" y="357.50" font-size="7.0" fill="#c0c0c0" text-anchor="middle" font-weight="bold">S</text>
<rect x="988.10" y="350.70" width="14.70" height="8.50" fill="#212121"/>
<circle cx="995.45" cy="355.00" r="2.70" fill="#c4c4c4"/>
<circle cx="994.95" cy="356.00" r="0.85" fill="#222"/>
<line x1="995.65" y1="356.00" x2="995.95" y2="353.30" stroke="#222" stroke-width="0.7"/>
<rect x="1005.20" y="350.80" width="2.70" height="8.50" fill="#202020"/>
<rect x="1008.20" y="350.80" width="2.70" height="8.50" fill="#202020"/>
<rect x="1005.20" y="81.40" width="2.70" height="17.20" fill="#14e658"/>
<rect x="1008.20" y="81.40" width="2.70" height="17.20" fill="#14e658"/>
<rect x="1007.90" y="81.40" width="0.30" height="17.20" fill="#14e658" fill-opacity="0.7"/>
<rect x="1005.20" y="71.40" width="5.70" height="0.70" fill="#c9961e"/>
<rect x="1005.20" y="112.40" width="2.70" height="9.10" fill="#a9a81d"/>
<rect x="1008.20" y="112.40" width="2.70" height="9.10" fill="#a9a81d"/>
<rect x="1005.20" y="121.50" width="2.70" height="15.60" fill="#25c84a"/>
<rect x="1008.20" y="121.50" width="2.70" height="15.60" fill="#25c84a"/>
<rect x="1007.90" y="121.50" width="0.30" height="15.60" fill="#25c84a" fill-opacity="0.7"/>
<rect x="1005.20" y="126.50" width="2.70" height="10.60" fill="#14e658"/>
<rect x="1008.20" y="126.50" width="2.70" height="10.60" fill="#14e658"/>
<rect x="1007.90" y="126.50" width="0.30" height="10.60" fill="#14e658" fill-opacity="0.7"/>
<rect x="1005.20" y="148.20" width="2.70" height="2.20" fill="#14e658"/>
<rect x="1008.20" y="148.90" width="2.70" height="1.50" fill="#14e658"/>
<rect x="1007.90" y="148.90" width="0.30" height="1.50" fill="#14e658" fill-opacity="0.7"/>
<rect x="1005.20" y="144.60" width="2.70" height="0.70" fill="#14e658"/>
<rect x="1008.20" y="146.20" width="2.70" height="0.70" fill="#14e658"/>
<rect x="1005.20" y="170.30" width="2.70" height="18.60" fill="#14e658"/>
<rect x="1008.20" y="170.30" width="2.70" height="18.60" fill="#14e658"/>
<rect x="1007.90" y="170.30" width="0.30" height="18.60" fill="#14e658" fill-opacity="0.7"/>
<rect x="1005.20" y="164.30" width="5.70" height="0.80" fill="#d6c01c"/>
<rect x="1005.20" y="220.50" width="2.70" height="8.30" fill="#14e658"/>
<rect x="1008.20" y="220.00" width="2.70" height="8.80" fill="#14e658"/>
<rect x="1007.90" y="220.50" width="0.30" height="8.30" fill="#14e658" fill-opacity="0.7"/>
<rect x="1005.20" y="219.40" width="5.70" height="3.10" fill="#25c84a"/>
<rect x="1005.20" y="266.60" width="5.70" height="0.70" fill="#14e658"/>
<rect x="1005.20" y="239.20" width="2.70" height="0.70" fill="#62d03a"/>
<rect x="1008.20" y="236.00" width="2.70" height="0.70" fill="#b7c72a"/>
<rect x="1005.20" y="277.20" width="2.70" height="3.60" fill="#14e658"/>
<rect x="1008.20" y="276.60" width="2.70" height="4.20" fill="#14e658"/>
<rect x="1007.90" y="277.20" width="0.30" height="3.60" fill="#14e658" fill-opacity="0.7"/>
<rect x="1005.20" y="273.00" width="2.70" height="0.70" fill="#b7c72a"/>
<rect x="1008.20" y="273.80" width="2.70" height="0.70" fill="#b7c72a"/>
<rect x="1005.20" y="309.50" width="2.70" height="9.60" fill="#14e658"/>
<rect x="1008.20" y="310.50" width="2.70" height="8.60" fill="#14e658"/>
<rect x="1007.90" y="310.50" width="0.30" height="8.60" fill="#14e658" fill-opacity="0.7"/>
<rect x="1005.20" y="305.20" width="5.70" height="4.50" fill="#25b846"/>
<rect x="1005.20" y="303.40" width="5.70" height="0.60" fill="#14e658"/>
<rect x="1005.20" y="327.50" width="2.70" height="5.00" fill="#14e658"/>
<rect x="1008.20" y="327.00" width="2.70" height="5.50" fill="#14e658"/>
<rect x="1007.90" y="327.50" width="0.30" height="5.00" fill="#14e658" fill-opacity="0.7"/>
<rect x="1005.20" y="340.00" width="2.70" height="5.90" fill="#14e658"/>
<rect x="1008.20" y="339.50" width="2.70" height="6.40" fill="#14e658"/>
<rect x="1007.90" y="340.00" width="0.30" height="5.90" fill="#14e658" fill-opacity="0.7"/>
<rect x="1005.20" y="354.50" width="2.70" height="4.80" fill="#14e658"/>
<rect x="1008.20" y="354.00" width="2.70" height="5.30" fill="#14e658"/>
<rect x="1007.90" y="354.50" width="0.30" height="4.80" fill="#14e658" fill-opacity="0.7"/>
<rect x="858.30" y="379.70" width="73.50" height="12.30" fill="#ffffff"/>
<rect x="932.60" y="379.70" width="85.40" height="12.30" fill="#363636"/>
<circle cx="865.30" cy="385.60" r="4.20" fill="none" stroke="#1b1b1b" stroke-width="0.75" stroke-opacity="0.85"/>
<polygon points="864.10,383.30 867.40,385.60 864.10,387.90" fill="#1b1b1b" fill-opacity="0.85"/>
<text x="876.30" y="388.10" font-size="7.25" fill="#1b1b1b" font-weight="bold" fill-opacity="0.8">Main</text>
<rect x="934.80" y="381.20" width="31.90" height="8.40" fill="#212121"/>
<rect x="935.30" y="381.70" width="25.90" height="7.40" fill="#0f7b8d"/>
<text x="950.50" y="388.30" font-size="7.4" fill="#c8c8c8" text-anchor="middle">0</text>
<rect x="970.00" y="381.20" width="32.80" height="8.40" fill="#212121"/>
<rect x="970.50" y="381.70" width="26.80" height="7.40" fill="#3f6fc6"/>
<text x="986.20" y="388.30" font-size="7.4" fill="#d8d8d8" text-anchor="middle">0</text>
<rect x="1005.20" y="381.30" width="2.70" height="9.30" fill="#202020"/>
<rect x="1005.20" y="384.40" width="2.70" height="6.20" fill="#14e658"/>
<rect x="1008.20" y="381.30" width="2.70" height="9.30" fill="#202020"/>
<rect x="1008.20" y="384.40" width="2.70" height="6.20" fill="#14e658"/>
<rect x="1005.20" y="383.40" width="5.70" height="0.80" fill="#c0392b"/>
<line x1="444.30" y1="62.60" x2="444.30" y2="392.20" stroke="#b8b8b8" stroke-width="1.3"/>
<text x="856.00" y="390.30" font-size="12" fill="#7c7c7c" text-anchor="end" letter-spacing="0.7">1/2</text>
<rect x="6.30" y="392.60" width="1011.70" height="16.00" fill="#363636"/>
<rect x="6.30" y="408.60" width="1011.70" height="11.40" fill="#262626"/>
<line x1="13.20" y1="393.40" x2="13.20" y2="398.80" stroke="#8a8a8a" stroke-width="0.7"/>
<text x="14.90" y="401.00" font-size="7.5" fill="#a8a8a8">0:10</text>
<rect x="26.48" y="393.60" width="0.80" height="1.00" fill="#7c7c7c"/>
<rect x="40.17" y="393.60" width="0.80" height="1.00" fill="#7c7c7c"/>
<rect x="53.85" y="393.60" width="0.80" height="1.00" fill="#7c7c7c"/>
<rect x="67.54" y="393.60" width="0.80" height="1.00" fill="#7c7c7c"/>
<line x1="81.62" y1="393.40" x2="81.62" y2="398.80" stroke="#8a8a8a" stroke-width="0.7"/>
<text x="83.33" y="401.00" font-size="7.5" fill="#a8a8a8">0:15</text>
<rect x="94.91" y="393.60" width="0.80" height="1.00" fill="#7c7c7c"/>
<rect x="108.59" y="393.60" width="0.80" height="1.00" fill="#7c7c7c"/>
<rect x="122.28" y="393.60" width="0.80" height="1.00" fill="#7c7c7c"/>
<rect x="135.97" y="393.60" width="0.80" height="1.00" fill="#7c7c7c"/>
<line x1="150.05" y1="393.40" x2="150.05" y2="398.80" stroke="#8a8a8a" stroke-width="0.7"/>
<text x="151.75" y="401.00" font-size="7.5" fill="#a8a8a8">0:20</text>
<rect x="163.33" y="393.60" width="0.80" height="1.00" fill="#7c7c7c"/>
<rect x="177.02" y="393.60" width="0.80" height="1.00" fill="#7c7c7c"/>
<rect x="190.70" y="393.60" width="0.80" height="1.00" fill="#7c7c7c"/>
<rect x="204.39" y="393.60" width="0.80" height="1.00" fill="#7c7c7c"/>
<line x1="218.47" y1="393.40" x2="218.47" y2="398.80" stroke="#8a8a8a" stroke-width="0.7"/>
<text x="220.17" y="401.00" font-size="7.5" fill="#a8a8a8">0:25</text>
<rect x="231.76" y="393.60" width="0.80" height="1.00" fill="#7c7c7c"/>
<rect x="245.44" y="393.60" width="0.80" height="1.00" fill="#7c7c7c"/>
<rect x="259.13" y="393.60" width="0.80" height="1.00" fill="#7c7c7c"/>
<rect x="272.81" y="393.60" width="0.80" height="1.00" fill="#7c7c7c"/>
<line x1="286.90" y1="393.40" x2="286.90" y2="398.80" stroke="#8a8a8a" stroke-width="0.7"/>
<text x="288.60" y="401.00" font-size="7.5" fill="#a8a8a8">0:30</text>
<rect x="300.19" y="393.60" width="0.80" height="1.00" fill="#7c7c7c"/>
<rect x="313.87" y="393.60" width="0.80" height="1.00" fill="#7c7c7c"/>
<rect x="327.56" y="393.60" width="0.80" height="1.00" fill="#7c7c7c"/>
<rect x="341.24" y="393.60" width="0.80" height="1.00" fill="#7c7c7c"/>
<line x1="355.32" y1="393.40" x2="355.32" y2="398.80" stroke="#8a8a8a" stroke-width="0.7"/>
<text x="357.02" y="401.00" font-size="7.5" fill="#a8a8a8">0:35</text>
<rect x="368.61" y="393.60" width="0.80" height="1.00" fill="#7c7c7c"/>
<rect x="382.30" y="393.60" width="0.80" height="1.00" fill="#7c7c7c"/>
<rect x="395.98" y="393.60" width="0.80" height="1.00" fill="#7c7c7c"/>
<rect x="409.67" y="393.60" width="0.80" height="1.00" fill="#7c7c7c"/>
<line x1="423.75" y1="393.40" x2="423.75" y2="398.80" stroke="#8a8a8a" stroke-width="0.7"/>
<text x="425.45" y="401.00" font-size="7.5" fill="#a8a8a8">0:40</text>
<rect x="437.04" y="393.60" width="0.80" height="1.00" fill="#7c7c7c"/>
<rect x="450.72" y="393.60" width="0.80" height="1.00" fill="#7c7c7c"/>
<rect x="464.41" y="393.60" width="0.80" height="1.00" fill="#7c7c7c"/>
<rect x="478.09" y="393.60" width="0.80" height="1.00" fill="#7c7c7c"/>
<line x1="492.18" y1="393.40" x2="492.18" y2="398.80" stroke="#8a8a8a" stroke-width="0.7"/>
<text x="493.88" y="401.00" font-size="7.5" fill="#a8a8a8">0:45</text>
<rect x="505.46" y="393.60" width="0.80" height="1.00" fill="#7c7c7c"/>
<rect x="519.15" y="393.60" width="0.80" height="1.00" fill="#7c7c7c"/>
<rect x="532.83" y="393.60" width="0.80" height="1.00" fill="#7c7c7c"/>
<rect x="546.52" y="393.60" width="0.80" height="1.00" fill="#7c7c7c"/>
<line x1="560.60" y1="393.40" x2="560.60" y2="398.80" stroke="#8a8a8a" stroke-width="0.7"/>
<text x="562.30" y="401.00" font-size="7.5" fill="#a8a8a8">0:50</text>
<rect x="573.89" y="393.60" width="0.80" height="1.00" fill="#7c7c7c"/>
<rect x="587.57" y="393.60" width="0.80" height="1.00" fill="#7c7c7c"/>
<rect x="601.26" y="393.60" width="0.80" height="1.00" fill="#7c7c7c"/>
<rect x="614.94" y="393.60" width="0.80" height="1.00" fill="#7c7c7c"/>
<line x1="629.03" y1="393.40" x2="629.03" y2="398.80" stroke="#8a8a8a" stroke-width="0.7"/>
<text x="630.73" y="401.00" font-size="7.5" fill="#a8a8a8">0:55</text>
<rect x="642.31" y="393.60" width="0.80" height="1.00" fill="#7c7c7c"/>
<rect x="656.00" y="393.60" width="0.80" height="1.00" fill="#7c7c7c"/>
<rect x="669.68" y="393.60" width="0.80" height="1.00" fill="#7c7c7c"/>
<rect x="683.37" y="393.60" width="0.80" height="1.00" fill="#7c7c7c"/>
<line x1="697.45" y1="393.40" x2="697.45" y2="398.80" stroke="#8a8a8a" stroke-width="0.7"/>
<text x="699.15" y="401.00" font-size="7.5" fill="#a8a8a8">1:00</text>
<rect x="710.74" y="393.60" width="0.80" height="1.00" fill="#7c7c7c"/>
<rect x="724.42" y="393.60" width="0.80" height="1.00" fill="#7c7c7c"/>
<rect x="738.11" y="393.60" width="0.80" height="1.00" fill="#7c7c7c"/>
<rect x="751.79" y="393.60" width="0.80" height="1.00" fill="#7c7c7c"/>
<line x1="765.88" y1="393.40" x2="765.88" y2="398.80" stroke="#8a8a8a" stroke-width="0.7"/>
<text x="767.58" y="401.00" font-size="7.5" fill="#a8a8a8">1:05</text>
<rect x="779.16" y="393.60" width="0.80" height="1.00" fill="#7c7c7c"/>
<rect x="792.85" y="393.60" width="0.80" height="1.00" fill="#7c7c7c"/>
<rect x="806.53" y="393.60" width="0.80" height="1.00" fill="#7c7c7c"/>
<rect x="820.22" y="393.60" width="0.80" height="1.00" fill="#7c7c7c"/>
<line x1="834.30" y1="393.40" x2="834.30" y2="398.80" stroke="#8a8a8a" stroke-width="0.7"/>
<text x="836.00" y="401.00" font-size="7.5" fill="#a8a8a8">1:10</text>
<rect x="847.59" y="393.60" width="0.80" height="1.00" fill="#7c7c7c"/>
<polygon points="324.04,396.90 328.84,396.90 326.44,394.00" fill="#12c3d6"/>
<rect x="858.10" y="396.20" width="10.80" height="8.60" fill="#1e1e1e"/>
<path d="M860.10,399.90V401.10M861.00,399.20V401.80M861.90,398.30V402.70M862.80,397.30V403.70M863.70,397.90V403.10M864.60,397.50V403.50M865.50,398.70V402.30M866.40,399.50V401.50M867.30,400.00V401.00" fill="none" stroke="#7a7a7a" stroke-width="0.8"/>
<rect x="871.10" y="396.20" width="24.60" height="8.60" fill="#1e1e1e"/>
<rect x="871.80" y="396.90" width="23.20" height="7.20" fill="#323232"/>
<text x="883.40" y="403.30" font-size="7.6" fill="#c0c0c0" text-anchor="middle">1.00x</text>
<rect x="907.30" y="396.20" width="10.50" height="8.60" fill="#1e1e1e"/>
<text x="912.50" y="403.30" font-size="7.4" fill="#cfcfcf" text-anchor="middle" font-weight="bold">H</text>
<rect x="920.10" y="396.20" width="10.70" height="8.60" fill="#1e1e1e"/>
<text x="925.50" y="403.30" font-size="7.4" fill="#cfcfcf" text-anchor="middle" font-weight="bold">W</text>
</svg></div>
<div id="mixer" class="sec" style="top:409px;height:197px"><svg width="1024" height="197" viewBox="0 409 1024 197">
<defs><linearGradient id="gyel" x1="0" y1="0" x2="0" y2="1"><stop offset="0" stop-color="#c3b41a"/><stop offset="0.7" stop-color="#8fa722"/><stop offset="1" stop-color="#4fa838"/></linearGradient><linearGradient id="gmain" x1="0" y1="0" x2="0" y2="1"><stop offset="0" stop-color="#b4d81e"/><stop offset="1" stop-color="#3fe044"/></linearGradient></defs>
<clipPath id="mixclip"><rect x="6.3" y="400" width="1011.7" height="204" rx="3.2"/></clipPath>
<g clip-path="url(#mixclip)">
<rect x="6.30" y="409.50" width="1011.70" height="194.50" fill="#262626"/>
<rect x="6.30" y="409.00" width="1011.70" height="11.00" fill="#262626"/>
<rect x="6.20" y="410.30" width="66.30" height="12.00" fill="#95a7ff"/>
<text x="8.70" y="419.00" font-size="7.25" fill="#1b1b1b" font-weight="bold" fill-opacity="0.8">Drums</text>
<circle cx="66.20" cy="416.30" r="4.20" fill="none" stroke="#1b1b1b" stroke-width="0.75" stroke-opacity="0.85"/>
<polygon points="63.90,415.20 68.50,415.20 66.20,418.20" fill="#1b1b1b" fill-opacity="0.85"/>
<rect x="6.20" y="423.60" width="66.30" height="174.00" fill="#363636"/>
<rect x="6.20" y="599.30" width="66.30" height="4.70" fill="#95a7ff"/>
<rect x="11.30" y="427.30" width="24.80" height="9.00" rx="4.5" fill="#1c1c1c"/>
<text x="23.70" y="434.60" font-size="7.4" fill="#c6c6c6" text-anchor="middle">-6.44</text>
<rect x="11.30" y="440.40" width="24.80" height="8.50" fill="#1c1c1c"/>
<rect x="12.00" y="441.10" width="23.40" height="7.10" fill="#2b2b2b"/>
<text x="23.70" y="447.30" font-size="7.4" fill="#c6c6c6" text-anchor="middle">-1.0</text>
<rect x="48.00" y="427.30" width="8.40" height="165.70" rx="0.6" fill="#333333"/>
<rect x="48.00" y="427.30" width="4.00" height="165.70" fill="#1b1b1b"/>
<rect x="48.00" y="511.80" width="4.00" height="81.20" fill="#14e858"/>
<rect x="48.00" y="462.00" width="4.00" height="1.00" fill="#d99a1a"/>
<rect x="52.40" y="427.30" width="4.00" height="165.70" fill="#1b1b1b"/>
<rect x="52.40" y="511.80" width="4.00" height="81.20" fill="#14e858"/>
<rect x="52.40" y="462.00" width="4.00" height="1.00" fill="#d99a1a"/>
<rect x="52.00" y="511.80" width="0.40" height="81.20" fill="#17983a"/>
<line x1="48.00" y1="444.60" x2="56.40" y2="444.60" stroke="#8a8a8a" stroke-width="0.7"/>
<line x1="43.90" y1="428.30" x2="46.10" y2="428.30" stroke="#8a8a8a" stroke-width="0.6"/>
<text x="59.00" y="433.30" font-size="6.9" fill="#a4a4a4">6</text>
<line x1="43.90" y1="444.60" x2="46.10" y2="444.60" stroke="#8a8a8a" stroke-width="0.6"/>
<text x="59.00" y="447.10" font-size="6.9" fill="#a4a4a4">0</text>
<line x1="43.90" y1="461.00" x2="46.10" y2="461.00" stroke="#8a8a8a" stroke-width="0.6"/>
<text x="59.00" y="463.50" font-size="6.9" fill="#a4a4a4">6</text>
<line x1="43.90" y1="477.50" x2="46.10" y2="477.50" stroke="#8a8a8a" stroke-width="0.6"/>
<text x="59.00" y="479.60" font-size="6.9" fill="#a4a4a4">12</text>
<line x1="43.90" y1="493.80" x2="46.10" y2="493.80" stroke="#8a8a8a" stroke-width="0.6"/>
<text x="59.00" y="496.00" font-size="6.9" fill="#a4a4a4">18</text>
<line x1="43.90" y1="510.20" x2="46.10" y2="510.20" stroke="#8a8a8a" stroke-width="0.6"/>
<text x="59.00" y="512.20" font-size="6.9" fill="#a4a4a4">24</text>
<line x1="43.90" y1="527.40" x2="46.10" y2="527.40" stroke="#8a8a8a" stroke-width="0.6"/>
<text x="59.00" y="529.10" font-size="6.9" fill="#a4a4a4">30</text>
<line x1="43.90" y1="541.30" x2="46.10" y2="541.30" stroke="#8a8a8a" stroke-width="0.6"/>
<text x="59.00" y="543.50" font-size="6.9" fill="#a4a4a4">36</text>
<line x1="43.90" y1="554.30" x2="46.10" y2="554.30" stroke="#8a8a8a" stroke-width="0.6"/>
<text x="59.00" y="556.20" font-size="6.9" fill="#a4a4a4">42</text>
<line x1="43.90" y1="564.70" x2="46.10" y2="564.70" stroke="#8a8a8a" stroke-width="0.6"/>
<text x="59.00" y="566.90" font-size="6.9" fill="#a4a4a4">48</text>
<line x1="43.90" y1="574.60" x2="46.10" y2="574.60" stroke="#8a8a8a" stroke-width="0.6"/>
<text x="59.00" y="577.10" font-size="6.9" fill="#a4a4a4">54</text>
<line x1="43.90" y1="584.10" x2="46.10" y2="584.10" stroke="#8a8a8a" stroke-width="0.6"/>
<text x="59.00" y="585.70" font-size="6.9" fill="#a4a4a4">60</text>
<line x1="43.90" y1="590.20" x2="46.10" y2="590.20" stroke="#8a8a8a" stroke-width="0.6"/>
<polygon points="38.80,443.10 47.00,447.50 38.80,451.90" fill="#c6c6c6"/>
<path d="M19.00,549.22 A8.2,8.2 0 1 1 28.40,549.22" fill="none" stroke="#141414" stroke-width="1.4"/>
<line x1="23.70" y1="542.90" x2="23.70" y2="533.70" stroke="#141414" stroke-width="1.2"/>
<polygon points="21.40,530.00 26.00,530.00 23.70,532.50" fill="#141414"/>
<rect x="15.90" y="553.50" width="15.90" height="15.50" fill="#1c1c1c"/>
<rect x="16.60" y="554.20" width="14.50" height="14.10" fill="#ffad56"/>
<text x="23.80" y="564.60" font-size="9.2" fill="#1a1206" text-anchor="middle" font-weight="bold">1</text>
<rect x="15.50" y="572.50" width="16.50" height="8.80" fill="#1c1c1c"/>
<text x="23.80" y="579.50" font-size="7.0" fill="#c0c0c0" text-anchor="middle" font-weight="bold">S</text>
<rect x="15.50" y="584.50" width="16.50" height="9.30" fill="#1c1c1c"/>
<circle cx="23.80" cy="589.20" r="2.70" fill="#c4c4c4"/>
<circle cx="23.30" cy="590.20" r="0.85" fill="#222"/>
<line x1="24.00" y1="590.20" x2="24.30" y2="587.50" stroke="#222" stroke-width="0.7"/>
<rect x="73.80" y="410.30" width="66.30" height="12.00" fill="#95a7ff"/>
<text x="76.30" y="419.00" font-size="7.25" fill="#1b1b1b" font-weight="bold" fill-opacity="0.8">Breaks</text>
<rect x="73.80" y="423.60" width="66.30" height="174.00" fill="#363636"/>
<rect x="73.80" y="599.30" width="66.30" height="4.70" fill="#95a7ff"/>
<rect x="78.90" y="427.30" width="24.80" height="9.00" rx="4.5" fill="#1c1c1c"/>
<text x="91.30" y="434.60" font-size="7.4" fill="#c6c6c6" text-anchor="middle">-10.2</text>
<rect x="78.90" y="440.40" width="24.80" height="8.50" fill="#1c1c1c"/>
<rect x="79.60" y="441.10" width="23.40" height="7.10" fill="#2b2b2b"/>
<text x="91.30" y="447.30" font-size="7.4" fill="#c6c6c6" text-anchor="middle">-9.4</text>
<rect x="115.60" y="427.30" width="8.40" height="165.70" rx="0.6" fill="#333333"/>
<rect x="115.60" y="427.30" width="4.00" height="165.70" fill="#1b1b1b"/>
<rect x="115.60" y="472.50" width="4.00" height="20.00" fill="url(#gyel)"/>
<rect x="115.60" y="492.50" width="4.00" height="21.30" fill="#27b048"/>
<rect x="115.60" y="513.80" width="4.00" height="79.20" fill="#14e858"/>
<rect x="120.00" y="427.30" width="4.00" height="165.70" fill="#1b1b1b"/>
<rect x="120.00" y="472.50" width="4.00" height="20.00" fill="url(#gyel)"/>
<rect x="120.00" y="492.50" width="4.00" height="21.30" fill="#27b048"/>
<rect x="120.00" y="513.80" width="4.00" height="79.20" fill="#14e858"/>
<rect x="119.60" y="472.50" width="0.40" height="120.50" fill="#17983a"/>
<line x1="115.60" y1="444.60" x2="124.00" y2="444.60" stroke="#8a8a8a" stroke-width="0.7"/>
<line x1="111.50" y1="428.30" x2="113.70" y2="428.30" stroke="#8a8a8a" stroke-width="0.6"/>
<text x="126.60" y="433.30" font-size="6.9" fill="#a4a4a4">6</text>
<line x1="111.50" y1="444.60" x2="113.70" y2="444.60" stroke="#8a8a8a" stroke-width="0.6"/>
<text x="126.60" y="447.10" font-size="6.9" fill="#a4a4a4">0</text>
<line x1="111.50" y1="461.00" x2="113.70" y2="461.00" stroke="#8a8a8a" stroke-width="0.6"/>
<text x="126.60" y="463.50" font-size="6.9" fill="#a4a4a4">6</text>
<line x1="111.50" y1="477.50" x2="113.70" y2="477.50" stroke="#8a8a8a" stroke-width="0.6"/>
<text x="126.60" y="479.60" font-size="6.9" fill="#a4a4a4">12</text>
<line x1="111.50" y1="493.80" x2="113.70" y2="493.80" stroke="#8a8a8a" stroke-width="0.6"/>
<text x="126.60" y="496.00" font-size="6.9" fill="#a4a4a4">18</text>
<line x1="111.50" y1="510.20" x2="113.70" y2="510.20" stroke="#8a8a8a" stroke-width="0.6"/>
<text x="126.60" y="512.20" font-size="6.9" fill="#a4a4a4">24</text>
<line x1="111.50" y1="527.40" x2="113.70" y2="527.40" stroke="#8a8a8a" stroke-width="0.6"/>
<text x="126.60" y="529.10" font-size="6.9" fill="#a4a4a4">30</text>
<line x1="111.50" y1="541.30" x2="113.70" y2="541.30" stroke="#8a8a8a" stroke-width="0.6"/>
<text x="126.60" y="543.50" font-size="6.9" fill="#a4a4a4">36</text>
<line x1="111.50" y1="554.30" x2="113.70" y2="554.30" stroke="#8a8a8a" stroke-width="0.6"/>
<text x="126.60" y="556.20" font-size="6.9" fill="#a4a4a4">42</text>
<line x1="111.50" y1="564.70" x2="113.70" y2="564.70" stroke="#8a8a8a" stroke-width="0.6"/>
<text x="126.60" y="566.90" font-size="6.9" fill="#a4a4a4">48</text>
<line x1="111.50" y1="574.60" x2="113.70" y2="574.60" stroke="#8a8a8a" stroke-width="0.6"/>
<text x="126.60" y="577.10" font-size="6.9" fill="#a4a4a4">54</text>
<line x1="111.50" y1="584.10" x2="113.70" y2="584.10" stroke="#8a8a8a" stroke-width="0.6"/>
<text x="126.60" y="585.70" font-size="6.9" fill="#a4a4a4">60</text>
<line x1="111.50" y1="590.20" x2="113.70" y2="590.20" stroke="#8a8a8a" stroke-width="0.6"/>
<polygon points="106.40,465.60 114.60,470.00 106.40,474.40" fill="#c6c6c6"/>
<path d="M86.60,549.22 A8.2,8.2 0 1 1 96.00,549.22" fill="none" stroke="#141414" stroke-width="1.4"/>
<line x1="91.30" y1="542.90" x2="91.30" y2="533.70" stroke="#141414" stroke-width="1.2"/>
<polygon points="89.00,530.00 93.60,530.00 91.30,532.50" fill="#141414"/>
<rect x="83.50" y="553.50" width="15.90" height="15.50" fill="#1c1c1c"/>
<rect x="84.20" y="554.20" width="14.50" height="14.10" fill="#ffad56"/>
<text x="91.40" y="564.60" font-size="9.2" fill="#1a1206" text-anchor="middle" font-weight="bold">2</text>
<rect x="83.10" y="572.50" width="16.50" height="8.80" fill="#1c1c1c"/>
<text x="91.40" y="579.50" font-size="7.0" fill="#c0c0c0" text-anchor="middle" font-weight="bold">S</text>
<rect x="83.10" y="584.50" width="16.50" height="9.30" fill="#1c1c1c"/>
<circle cx="91.40" cy="589.20" r="2.50" fill="#7a7a7a"/>
<rect x="141.40" y="410.30" width="66.30" height="12.00" fill="#8bc5ff"/>
<text x="143.90" y="419.00" font-size="7.25" fill="#1b1b1b" font-weight="bold" fill-opacity="0.8">Percussion</text>
<circle cx="201.40" cy="416.30" r="4.20" fill="none" stroke="#1b1b1b" stroke-width="0.75" stroke-opacity="0.85"/>
<line x1="199.60" y1="414.90" x2="203.20" y2="414.90" stroke="#1b1b1b" stroke-width="0.75" stroke-opacity="0.85"/>
<line x1="199.60" y1="416.30" x2="203.20" y2="416.30" stroke="#1b1b1b" stroke-width="0.75" stroke-opacity="0.85"/>
<line x1="199.60" y1="417.70" x2="203.20" y2="417.70" stroke="#1b1b1b" stroke-width="0.75" stroke-opacity="0.85"/>
<rect x="141.40" y="423.60" width="66.30" height="174.00" fill="#363636"/>
<rect x="141.40" y="599.30" width="66.30" height="4.70" fill="#8bc5ff"/>
<rect x="146.50" y="427.30" width="24.80" height="9.00" rx="4.5" fill="#1c1c1c"/>
<text x="158.90" y="434.60" font-size="7.4" fill="#c6c6c6" text-anchor="middle">-21.2</text>
<rect x="146.50" y="440.40" width="24.80" height="8.50" fill="#1c1c1c"/>
<rect x="147.20" y="441.10" width="23.40" height="7.10" fill="#2b2b2b"/>
<text x="158.90" y="447.30" font-size="7.4" fill="#c6c6c6" text-anchor="middle">0</text>
<rect x="183.20" y="427.30" width="8.40" height="165.70" rx="0.6" fill="#333333"/>
<rect x="183.20" y="427.30" width="4.00" height="165.70" fill="#1b1b1b"/>
<rect x="183.20" y="554.50" width="4.00" height="10.50" fill="#23b046"/>
<rect x="183.20" y="565.00" width="4.00" height="28.00" fill="#14e858"/>
<rect x="183.20" y="502.50" width="4.00" height="1.00" fill="#14e858"/>
<rect x="187.60" y="427.30" width="4.00" height="165.70" fill="#1b1b1b"/>
<rect x="187.60" y="559.50" width="4.00" height="11.50" fill="#23b046"/>
<rect x="187.60" y="571.00" width="4.00" height="22.00" fill="#14e858"/>
<rect x="187.60" y="526.50" width="4.00" height="1.00" fill="#14e858"/>
<rect x="187.20" y="559.50" width="0.40" height="33.50" fill="#17983a"/>
<line x1="183.20" y1="444.60" x2="191.60" y2="444.60" stroke="#8a8a8a" stroke-width="0.7"/>
<line x1="179.10" y1="428.30" x2="181.30" y2="428.30" stroke="#8a8a8a" stroke-width="0.6"/>
<text x="194.20" y="433.30" font-size="6.9" fill="#a4a4a4">6</text>
<line x1="179.10" y1="444.60" x2="181.30" y2="444.60" stroke="#8a8a8a" stroke-width="0.6"/>
<text x="194.20" y="447.10" font-size="6.9" fill="#a4a4a4">0</text>
<line x1="179.10" y1="461.00" x2="181.30" y2="461.00" stroke="#8a8a8a" stroke-width="0.6"/>
<text x="194.20" y="463.50" font-size="6.9" fill="#a4a4a4">6</text>
<line x1="179.10" y1="477.50" x2="181.30" y2="477.50" stroke="#8a8a8a" stroke-width="0.6"/>
<text x="194.20" y="479.60" font-size="6.9" fill="#a4a4a4">12</text>
<line x1="179.10" y1="493.80" x2="181.30" y2="493.80" stroke="#8a8a8a" stroke-width="0.6"/>
<text x="194.20" y="496.00" font-size="6.9" fill="#a4a4a4">18</text>
<line x1="179.10" y1="510.20" x2="181.30" y2="510.20" stroke="#8a8a8a" stroke-width="0.6"/>
<text x="194.20" y="512.20" font-size="6.9" fill="#a4a4a4">24</text>
<line x1="179.10" y1="527.40" x2="181.30" y2="527.40" stroke="#8a8a8a" stroke-width="0.6"/>
<text x="194.20" y="529.10" font-size="6.9" fill="#a4a4a4">30</text>
<line x1="179.10" y1="541.30" x2="181.30" y2="541.30" stroke="#8a8a8a" stroke-width="0.6"/>
<text x="194.20" y="543.50" font-size="6.9" fill="#a4a4a4">36</text>
<line x1="179.10" y1="554.30" x2="181.30" y2="554.30" stroke="#8a8a8a" stroke-width="0.6"/>
<text x="194.20" y="556.20" font-size="6.9" fill="#a4a4a4">42</text>
<line x1="179.10" y1="564.70" x2="181.30" y2="564.70" stroke="#8a8a8a" stroke-width="0.6"/>
<text x="194.20" y="566.90" font-size="6.9" fill="#a4a4a4">48</text>
<line x1="179.10" y1="574.60" x2="181.30" y2="574.60" stroke="#8a8a8a" stroke-width="0.6"/>
<text x="194.20" y="577.10" font-size="6.9" fill="#a4a4a4">54</text>
<line x1="179.10" y1="584.10" x2="181.30" y2="584.10" stroke="#8a8a8a" stroke-width="0.6"/>
<text x="194.20" y="585.70" font-size="6.9" fill="#a4a4a4">60</text>
<line x1="179.10" y1="590.20" x2="181.30" y2="590.20" stroke="#8a8a8a" stroke-width="0.6"/>
<polygon points="174.00,440.60 182.20,445.00 174.00,449.40" fill="#c6c6c6"/>
<path d="M154.20,549.22 A8.2,8.2 0 1 1 163.60,549.22" fill="none" stroke="#141414" stroke-width="1.4"/>
<line x1="158.90" y1="542.90" x2="158.90" y2="533.70" stroke="#141414" stroke-width="1.2"/>
<polygon points="156.60,530.00 161.20,530.00 158.90,532.50" fill="#141414"/>
<rect x="151.10" y="553.50" width="15.90" height="15.50" fill="#1c1c1c"/>
<rect x="151.80" y="554.20" width="14.50" height="14.10" fill="#ffad56"/>
<text x="159.00" y="564.60" font-size="9.2" fill="#1a1206" text-anchor="middle" font-weight="bold">3</text>
<rect x="150.70" y="572.50" width="16.50" height="8.80" fill="#1c1c1c"/>
<text x="159.00" y="579.50" font-size="7.0" fill="#c0c0c0" text-anchor="middle" font-weight="bold">S</text>
<rect x="209.00" y="410.30" width="66.30" height="12.00" fill="#5fffe6"/>
<text x="211.50" y="419.00" font-size="7.25" fill="#1b1b1b" font-weight="bold" fill-opacity="0.8">Bass</text>
<rect x="209.00" y="423.60" width="66.30" height="174.00" fill="#464646"/>
<rect x="209.00" y="599.30" width="66.30" height="4.70" fill="#5fffe6"/>
<rect x="214.10" y="427.30" width="24.80" height="9.00" rx="4.5" fill="#1c1c1c"/>
<text x="226.50" y="434.60" font-size="7.4" fill="#c6c6c6" text-anchor="middle">-10.8</text>
<rect x="214.10" y="440.40" width="24.80" height="8.50" fill="#1c1c1c"/>
<rect x="214.80" y="441.10" width="23.40" height="7.10" fill="#2b2b2b"/>
<text x="226.50" y="447.30" font-size="7.4" fill="#c6c6c6" text-anchor="middle">-7.7</text>
<rect x="250.80" y="427.30" width="8.40" height="165.70" rx="0.6" fill="#333333"/>
<rect x="250.80" y="427.30" width="4.00" height="165.70" fill="#1b1b1b"/>
<rect x="250.80" y="501.80" width="4.00" height="91.20" fill="#14e858"/>
<rect x="250.80" y="473.80" width="4.00" height="1.00" fill="#d6c41a"/>
<rect x="255.20" y="427.30" width="4.00" height="165.70" fill="#1b1b1b"/>
<rect x="255.20" y="501.80" width="4.00" height="91.20" fill="#14e858"/>
<rect x="255.20" y="473.80" width="4.00" height="1.00" fill="#d6c41a"/>
<rect x="254.80" y="501.80" width="0.40" height="91.20" fill="#17983a"/>
<line x1="250.80" y1="444.60" x2="259.20" y2="444.60" stroke="#8a8a8a" stroke-width="0.7"/>
<line x1="246.70" y1="428.30" x2="248.90" y2="428.30" stroke="#8a8a8a" stroke-width="0.6"/>
<text x="261.80" y="433.30" font-size="6.9" fill="#a4a4a4">6</text>
<line x1="246.70" y1="444.60" x2="248.90" y2="444.60" stroke="#8a8a8a" stroke-width="0.6"/>
<text x="261.80" y="447.10" font-size="6.9" fill="#a4a4a4">0</text>
<line x1="246.70" y1="461.00" x2="248.90" y2="461.00" stroke="#8a8a8a" stroke-width="0.6"/>
<text x="261.80" y="463.50" font-size="6.9" fill="#a4a4a4">6</text>
<line x1="246.70" y1="477.50" x2="248.90" y2="477.50" stroke="#8a8a8a" stroke-width="0.6"/>
<text x="261.80" y="479.60" font-size="6.9" fill="#a4a4a4">12</text>
<line x1="246.70" y1="493.80" x2="248.90" y2="493.80" stroke="#8a8a8a" stroke-width="0.6"/>
<text x="261.80" y="496.00" font-size="6.9" fill="#a4a4a4">18</text>
<line x1="246.70" y1="510.20" x2="248.90" y2="510.20" stroke="#8a8a8a" stroke-width="0.6"/>
<text x="261.80" y="512.20" font-size="6.9" fill="#a4a4a4">24</text>
<line x1="246.70" y1="527.40" x2="248.90" y2="527.40" stroke="#8a8a8a" stroke-width="0.6"/>
<text x="261.80" y="529.10" font-size="6.9" fill="#a4a4a4">30</text>
<line x1="246.70" y1="541.30" x2="248.90" y2="541.30" stroke="#8a8a8a" stroke-width="0.6"/>
<text x="261.80" y="543.50" font-size="6.9" fill="#a4a4a4">36</text>
<line x1="246.70" y1="554.30" x2="248.90" y2="554.30" stroke="#8a8a8a" stroke-width="0.6"/>
<text x="261.80" y="556.20" font-size="6.9" fill="#a4a4a4">42</text>
<line x1="246.70" y1="564.70" x2="248.90" y2="564.70" stroke="#8a8a8a" stroke-width="0.6"/>
<text x="261.80" y="566.90" font-size="6.9" fill="#a4a4a4">48</text>
<line x1="246.70" y1="574.60" x2="248.90" y2="574.60" stroke="#8a8a8a" stroke-width="0.6"/>
<text x="261.80" y="577.10" font-size="6.9" fill="#a4a4a4">54</text>
<line x1="246.70" y1="584.10" x2="248.90" y2="584.10" stroke="#8a8a8a" stroke-width="0.6"/>
<text x="261.80" y="585.70" font-size="6.9" fill="#a4a4a4">60</text>
<line x1="246.70" y1="590.20" x2="248.90" y2="590.20" stroke="#8a8a8a" stroke-width="0.6"/>
<polygon points="241.60,461.90 249.80,466.30 241.60,470.70" fill="#c6c6c6"/>
<path d="M221.80,549.22 A8.2,8.2 0 1 1 231.20,549.22" fill="none" stroke="#141414" stroke-width="1.4"/>
<line x1="226.50" y1="542.90" x2="226.50" y2="533.70" stroke="#141414" stroke-width="1.2"/>
<polygon points="224.20,530.00 228.80,530.00 226.50,532.50" fill="#141414"/>
<rect x="218.70" y="553.50" width="15.90" height="15.50" fill="#1c1c1c"/>
<rect x="219.40" y="554.20" width="14.50" height="14.10" fill="#ffad56"/>
<text x="226.60" y="564.60" font-size="9.2" fill="#1a1206" text-anchor="middle" font-weight="bold">8</text>
<rect x="218.30" y="572.50" width="16.50" height="8.80" fill="#1c1c1c"/>
<text x="226.60" y="579.50" font-size="7.0" fill="#c0c0c0" text-anchor="middle" font-weight="bold">S</text>
<rect x="218.30" y="584.50" width="16.50" height="9.30" fill="#1c1c1c"/>
<circle cx="226.60" cy="589.20" r="2.70" fill="#c4c4c4"/>
<circle cx="226.10" cy="590.20" r="0.85" fill="#222"/>
<line x1="226.80" y1="590.20" x2="227.10" y2="587.50" stroke="#222" stroke-width="0.7"/>
<rect x="276.60" y="410.30" width="66.30" height="12.00" fill="#5fffe6"/>
<text x="279.10" y="419.00" font-size="7.25" fill="#1b1b1b" font-weight="bold" fill-opacity="0.8">Bass Drop</text>
<circle cx="336.60" cy="416.30" r="4.20" fill="none" stroke="#1b1b1b" stroke-width="0.75" stroke-opacity="0.85"/>
<polygon points="334.30,415.20 338.90,415.20 336.60,418.20" fill="#1b1b1b" fill-opacity="0.85"/>
<rect x="276.60" y="423.60" width="66.30" height="174.00" fill="#363636"/>
<rect x="276.60" y="599.30" width="66.30" height="4.70" fill="#5fffe6"/>
<rect x="281.70" y="427.30" width="24.80" height="9.00" rx="4.5" fill="#1c1c1c"/>
<line x1="288.90" y1="432.10" x2="291.20" y2="432.10" stroke="#c6c6c6" stroke-width="0.8"/>
<text x="291.00" y="435.70" font-size="11.5" fill="#c6c6c6" font-family='"DejaVu Sans", sans-serif'>∞</text>
<rect x="281.70" y="440.40" width="24.80" height="8.50" fill="#1c1c1c"/>
<rect x="282.40" y="441.10" width="23.40" height="7.10" fill="#2b2b2b"/>
<text x="294.10" y="447.30" font-size="7.4" fill="#c6c6c6" text-anchor="middle">-0.2</text>
<rect x="318.40" y="427.30" width="8.40" height="165.70" rx="0.6" fill="#333333"/>
<rect x="318.40" y="427.30" width="4.00" height="165.70" fill="#1b1b1b"/>
<rect x="322.80" y="427.30" width="4.00" height="165.70" fill="#1b1b1b"/>
<line x1="318.40" y1="444.60" x2="326.80" y2="444.60" stroke="#8a8a8a" stroke-width="0.7"/>
<line x1="314.30" y1="428.30" x2="316.50" y2="428.30" stroke="#8a8a8a" stroke-width="0.6"/>
<text x="329.40" y="433.30" font-size="6.9" fill="#a4a4a4">6</text>
<line x1="314.30" y1="444.60" x2="316.50" y2="444.60" stroke="#8a8a8a" stroke-width="0.6"/>
<text x="329.40" y="447.10" font-size="6.9" fill="#a4a4a4">0</text>
<line x1="314.30" y1="461.00" x2="316.50" y2="461.00" stroke="#8a8a8a" stroke-width="0.6"/>
<text x="329.40" y="463.50" font-size="6.9" fill="#a4a4a4">6</text>
<line x1="314.30" y1="477.50" x2="316.50" y2="477.50" stroke="#8a8a8a" stroke-width="0.6"/>
<text x="329.40" y="479.60" font-size="6.9" fill="#a4a4a4">12</text>
<line x1="314.30" y1="493.80" x2="316.50" y2="493.80" stroke="#8a8a8a" stroke-width="0.6"/>
<text x="329.40" y="496.00" font-size="6.9" fill="#a4a4a4">18</text>
<line x1="314.30" y1="510.20" x2="316.50" y2="510.20" stroke="#8a8a8a" stroke-width="0.6"/>
<text x="329.40" y="512.20" font-size="6.9" fill="#a4a4a4">24</text>
<line x1="314.30" y1="527.40" x2="316.50" y2="527.40" stroke="#8a8a8a" stroke-width="0.6"/>
<text x="329.40" y="529.10" font-size="6.9" fill="#a4a4a4">30</text>
<line x1="314.30" y1="541.30" x2="316.50" y2="541.30" stroke="#8a8a8a" stroke-width="0.6"/>
<text x="329.40" y="543.50" font-size="6.9" fill="#a4a4a4">36</text>
<line x1="314.30" y1="554.30" x2="316.50" y2="554.30" stroke="#8a8a8a" stroke-width="0.6"/>
<text x="329.40" y="556.20" font-size="6.9" fill="#a4a4a4">42</text>
<line x1="314.30" y1="564.70" x2="316.50" y2="564.70" stroke="#8a8a8a" stroke-width="0.6"/>
<text x="329.40" y="566.90" font-size="6.9" fill="#a4a4a4">48</text>
<line x1="314.30" y1="574.60" x2="316.50" y2="574.60" stroke="#8a8a8a" stroke-width="0.6"/>
<text x="329.40" y="577.10" font-size="6.9" fill="#a4a4a4">54</text>
<line x1="314.30" y1="584.10" x2="316.50" y2="584.10" stroke="#8a8a8a" stroke-width="0.6"/>
<text x="329.40" y="585.70" font-size="6.9" fill="#a4a4a4">60</text>
<line x1="314.30" y1="590.20" x2="316.50" y2="590.20" stroke="#8a8a8a" stroke-width="0.6"/>
<polygon points="309.20,441.10 317.40,445.50 309.20,449.90" fill="#c6c6c6"/>
<path d="M289.40,549.22 A8.2,8.2 0 1 1 298.80,549.22" fill="none" stroke="#141414" stroke-width="1.4"/>
<line x1="294.10" y1="542.90" x2="294.10" y2="533.70" stroke="#141414" stroke-width="1.2"/>
<polygon points="291.80,530.00 296.40,530.00 294.10,532.50" fill="#141414"/>
<rect x="286.30" y="553.50" width="15.90" height="15.50" fill="#1c1c1c"/>
<rect x="287.00" y="554.20" width="14.50" height="14.10" fill="#ffad56"/>
<text x="294.20" y="564.60" font-size="9.2" fill="#1a1206" text-anchor="middle" font-weight="bold">9</text>
<rect x="285.90" y="572.50" width="16.50" height="8.80" fill="#1c1c1c"/>
<text x="294.20" y="579.50" font-size="7.0" fill="#c0c0c0" text-anchor="middle" font-weight="bold">S</text>
<rect x="285.90" y="584.50" width="16.50" height="9.30" fill="#1c1c1c"/>
<circle cx="294.20" cy="589.20" r="2.70" fill="#c4c4c4"/>
<circle cx="293.70" cy="590.20" r="0.85" fill="#222"/>
<line x1="294.40" y1="590.20" x2="294.70" y2="587.50" stroke="#222" stroke-width="0.7"/>
<rect x="344.20" y="410.30" width="66.30" height="12.00" fill="#edfdab"/>
<text x="346.70" y="419.00" font-size="7.25" fill="#1b1b1b" font-weight="bold" fill-opacity="0.8">Synth Riser</text>
<circle cx="404.20" cy="416.30" r="4.20" fill="none" stroke="#1b1b1b" stroke-width="0.75" stroke-opacity="0.85"/>
<polygon points="401.90,415.20 406.50,415.20 404.20,418.20" fill="#1b1b1b" fill-opacity="0.85"/>
<rect x="344.20" y="423.60" width="66.30" height="174.00" fill="#363636"/>
<rect x="344.20" y="599.30" width="66.30" height="4.70" fill="#edfdab"/>
<rect x="349.30" y="427.30" width="24.80" height="9.00" rx="4.5" fill="#1c1c1c"/>
<text x="361.70" y="434.60" font-size="7.4" fill="#c6c6c6" text-anchor="middle">-28.2</text>
<rect x="349.30" y="440.40" width="24.80" height="8.50" fill="#1c1c1c"/>
<rect x="350.00" y="441.10" width="23.40" height="7.10" fill="#2b2b2b"/>
<text x="361.70" y="447.30" font-size="7.4" fill="#c6c6c6" text-anchor="middle">-18.0</text>
<rect x="386.00" y="427.30" width="8.40" height="165.70" rx="0.6" fill="#333333"/>
<rect x="386.00" y="427.30" width="4.00" height="165.70" fill="#1b1b1b"/>
<rect x="386.00" y="533.00" width="4.00" height="10.80" fill="#23b046"/>
<rect x="386.00" y="543.80" width="4.00" height="49.20" fill="#14e858"/>
<rect x="386.00" y="522.80" width="4.00" height="1.00" fill="#14e858"/>
<rect x="390.40" y="427.30" width="4.00" height="165.70" fill="#1b1b1b"/>
<rect x="390.40" y="530.50" width="4.00" height="13.30" fill="#23b046"/>
<rect x="390.40" y="543.80" width="4.00" height="49.20" fill="#14e858"/>
<rect x="390.40" y="521.30" width="4.00" height="1.00" fill="#14e858"/>
<rect x="390.00" y="533.00" width="0.40" height="60.00" fill="#17983a"/>
<line x1="386.00" y1="444.60" x2="394.40" y2="444.60" stroke="#8a8a8a" stroke-width="0.7"/>
<line x1="381.90" y1="428.30" x2="384.10" y2="428.30" stroke="#8a8a8a" stroke-width="0.6"/>
<text x="397.00" y="433.30" font-size="6.9" fill="#a4a4a4">6</text>
<line x1="381.90" y1="444.60" x2="384.10" y2="444.60" stroke="#8a8a8a" stroke-width="0.6"/>
<text x="397.00" y="447.10" font-size="6.9" fill="#a4a4a4">0</text>
<line x1="381.90" y1="461.00" x2="384.10" y2="461.00" stroke="#8a8a8a" stroke-width="0.6"/>
<text x="397.00" y="463.50" font-size="6.9" fill="#a4a4a4">6</text>
<line x1="381.90" y1="477.50" x2="384.10" y2="477.50" stroke="#8a8a8a" stroke-width="0.6"/>
<text x="397.00" y="479.60" font-size="6.9" fill="#a4a4a4">12</text>
<line x1="381.90" y1="493.80" x2="384.10" y2="493.80" stroke="#8a8a8a" stroke-width="0.6"/>
<text x="397.00" y="496.00" font-size="6.9" fill="#a4a4a4">18</text>
<line x1="381.90" y1="510.20" x2="384.10" y2="510.20" stroke="#8a8a8a" stroke-width="0.6"/>
<text x="397.00" y="512.20" font-size="6.9" fill="#a4a4a4">24</text>
<line x1="381.90" y1="527.40" x2="384.10" y2="527.40" stroke="#8a8a8a" stroke-width="0.6"/>
<text x="397.00" y="529.10" font-size="6.9" fill="#a4a4a4">30</text>
<line x1="381.90" y1="541.30" x2="384.10" y2="541.30" stroke="#8a8a8a" stroke-width="0.6"/>
<text x="397.00" y="543.50" font-size="6.9" fill="#a4a4a4">36</text>
<line x1="381.90" y1="554.30" x2="384.10" y2="554.30" stroke="#8a8a8a" stroke-width="0.6"/>
<text x="397.00" y="556.20" font-size="6.9" fill="#a4a4a4">42</text>
<line x1="381.90" y1="564.70" x2="384.10" y2="564.70" stroke="#8a8a8a" stroke-width="0.6"/>
<text x="397.00" y="566.90" font-size="6.9" fill="#a4a4a4">48</text>
<line x1="381.90" y1="574.60" x2="384.10" y2="574.60" stroke="#8a8a8a" stroke-width="0.6"/>
<text x="397.00" y="577.10" font-size="6.9" fill="#a4a4a4">54</text>
<line x1="381.90" y1="584.10" x2="384.10" y2="584.10" stroke="#8a8a8a" stroke-width="0.6"/>
<text x="397.00" y="585.70" font-size="6.9" fill="#a4a4a4">60</text>
<line x1="381.90" y1="590.20" x2="384.10" y2="590.20" stroke="#8a8a8a" stroke-width="0.6"/>
<polygon points="376.80,489.40 385.00,493.80 376.80,498.20" fill="#c6c6c6"/>
<path d="M357.00,549.22 A8.2,8.2 0 1 1 366.40,549.22" fill="none" stroke="#141414" stroke-width="1.4"/>
<line x1="361.70" y1="542.90" x2="361.70" y2="533.70" stroke="#141414" stroke-width="1.2"/>
<polygon points="359.40,530.00 364.00,530.00 361.70,532.50" fill="#141414"/>
<rect x="353.90" y="553.50" width="15.90" height="15.50" fill="#1c1c1c"/>
<rect x="354.60" y="554.20" width="14.50" height="14.10" fill="#ffad56"/>
<text x="361.80" y="564.60" font-size="9.2" fill="#1a1206" text-anchor="middle" font-weight="bold">10</text>
<rect x="353.50" y="572.50" width="16.50" height="8.80" fill="#1c1c1c"/>
<text x="361.80" y="579.50" font-size="7.0" fill="#c0c0c0" text-anchor="middle" font-weight="bold">S</text>
<rect x="353.50" y="584.50" width="16.50" height="9.30" fill="#1c1c1c"/>
<circle cx="361.80" cy="589.20" r="2.70" fill="#c4c4c4"/>
<circle cx="361.30" cy="590.20" r="0.85" fill="#222"/>
<line x1="362.00" y1="590.20" x2="362.30" y2="587.50" stroke="#222" stroke-width="0.7"/>
<rect x="411.80" y="410.30" width="66.30" height="12.00" fill="#f8f17c"/>
<text x="414.30" y="419.00" font-size="7.25" fill="#1b1b1b" font-weight="bold" fill-opacity="0.8">Keys</text>
<rect x="411.80" y="423.60" width="66.30" height="174.00" fill="#363636"/>
<rect x="411.80" y="599.30" width="66.30" height="4.70" fill="#f8f17c"/>
<rect x="416.90" y="427.30" width="24.80" height="9.00" rx="4.5" fill="#1c1c1c"/>
<text x="429.30" y="434.60" font-size="7.4" fill="#c6c6c6" text-anchor="middle">-16.0</text>
<rect x="416.90" y="440.40" width="24.80" height="8.50" fill="#1c1c1c"/>
<rect x="417.60" y="441.10" width="23.40" height="7.10" fill="#2b2b2b"/>
<text x="429.30" y="447.30" font-size="7.4" fill="#c6c6c6" text-anchor="middle">-6.6</text>
<rect x="453.60" y="427.30" width="8.40" height="165.70" rx="0.6" fill="#333333"/>
<rect x="453.60" y="427.30" width="4.00" height="165.70" fill="#1b1b1b"/>
<rect x="453.60" y="591.50" width="4.00" height="1.50" fill="#14e858"/>
<rect x="453.60" y="502.50" width="4.00" height="1.00" fill="#14e858"/>
<rect x="458.00" y="427.30" width="4.00" height="165.70" fill="#1b1b1b"/>
<rect x="458.00" y="591.50" width="4.00" height="1.50" fill="#14e858"/>
<rect x="458.00" y="487.80" width="4.00" height="1.00" fill="#8fd02a"/>
<rect x="457.60" y="591.50" width="0.40" height="1.50" fill="#17983a"/>
<line x1="453.60" y1="444.60" x2="462.00" y2="444.60" stroke="#8a8a8a" stroke-width="0.7"/>
<line x1="449.50" y1="428.30" x2="451.70" y2="428.30" stroke="#8a8a8a" stroke-width="0.6"/>
<text x="464.60" y="433.30" font-size="6.9" fill="#a4a4a4">6</text>
<line x1="449.50" y1="444.60" x2="451.70" y2="444.60" stroke="#8a8a8a" stroke-width="0.6"/>
<text x="464.60" y="447.10" font-size="6.9" fill="#a4a4a4">0</text>
<line x1="449.50" y1="461.00" x2="451.70" y2="461.00" stroke="#8a8a8a" stroke-width="0.6"/>
<text x="464.60" y="463.50" font-size="6.9" fill="#a4a4a4">6</text>
<line x1="449.50" y1="477.50" x2="451.70" y2="477.50" stroke="#8a8a8a" stroke-width="0.6"/>
<text x="464.60" y="479.60" font-size="6.9" fill="#a4a4a4">12</text>
<line x1="449.50" y1="493.80" x2="451.70" y2="493.80" stroke="#8a8a8a" stroke-width="0.6"/>
<text x="464.60" y="496.00" font-size="6.9" fill="#a4a4a4">18</text>
<line x1="449.50" y1="510.20" x2="451.70" y2="510.20" stroke="#8a8a8a" stroke-width="0.6"/>
<text x="464.60" y="512.20" font-size="6.9" fill="#a4a4a4">24</text>
<line x1="449.50" y1="527.40" x2="451.70" y2="527.40" stroke="#8a8a8a" stroke-width="0.6"/>
<text x="464.60" y="529.10" font-size="6.9" fill="#a4a4a4">30</text>
<line x1="449.50" y1="541.30" x2="451.70" y2="541.30" stroke="#8a8a8a" stroke-width="0.6"/>
<text x="464.60" y="543.50" font-size="6.9" fill="#a4a4a4">36</text>
<line x1="449.50" y1="554.30" x2="451.70" y2="554.30" stroke="#8a8a8a" stroke-width="0.6"/>
<text x="464.60" y="556.20" font-size="6.9" fill="#a4a4a4">42</text>
<line x1="449.50" y1="564.70" x2="451.70" y2="564.70" stroke="#8a8a8a" stroke-width="0.6"/>
<text x="464.60" y="566.90" font-size="6.9" fill="#a4a4a4">48</text>
<line x1="449.50" y1="574.60" x2="451.70" y2="574.60" stroke="#8a8a8a" stroke-width="0.6"/>
<text x="464.60" y="577.10" font-size="6.9" fill="#a4a4a4">54</text>
<line x1="449.50" y1="584.10" x2="451.70" y2="584.10" stroke="#8a8a8a" stroke-width="0.6"/>
<text x="464.60" y="585.70" font-size="6.9" fill="#a4a4a4">60</text>
<line x1="449.50" y1="590.20" x2="451.70" y2="590.20" stroke="#8a8a8a" stroke-width="0.6"/>
<polygon points="444.40,458.60 452.60,463.00 444.40,467.40" fill="#c6c6c6"/>
<path d="M424.60,549.22 A8.2,8.2 0 1 1 434.00,549.22" fill="none" stroke="#141414" stroke-width="1.4"/>
<line x1="429.30" y1="542.90" x2="429.30" y2="533.70" stroke="#141414" stroke-width="1.2"/>
<polygon points="427.00,530.00 431.60,530.00 429.30,532.50" fill="#141414"/>
<rect x="421.50" y="553.50" width="15.90" height="15.50" fill="#1c1c1c"/>
<rect x="422.20" y="554.20" width="14.50" height="14.10" fill="#ffad56"/>
<text x="429.40" y="564.60" font-size="9.2" fill="#1a1206" text-anchor="middle" font-weight="bold">11</text>
<rect x="421.10" y="572.50" width="16.50" height="8.80" fill="#1c1c1c"/>
<text x="429.40" y="579.50" font-size="7.0" fill="#c0c0c0" text-anchor="middle" font-weight="bold">S</text>
<rect x="421.10" y="584.50" width="16.50" height="9.30" fill="#1c1c1c"/>
<circle cx="429.40" cy="589.20" r="2.70" fill="#c4c4c4"/>
<circle cx="428.90" cy="590.20" r="0.85" fill="#222"/>
<line x1="429.60" y1="590.20" x2="429.90" y2="587.50" stroke="#222" stroke-width="0.7"/>
<rect x="479.40" y="410.30" width="66.30" height="12.00" fill="#ffa374"/>
<text x="481.90" y="419.00" font-size="7.25" fill="#1b1b1b" font-weight="bold" fill-opacity="0.8">Pads</text>
<circle cx="539.40" cy="416.30" r="4.20" fill="none" stroke="#1b1b1b" stroke-width="0.75" stroke-opacity="0.85"/>
<line x1="537.60" y1="414.90" x2="541.20" y2="414.90" stroke="#1b1b1b" stroke-width="0.75" stroke-opacity="0.85"/>
<line x1="537.60" y1="416.30" x2="541.20" y2="416.30" stroke="#1b1b1b" stroke-width="0.75" stroke-opacity="0.85"/>
<line x1="537.60" y1="417.70" x2="541.20" y2="417.70" stroke="#1b1b1b" stroke-width="0.75" stroke-opacity="0.85"/>
<rect x="479.40" y="423.60" width="66.30" height="174.00" fill="#363636"/>
<rect x="479.40" y="599.30" width="66.30" height="4.70" fill="#ffa374"/>
<rect x="484.50" y="427.30" width="24.80" height="9.00" rx="4.5" fill="#1c1c1c"/>
<text x="496.90" y="434.60" font-size="7.4" fill="#c6c6c6" text-anchor="middle">-14.4</text>
<rect x="484.50" y="440.40" width="24.80" height="8.50" fill="#1c1c1c"/>
<rect x="485.20" y="441.10" width="23.40" height="7.10" fill="#2b2b2b"/>
<text x="496.90" y="447.30" font-size="7.4" fill="#c6c6c6" text-anchor="middle">0</text>
<rect x="521.20" y="427.30" width="8.40" height="165.70" rx="0.6" fill="#333333"/>
<rect x="521.20" y="427.30" width="4.00" height="165.70" fill="#1b1b1b"/>
<rect x="521.20" y="541.30" width="4.00" height="51.70" fill="#14e858"/>
<rect x="521.20" y="483.80" width="4.00" height="1.00" fill="#b9c72a"/>
<rect x="525.60" y="427.30" width="4.00" height="165.70" fill="#1b1b1b"/>
<rect x="525.60" y="538.30" width="4.00" height="54.70" fill="#14e858"/>
<rect x="525.60" y="488.80" width="4.00" height="1.00" fill="#8fd02a"/>
<rect x="525.20" y="541.30" width="0.40" height="51.70" fill="#17983a"/>
<line x1="521.20" y1="444.60" x2="529.60" y2="444.60" stroke="#8a8a8a" stroke-width="0.7"/>
<line x1="517.10" y1="428.30" x2="519.30" y2="428.30" stroke="#8a8a8a" stroke-width="0.6"/>
<text x="532.20" y="433.30" font-size="6.9" fill="#a4a4a4">6</text>
<line x1="517.10" y1="444.60" x2="519.30" y2="444.60" stroke="#8a8a8a" stroke-width="0.6"/>
<text x="532.20" y="447.10" font-size="6.9" fill="#a4a4a4">0</text>
<line x1="517.10" y1="461.00" x2="519.30" y2="461.00" stroke="#8a8a8a" stroke-width="0.6"/>
<text x="532.20" y="463.50" font-size="6.9" fill="#a4a4a4">6</text>
<line x1="517.10" y1="477.50" x2="519.30" y2="477.50" stroke="#8a8a8a" stroke-width="0.6"/>
<text x="532.20" y="479.60" font-size="6.9" fill="#a4a4a4">12</text>
<line x1="517.10" y1="493.80" x2="519.30" y2="493.80" stroke="#8a8a8a" stroke-width="0.6"/>
<text x="532.20" y="496.00" font-size="6.9" fill="#a4a4a4">18</text>
<line x1="517.10" y1="510.20" x2="519.30" y2="510.20" stroke="#8a8a8a" stroke-width="0.6"/>
<text x="532.20" y="512.20" font-size="6.9" fill="#a4a4a4">24</text>
<line x1="517.10" y1="527.40" x2="519.30" y2="527.40" stroke="#8a8a8a" stroke-width="0.6"/>
<text x="532.20" y="529.10" font-size="6.9" fill="#a4a4a4">30</text>
<line x1="517.10" y1="541.30" x2="519.30" y2="541.30" stroke="#8a8a8a" stroke-width="0.6"/>
<text x="532.20" y="543.50" font-size="6.9" fill="#a4a4a4">36</text>
<line x1="517.10" y1="554.30" x2="519.30" y2="554.30" stroke="#8a8a8a" stroke-width="0.6"/>
<text x="532.20" y="556.20" font-size="6.9" fill="#a4a4a4">42</text>
<line x1="517.10" y1="564.70" x2="519.30" y2="564.70" stroke="#8a8a8a" stroke-width="0.6"/>
<text x="532.20" y="566.90" font-size="6.9" fill="#a4a4a4">48</text>
<line x1="517.10" y1="574.60" x2="519.30" y2="574.60" stroke="#8a8a8a" stroke-width="0.6"/>
<text x="532.20" y="577.10" font-size="6.9" fill="#a4a4a4">54</text>
<line x1="517.10" y1="584.10" x2="519.30" y2="584.10" stroke="#8a8a8a" stroke-width="0.6"/>
<text x="532.20" y="585.70" font-size="6.9" fill="#a4a4a4">60</text>
<line x1="517.10" y1="590.20" x2="519.30" y2="590.20" stroke="#8a8a8a" stroke-width="0.6"/>
<polygon points="512.00,440.60 520.20,445.00 512.00,449.40" fill="#c6c6c6"/>
<path d="M492.20,549.22 A8.2,8.2 0 1 1 501.60,549.22" fill="none" stroke="#141414" stroke-width="1.4"/>
<line x1="496.90" y1="542.90" x2="496.90" y2="533.70" stroke="#141414" stroke-width="1.2"/>
<polygon points="494.60,530.00 499.20,530.00 496.90,532.50" fill="#141414"/>
<rect x="489.10" y="553.50" width="15.90" height="15.50" fill="#1c1c1c"/>
<rect x="489.80" y="554.20" width="14.50" height="14.10" fill="#ffad56"/>
<text x="497.00" y="564.60" font-size="9.2" fill="#1a1206" text-anchor="middle" font-weight="bold">12</text>
<rect x="488.70" y="572.50" width="16.50" height="8.80" fill="#1c1c1c"/>
<text x="497.00" y="579.50" font-size="7.0" fill="#c0c0c0" text-anchor="middle" font-weight="bold">S</text>
<rect x="547.00" y="410.30" width="66.30" height="12.00" fill="#ff94a6"/>
<text x="549.50" y="419.00" font-size="7.25" fill="#1b1b1b" font-weight="bold" fill-opacity="0.8">Ambience</text>
<rect x="547.00" y="423.60" width="66.30" height="174.00" fill="#363636"/>
<rect x="547.00" y="599.30" width="66.30" height="4.70" fill="#ff94a6"/>
<rect x="552.10" y="427.30" width="24.80" height="9.00" rx="4.5" fill="#1c1c1c"/>
<text x="564.50" y="434.60" font-size="7.4" fill="#c6c6c6" text-anchor="middle">-29.7</text>
<rect x="552.10" y="440.40" width="24.80" height="8.50" fill="#1c1c1c"/>
<rect x="552.80" y="441.10" width="23.40" height="7.10" fill="#2b2b2b"/>
<text x="564.50" y="447.30" font-size="7.4" fill="#c6c6c6" text-anchor="middle">-8.3</text>
<rect x="588.80" y="427.30" width="8.40" height="165.70" rx="0.6" fill="#333333"/>
<rect x="588.80" y="427.30" width="4.00" height="165.70" fill="#1b1b1b"/>
<rect x="588.80" y="535.50" width="4.00" height="19.00" fill="#23b046"/>
<rect x="588.80" y="554.50" width="4.00" height="38.50" fill="#14e858"/>
<rect x="588.80" y="528.30" width="4.00" height="1.00" fill="#14e858"/>
<rect x="593.20" y="427.30" width="4.00" height="165.70" fill="#1b1b1b"/>
<rect x="593.20" y="540.50" width="4.00" height="14.00" fill="#23b046"/>
<rect x="593.20" y="554.50" width="4.00" height="38.50" fill="#14e858"/>
<rect x="593.20" y="525.80" width="4.00" height="1.00" fill="#14e858"/>
<rect x="592.80" y="540.50" width="0.40" height="52.50" fill="#17983a"/>
<line x1="588.80" y1="444.60" x2="597.20" y2="444.60" stroke="#8a8a8a" stroke-width="0.7"/>
<line x1="584.70" y1="428.30" x2="586.90" y2="428.30" stroke="#8a8a8a" stroke-width="0.6"/>
<text x="599.80" y="433.30" font-size="6.9" fill="#a4a4a4">6</text>
<line x1="584.70" y1="444.60" x2="586.90" y2="444.60" stroke="#8a8a8a" stroke-width="0.6"/>
<text x="599.80" y="447.10" font-size="6.9" fill="#a4a4a4">0</text>
<line x1="584.70" y1="461.00" x2="586.90" y2="461.00" stroke="#8a8a8a" stroke-width="0.6"/>
<text x="599.80" y="463.50" font-size="6.9" fill="#a4a4a4">6</text>
<line x1="584.70" y1="477.50" x2="586.90" y2="477.50" stroke="#8a8a8a" stroke-width="0.6"/>
<text x="599.80" y="479.60" font-size="6.9" fill="#a4a4a4">12</text>
<line x1="584.70" y1="493.80" x2="586.90" y2="493.80" stroke="#8a8a8a" stroke-width="0.6"/>
<text x="599.80" y="496.00" font-size="6.9" fill="#a4a4a4">18</text>
<line x1="584.70" y1="510.20" x2="586.90" y2="510.20" stroke="#8a8a8a" stroke-width="0.6"/>
<text x="599.80" y="512.20" font-size="6.9" fill="#a4a4a4">24</text>
<line x1="584.70" y1="527.40" x2="586.90" y2="527.40" stroke="#8a8a8a" stroke-width="0.6"/>
<text x="599.80" y="529.10" font-size="6.9" fill="#a4a4a4">30</text>
<line x1="584.70" y1="541.30" x2="586.90" y2="541.30" stroke="#8a8a8a" stroke-width="0.6"/>
<text x="599.80" y="543.50" font-size="6.9" fill="#a4a4a4">36</text>
<line x1="584.70" y1="554.30" x2="586.90" y2="554.30" stroke="#8a8a8a" stroke-width="0.6"/>
<text x="599.80" y="556.20" font-size="6.9" fill="#a4a4a4">42</text>
<line x1="584.70" y1="564.70" x2="586.90" y2="564.70" stroke="#8a8a8a" stroke-width="0.6"/>
<text x="599.80" y="566.90" font-size="6.9" fill="#a4a4a4">48</text>
<line x1="584.70" y1="574.60" x2="586.90" y2="574.60" stroke="#8a8a8a" stroke-width="0.6"/>
<text x="599.80" y="577.10" font-size="6.9" fill="#a4a4a4">54</text>
<line x1="584.70" y1="584.10" x2="586.90" y2="584.10" stroke="#8a8a8a" stroke-width="0.6"/>
<text x="599.80" y="585.70" font-size="6.9" fill="#a4a4a4">60</text>
<line x1="584.70" y1="590.20" x2="586.90" y2="590.20" stroke="#8a8a8a" stroke-width="0.6"/>
<polygon points="579.60,463.10 587.80,467.50 579.60,471.90" fill="#c6c6c6"/>
<path d="M559.80,549.22 A8.2,8.2 0 1 1 569.20,549.22" fill="none" stroke="#141414" stroke-width="1.4"/>
<line x1="564.50" y1="542.90" x2="564.50" y2="533.70" stroke="#141414" stroke-width="1.2"/>
<polygon points="562.20,530.00 566.80,530.00 564.50,532.50" fill="#141414"/>
<rect x="556.70" y="553.50" width="15.90" height="15.50" fill="#1c1c1c"/>
<rect x="557.40" y="554.20" width="14.50" height="14.10" fill="#ffad56"/>
<text x="564.60" y="564.60" font-size="9.2" fill="#1a1206" text-anchor="middle" font-weight="bold">16</text>
<rect x="556.30" y="572.50" width="16.50" height="8.80" fill="#1c1c1c"/>
<text x="564.60" y="579.50" font-size="7.0" fill="#c0c0c0" text-anchor="middle" font-weight="bold">S</text>
<rect x="556.30" y="584.50" width="16.50" height="9.30" fill="#1c1c1c"/>
<circle cx="564.60" cy="589.20" r="2.50" fill="#7a7a7a"/>
<rect x="614.60" y="410.30" width="66.30" height="12.00" fill="#ff94a6"/>
<text x="617.10" y="419.00" font-size="7.25" fill="#1b1b1b" font-weight="bold" fill-opacity="0.8">Drone</text>
<rect x="614.60" y="423.60" width="66.30" height="174.00" fill="#363636"/>
<rect x="614.60" y="599.30" width="66.30" height="4.70" fill="#ff94a6"/>
<rect x="619.70" y="427.30" width="24.80" height="9.00" rx="4.5" fill="#1c1c1c"/>
<text x="632.10" y="434.60" font-size="7.4" fill="#c6c6c6" text-anchor="middle">-25.0</text>
<rect x="619.70" y="440.40" width="24.80" height="8.50" fill="#1c1c1c"/>
<rect x="620.40" y="441.10" width="23.40" height="7.10" fill="#2b2b2b"/>
<text x="632.10" y="447.30" font-size="7.4" fill="#c6c6c6" text-anchor="middle">-15.6</text>
<rect x="656.40" y="427.30" width="8.40" height="165.70" rx="0.6" fill="#333333"/>
<rect x="656.40" y="427.30" width="4.00" height="165.70" fill="#1b1b1b"/>
<rect x="656.40" y="520.00" width="4.00" height="23.00" fill="#23b046"/>
<rect x="656.40" y="543.00" width="4.00" height="50.00" fill="#14e858"/>
<rect x="660.80" y="427.30" width="4.00" height="165.70" fill="#1b1b1b"/>
<rect x="660.80" y="525.00" width="4.00" height="13.00" fill="#23b046"/>
<rect x="660.80" y="538.00" width="4.00" height="55.00" fill="#14e858"/>
<rect x="660.80" y="512.80" width="4.00" height="1.00" fill="#14e858"/>
<rect x="660.40" y="525.00" width="0.40" height="68.00" fill="#17983a"/>
<line x1="656.40" y1="444.60" x2="664.80" y2="444.60" stroke="#8a8a8a" stroke-width="0.7"/>
<line x1="652.30" y1="428.30" x2="654.50" y2="428.30" stroke="#8a8a8a" stroke-width="0.6"/>
<text x="667.40" y="433.30" font-size="6.9" fill="#a4a4a4">6</text>
<line x1="652.30" y1="444.60" x2="654.50" y2="444.60" stroke="#8a8a8a" stroke-width="0.6"/>
<text x="667.40" y="447.10" font-size="6.9" fill="#a4a4a4">0</text>
<line x1="652.30" y1="461.00" x2="654.50" y2="461.00" stroke="#8a8a8a" stroke-width="0.6"/>
<text x="667.40" y="463.50" font-size="6.9" fill="#a4a4a4">6</text>
<line x1="652.30" y1="477.50" x2="654.50" y2="477.50" stroke="#8a8a8a" stroke-width="0.6"/>
<text x="667.40" y="479.60" font-size="6.9" fill="#a4a4a4">12</text>
<line x1="652.30" y1="493.80" x2="654.50" y2="493.80" stroke="#8a8a8a" stroke-width="0.6"/>
<text x="667.40" y="496.00" font-size="6.9" fill="#a4a4a4">18</text>
<line x1="652.30" y1="510.20" x2="654.50" y2="510.20" stroke="#8a8a8a" stroke-width="0.6"/>
<text x="667.40" y="512.20" font-size="6.9" fill="#a4a4a4">24</text>
<line x1="652.30" y1="527.40" x2="654.50" y2="527.40" stroke="#8a8a8a" stroke-width="0.6"/>
<text x="667.40" y="529.10" font-size="6.9" fill="#a4a4a4">30</text>
<line x1="652.30" y1="541.30" x2="654.50" y2="541.30" stroke="#8a8a8a" stroke-width="0.6"/>
<text x="667.40" y="543.50" font-size="6.9" fill="#a4a4a4">36</text>
<line x1="652.30" y1="554.30" x2="654.50" y2="554.30" stroke="#8a8a8a" stroke-width="0.6"/>
<text x="667.40" y="556.20" font-size="6.9" fill="#a4a4a4">42</text>
<line x1="652.30" y1="564.70" x2="654.50" y2="564.70" stroke="#8a8a8a" stroke-width="0.6"/>
<text x="667.40" y="566.90" font-size="6.9" fill="#a4a4a4">48</text>
<line x1="652.30" y1="574.60" x2="654.50" y2="574.60" stroke="#8a8a8a" stroke-width="0.6"/>
<text x="667.40" y="577.10" font-size="6.9" fill="#a4a4a4">54</text>
<line x1="652.30" y1="584.10" x2="654.50" y2="584.10" stroke="#8a8a8a" stroke-width="0.6"/>
<text x="667.40" y="585.70" font-size="6.9" fill="#a4a4a4">60</text>
<line x1="652.30" y1="590.20" x2="654.50" y2="590.20" stroke="#8a8a8a" stroke-width="0.6"/>
<polygon points="647.20,483.10 655.40,487.50 647.20,491.90" fill="#c6c6c6"/>
<path d="M627.40,549.22 A8.2,8.2 0 1 1 636.80,549.22" fill="none" stroke="#141414" stroke-width="1.4"/>
<line x1="632.10" y1="542.90" x2="632.10" y2="533.70" stroke="#141414" stroke-width="1.2"/>
<polygon points="629.80,530.00 634.40,530.00 632.10,532.50" fill="#141414"/>
<rect x="624.30" y="553.50" width="15.90" height="15.50" fill="#1c1c1c"/>
<rect x="625.00" y="554.20" width="14.50" height="14.10" fill="#ffad56"/>
<text x="632.20" y="564.60" font-size="9.2" fill="#1a1206" text-anchor="middle" font-weight="bold">17</text>
<rect x="623.90" y="572.50" width="16.50" height="8.80" fill="#1c1c1c"/>
<text x="632.20" y="579.50" font-size="7.0" fill="#c0c0c0" text-anchor="middle" font-weight="bold">S</text>
<rect x="623.90" y="584.50" width="16.50" height="9.30" fill="#1c1c1c"/>
<circle cx="632.20" cy="589.20" r="2.50" fill="#7a7a7a"/>
<rect x="682.20" y="410.30" width="66.30" height="12.00" fill="#d86de5"/>
<text x="684.70" y="419.00" font-size="7.25" fill="#1b1b1b" font-weight="bold" fill-opacity="0.8">FX</text>
<rect x="682.20" y="423.60" width="66.30" height="174.00" fill="#363636"/>
<rect x="682.20" y="599.30" width="66.30" height="4.70" fill="#d86de5"/>
<rect x="687.30" y="427.30" width="24.80" height="9.00" rx="4.5" fill="#1c1c1c"/>
<text x="699.70" y="434.60" font-size="7.4" fill="#c6c6c6" text-anchor="middle">-19.6</text>
<rect x="687.30" y="440.40" width="24.80" height="8.50" fill="#1c1c1c"/>
<rect x="688.00" y="441.10" width="23.40" height="7.10" fill="#2b2b2b"/>
<text x="699.70" y="447.30" font-size="7.4" fill="#c6c6c6" text-anchor="middle">-4.1</text>
<rect x="724.00" y="427.30" width="8.40" height="165.70" rx="0.6" fill="#333333"/>
<rect x="724.00" y="427.30" width="4.00" height="165.70" fill="#1b1b1b"/>
<rect x="724.00" y="506.30" width="4.00" height="18.70" fill="#23b046"/>
<rect x="724.00" y="525.00" width="4.00" height="68.00" fill="#14e858"/>
<rect x="724.00" y="501.30" width="4.00" height="1.00" fill="#14e858"/>
<rect x="728.40" y="427.30" width="4.00" height="165.70" fill="#1b1b1b"/>
<rect x="728.40" y="502.00" width="4.00" height="18.00" fill="#23b046"/>
<rect x="728.40" y="520.00" width="4.00" height="73.00" fill="#14e858"/>
<rect x="728.40" y="498.30" width="4.00" height="1.00" fill="#14e858"/>
<rect x="728.00" y="506.30" width="0.40" height="86.70" fill="#17983a"/>
<line x1="724.00" y1="444.60" x2="732.40" y2="444.60" stroke="#8a8a8a" stroke-width="0.7"/>
<line x1="719.90" y1="428.30" x2="722.10" y2="428.30" stroke="#8a8a8a" stroke-width="0.6"/>
<text x="735.00" y="433.30" font-size="6.9" fill="#a4a4a4">6</text>
<line x1="719.90" y1="444.60" x2="722.10" y2="444.60" stroke="#8a8a8a" stroke-width="0.6"/>
<text x="735.00" y="447.10" font-size="6.9" fill="#a4a4a4">0</text>
<line x1="719.90" y1="461.00" x2="722.10" y2="461.00" stroke="#8a8a8a" stroke-width="0.6"/>
<text x="735.00" y="463.50" font-size="6.9" fill="#a4a4a4">6</text>
<line x1="719.90" y1="477.50" x2="722.10" y2="477.50" stroke="#8a8a8a" stroke-width="0.6"/>
<text x="735.00" y="479.60" font-size="6.9" fill="#a4a4a4">12</text>
<line x1="719.90" y1="493.80" x2="722.10" y2="493.80" stroke="#8a8a8a" stroke-width="0.6"/>
<text x="735.00" y="496.00" font-size="6.9" fill="#a4a4a4">18</text>
<line x1="719.90" y1="510.20" x2="722.10" y2="510.20" stroke="#8a8a8a" stroke-width="0.6"/>
<text x="735.00" y="512.20" font-size="6.9" fill="#a4a4a4">24</text>
<line x1="719.90" y1="527.40" x2="722.10" y2="527.40" stroke="#8a8a8a" stroke-width="0.6"/>
<text x="735.00" y="529.10" font-size="6.9" fill="#a4a4a4">30</text>
<line x1="719.90" y1="541.30" x2="722.10" y2="541.30" stroke="#8a8a8a" stroke-width="0.6"/>
<text x="735.00" y="543.50" font-size="6.9" fill="#a4a4a4">36</text>
<line x1="719.90" y1="554.30" x2="722.10" y2="554.30" stroke="#8a8a8a" stroke-width="0.6"/>
<text x="735.00" y="556.20" font-size="6.9" fill="#a4a4a4">42</text>
<line x1="719.90" y1="564.70" x2="722.10" y2="564.70" stroke="#8a8a8a" stroke-width="0.6"/>
<text x="735.00" y="566.90" font-size="6.9" fill="#a4a4a4">48</text>
<line x1="719.90" y1="574.60" x2="722.10" y2="574.60" stroke="#8a8a8a" stroke-width="0.6"/>
<text x="735.00" y="577.10" font-size="6.9" fill="#a4a4a4">54</text>
<line x1="719.90" y1="584.10" x2="722.10" y2="584.10" stroke="#8a8a8a" stroke-width="0.6"/>
<text x="735.00" y="585.70" font-size="6.9" fill="#a4a4a4">60</text>
<line x1="719.90" y1="590.20" x2="722.10" y2="590.20" stroke="#8a8a8a" stroke-width="0.6"/>
<polygon points="714.80,451.90 723.00,456.30 714.80,460.70" fill="#c6c6c6"/>
<path d="M695.00,549.22 A8.2,8.2 0 1 1 704.40,549.22" fill="none" stroke="#141414" stroke-width="1.4"/>
<line x1="699.70" y1="542.90" x2="699.70" y2="533.70" stroke="#141414" stroke-width="1.2"/>
<polygon points="697.40,530.00 702.00,530.00 699.70,532.50" fill="#141414"/>
<rect x="691.90" y="553.50" width="15.90" height="15.50" fill="#1c1c1c"/>
<rect x="692.60" y="554.20" width="14.50" height="14.10" fill="#ffad56"/>
<text x="699.80" y="564.60" font-size="9.2" fill="#1a1206" text-anchor="middle" font-weight="bold">18</text>
<rect x="691.50" y="572.50" width="16.50" height="8.80" fill="#1c1c1c"/>
<text x="699.80" y="579.50" font-size="7.0" fill="#c0c0c0" text-anchor="middle" font-weight="bold">S</text>
<rect x="691.50" y="584.50" width="16.50" height="9.30" fill="#1c1c1c"/>
<circle cx="699.80" cy="589.20" r="2.50" fill="#7a7a7a"/>
<rect x="749.70" y="410.30" width="60.30" height="12.00" fill="#d86de5"/>
<text x="752.20" y="419.00" font-size="7.25" fill="#1b1b1b" font-weight="bold" fill-opacity="0.8">Zap</text>
<rect x="749.70" y="423.60" width="60.30" height="174.00" fill="#363636"/>
<rect x="749.70" y="599.30" width="60.30" height="4.70" fill="#d86de5"/>
<rect x="761.80" y="427.30" width="24.80" height="9.00" rx="4.5" fill="#1c1c1c"/>
<text x="774.20" y="434.60" font-size="7.4" fill="#c6c6c6" text-anchor="middle">-24.6</text>
<rect x="761.80" y="440.40" width="24.80" height="8.50" fill="#1c1c1c"/>
<rect x="762.50" y="441.10" width="23.40" height="7.10" fill="#2b2b2b"/>
<text x="774.20" y="447.30" font-size="7.4" fill="#c6c6c6" text-anchor="middle">-19.4</text>
<rect x="798.50" y="427.30" width="8.40" height="165.70" rx="0.6" fill="#333333"/>
<rect x="798.50" y="427.30" width="4.00" height="165.70" fill="#1b1b1b"/>
<rect x="798.50" y="523.00" width="4.00" height="20.00" fill="#23b046"/>
<rect x="798.50" y="543.00" width="4.00" height="50.00" fill="#14e858"/>
<rect x="798.50" y="512.00" width="4.00" height="1.00" fill="#14e858"/>
<rect x="802.90" y="427.30" width="4.00" height="165.70" fill="#1b1b1b"/>
<rect x="802.90" y="520.00" width="4.00" height="23.00" fill="#23b046"/>
<rect x="802.90" y="543.00" width="4.00" height="50.00" fill="#14e858"/>
<rect x="802.90" y="513.30" width="4.00" height="1.00" fill="#14e858"/>
<rect x="802.50" y="523.00" width="0.40" height="70.00" fill="#17983a"/>
<line x1="798.50" y1="444.60" x2="806.90" y2="444.60" stroke="#8a8a8a" stroke-width="0.7"/>
<line x1="794.40" y1="428.30" x2="796.60" y2="428.30" stroke="#8a8a8a" stroke-width="0.6"/>
<line x1="794.40" y1="444.60" x2="796.60" y2="444.60" stroke="#8a8a8a" stroke-width="0.6"/>
<line x1="794.40" y1="461.00" x2="796.60" y2="461.00" stroke="#8a8a8a" stroke-width="0.6"/>
<line x1="794.40" y1="477.50" x2="796.60" y2="477.50" stroke="#8a8a8a" stroke-width="0.6"/>
<line x1="794.40" y1="493.80" x2="796.60" y2="493.80" stroke="#8a8a8a" stroke-width="0.6"/>
<line x1="794.40" y1="510.20" x2="796.60" y2="510.20" stroke="#8a8a8a" stroke-width="0.6"/>
<line x1="794.40" y1="527.40" x2="796.60" y2="527.40" stroke="#8a8a8a" stroke-width="0.6"/>
<line x1="794.40" y1="541.30" x2="796.60" y2="541.30" stroke="#8a8a8a" stroke-width="0.6"/>
<line x1="794.40" y1="554.30" x2="796.60" y2="554.30" stroke="#8a8a8a" stroke-width="0.6"/>
<line x1="794.40" y1="564.70" x2="796.60" y2="564.70" stroke="#8a8a8a" stroke-width="0.6"/>
<line x1="794.40" y1="574.60" x2="796.60" y2="574.60" stroke="#8a8a8a" stroke-width="0.6"/>
<line x1="794.40" y1="584.10" x2="796.60" y2="584.10" stroke="#8a8a8a" stroke-width="0.6"/>
<line x1="794.40" y1="590.20" x2="796.60" y2="590.20" stroke="#8a8a8a" stroke-width="0.6"/>
<polygon points="789.30,493.60 797.50,498.00 789.30,502.40" fill="#c6c6c6"/>
<path d="M769.50,549.22 A8.2,8.2 0 1 1 778.90,549.22" fill="none" stroke="#141414" stroke-width="1.4"/>
<line x1="774.20" y1="542.90" x2="774.20" y2="533.70" stroke="#141414" stroke-width="1.2"/>
<polygon points="771.90,530.00 776.50,530.00 774.20,532.50" fill="#141414"/>
<rect x="766.40" y="553.50" width="15.90" height="15.50" fill="#1c1c1c"/>
<rect x="767.10" y="554.20" width="14.50" height="14.10" fill="#ffad56"/>
<text x="774.30" y="564.60" font-size="9.2" fill="#1a1206" text-anchor="middle" font-weight="bold">19</text>
<rect x="766.00" y="572.50" width="16.50" height="8.80" fill="#1c1c1c"/>
<text x="774.30" y="579.50" font-size="7.0" fill="#c0c0c0" text-anchor="middle" font-weight="bold">S</text>
<rect x="766.00" y="584.50" width="16.50" height="9.30" fill="#1c1c1c"/>
<circle cx="774.30" cy="589.20" r="2.70" fill="#c4c4c4"/>
<circle cx="773.80" cy="590.20" r="0.85" fill="#222"/>
<line x1="774.50" y1="590.20" x2="774.80" y2="587.50" stroke="#222" stroke-width="0.7"/>
<rect x="812.30" y="410.30" width="65.80" height="12.00" fill="#d0d0d0"/>
<text x="814.80" y="419.00" font-size="7.25" fill="#1b1b1b" font-weight="bold" fill-opacity="0.8">A Reverb</text>
<rect x="812.30" y="423.60" width="65.80" height="174.00" fill="#363636"/>
<rect x="812.30" y="599.30" width="65.80" height="4.70" fill="#d0d0d0"/>
<rect x="817.40" y="427.30" width="24.80" height="9.00" rx="4.5" fill="#1c1c1c"/>
<text x="829.80" y="434.60" font-size="7.4" fill="#c6c6c6" text-anchor="middle">-50.9</text>
<rect x="817.40" y="440.40" width="24.80" height="8.50" fill="#1c1c1c"/>
<rect x="818.10" y="441.10" width="23.40" height="7.10" fill="#2b2b2b"/>
<text x="829.80" y="447.30" font-size="7.4" fill="#c6c6c6" text-anchor="middle">0</text>
<rect x="854.10" y="427.30" width="8.40" height="165.70" rx="0.6" fill="#333333"/>
<rect x="854.10" y="427.30" width="4.00" height="165.70" fill="#1b1b1b"/>
<rect x="854.10" y="574.50" width="4.00" height="11.00" fill="#23b046"/>
<rect x="854.10" y="585.50" width="4.00" height="7.50" fill="#14e858"/>
<rect x="854.10" y="568.80" width="4.00" height="1.00" fill="#14e858"/>
<rect x="858.50" y="427.30" width="4.00" height="165.70" fill="#1b1b1b"/>
<rect x="858.50" y="572.50" width="4.00" height="13.80" fill="#23b046"/>
<rect x="858.50" y="586.30" width="4.00" height="6.70" fill="#14e858"/>
<rect x="858.10" y="574.50" width="0.40" height="18.50" fill="#17983a"/>
<line x1="854.10" y1="444.60" x2="862.50" y2="444.60" stroke="#8a8a8a" stroke-width="0.7"/>
<line x1="850.00" y1="428.30" x2="852.20" y2="428.30" stroke="#8a8a8a" stroke-width="0.6"/>
<text x="865.10" y="433.30" font-size="6.9" fill="#a4a4a4">6</text>
<line x1="850.00" y1="444.60" x2="852.20" y2="444.60" stroke="#8a8a8a" stroke-width="0.6"/>
<text x="865.10" y="447.10" font-size="6.9" fill="#a4a4a4">0</text>
<line x1="850.00" y1="461.00" x2="852.20" y2="461.00" stroke="#8a8a8a" stroke-width="0.6"/>
<text x="865.10" y="463.50" font-size="6.9" fill="#a4a4a4">6</text>
<line x1="850.00" y1="477.50" x2="852.20" y2="477.50" stroke="#8a8a8a" stroke-width="0.6"/>
<text x="865.10" y="479.60" font-size="6.9" fill="#a4a4a4">12</text>
<line x1="850.00" y1="493.80" x2="852.20" y2="493.80" stroke="#8a8a8a" stroke-width="0.6"/>
<text x="865.10" y="496.00" font-size="6.9" fill="#a4a4a4">18</text>
<line x1="850.00" y1="510.20" x2="852.20" y2="510.20" stroke="#8a8a8a" stroke-width="0.6"/>
<text x="865.10" y="512.20" font-size="6.9" fill="#a4a4a4">24</text>
<line x1="850.00" y1="527.40" x2="852.20" y2="527.40" stroke="#8a8a8a" stroke-width="0.6"/>
<text x="865.10" y="529.10" font-size="6.9" fill="#a4a4a4">30</text>
<line x1="850.00" y1="541.30" x2="852.20" y2="541.30" stroke="#8a8a8a" stroke-width="0.6"/>
<text x="865.10" y="543.50" font-size="6.9" fill="#a4a4a4">36</text>
<line x1="850.00" y1="554.30" x2="852.20" y2="554.30" stroke="#8a8a8a" stroke-width="0.6"/>
<text x="865.10" y="556.20" font-size="6.9" fill="#a4a4a4">42</text>
<line x1="850.00" y1="564.70" x2="852.20" y2="564.70" stroke="#8a8a8a" stroke-width="0.6"/>
<text x="865.10" y="566.90" font-size="6.9" fill="#a4a4a4">48</text>
<line x1="850.00" y1="574.60" x2="852.20" y2="574.60" stroke="#8a8a8a" stroke-width="0.6"/>
<text x="865.10" y="577.10" font-size="6.9" fill="#a4a4a4">54</text>
<line x1="850.00" y1="584.10" x2="852.20" y2="584.10" stroke="#8a8a8a" stroke-width="0.6"/>
<text x="865.10" y="585.70" font-size="6.9" fill="#a4a4a4">60</text>
<line x1="850.00" y1="590.20" x2="852.20" y2="590.20" stroke="#8a8a8a" stroke-width="0.6"/>
<polygon points="844.90,440.60 853.10,445.00 844.90,449.40" fill="#c6c6c6"/>
<path d="M825.10,549.22 A8.2,8.2 0 1 1 834.50,549.22" fill="none" stroke="#141414" stroke-width="1.4"/>
<line x1="829.80" y1="542.90" x2="829.80" y2="533.70" stroke="#141414" stroke-width="1.2"/>
<polygon points="827.50,530.00 832.10,530.00 829.80,532.50" fill="#141414"/>
<rect x="822.00" y="553.50" width="15.90" height="15.50" fill="#1c1c1c"/>
<rect x="822.70" y="554.20" width="14.50" height="14.10" fill="#ffad56"/>
<text x="829.90" y="564.60" font-size="9.2" fill="#1a1206" text-anchor="middle" font-weight="bold">A</text>
<rect x="821.60" y="572.50" width="16.50" height="8.80" fill="#1c1c1c"/>
<text x="829.90" y="579.50" font-size="7.0" fill="#c0c0c0" text-anchor="middle" font-weight="bold">S</text>
<rect x="879.80" y="410.30" width="66.20" height="12.00" fill="#d0d0d0"/>
<text x="882.30" y="419.00" font-size="7.25" fill="#1b1b1b" font-weight="bold" fill-opacity="0.8">B Delay</text>
<rect x="879.80" y="423.60" width="66.20" height="174.00" fill="#363636"/>
<rect x="879.80" y="599.30" width="66.20" height="4.70" fill="#d0d0d0"/>
<rect x="884.90" y="427.30" width="24.80" height="9.00" rx="4.5" fill="#1c1c1c"/>
<text x="897.30" y="434.60" font-size="7.4" fill="#c6c6c6" text-anchor="middle">-55.2</text>
<rect x="884.90" y="440.40" width="24.80" height="8.50" fill="#1c1c1c"/>
<rect x="885.60" y="441.10" width="23.40" height="7.10" fill="#2b2b2b"/>
<text x="897.30" y="447.30" font-size="7.4" fill="#c6c6c6" text-anchor="middle">0</text>
<rect x="921.60" y="427.30" width="8.40" height="165.70" rx="0.6" fill="#333333"/>
<rect x="921.60" y="427.30" width="4.00" height="165.70" fill="#1b1b1b"/>
<rect x="921.60" y="590.00" width="4.00" height="3.00" fill="#14e858"/>
<rect x="921.60" y="577.50" width="4.00" height="1.00" fill="#14e858"/>
<rect x="926.00" y="427.30" width="4.00" height="165.70" fill="#1b1b1b"/>
<rect x="926.00" y="582.50" width="4.00" height="5.50" fill="#23b046"/>
<rect x="926.00" y="588.00" width="4.00" height="5.00" fill="#14e858"/>
<rect x="926.00" y="575.80" width="4.00" height="1.00" fill="#14e858"/>
<rect x="925.60" y="590.00" width="0.40" height="3.00" fill="#17983a"/>
<line x1="921.60" y1="444.60" x2="930.00" y2="444.60" stroke="#8a8a8a" stroke-width="0.7"/>
<line x1="917.50" y1="428.30" x2="919.70" y2="428.30" stroke="#8a8a8a" stroke-width="0.6"/>
<text x="932.60" y="433.30" font-size="6.9" fill="#a4a4a4">6</text>
<line x1="917.50" y1="444.60" x2="919.70" y2="444.60" stroke="#8a8a8a" stroke-width="0.6"/>
<text x="932.60" y="447.10" font-size="6.9" fill="#a4a4a4">0</text>
<line x1="917.50" y1="461.00" x2="919.70" y2="461.00" stroke="#8a8a8a" stroke-width="0.6"/>
<text x="932.60" y="463.50" font-size="6.9" fill="#a4a4a4">6</text>
<line x1="917.50" y1="477.50" x2="919.70" y2="477.50" stroke="#8a8a8a" stroke-width="0.6"/>
<text x="932.60" y="479.60" font-size="6.9" fill="#a4a4a4">12</text>
<line x1="917.50" y1="493.80" x2="919.70" y2="493.80" stroke="#8a8a8a" stroke-width="0.6"/>
<text x="932.60" y="496.00" font-size="6.9" fill="#a4a4a4">18</text>
<line x1="917.50" y1="510.20" x2="919.70" y2="510.20" stroke="#8a8a8a" stroke-width="0.6"/>
<text x="932.60" y="512.20" font-size="6.9" fill="#a4a4a4">24</text>
<line x1="917.50" y1="527.40" x2="919.70" y2="527.40" stroke="#8a8a8a" stroke-width="0.6"/>
<text x="932.60" y="529.10" font-size="6.9" fill="#a4a4a4">30</text>
<line x1="917.50" y1="541.30" x2="919.70" y2="541.30" stroke="#8a8a8a" stroke-width="0.6"/>
<text x="932.60" y="543.50" font-size="6.9" fill="#a4a4a4">36</text>
<line x1="917.50" y1="554.30" x2="919.70" y2="554.30" stroke="#8a8a8a" stroke-width="0.6"/>
<text x="932.60" y="556.20" font-size="6.9" fill="#a4a4a4">42</text>
<line x1="917.50" y1="564.70" x2="919.70" y2="564.70" stroke="#8a8a8a" stroke-width="0.6"/>
<text x="932.60" y="566.90" font-size="6.9" fill="#a4a4a4">48</text>
<line x1="917.50" y1="574.60" x2="919.70" y2="574.60" stroke="#8a8a8a" stroke-width="0.6"/>
<text x="932.60" y="577.10" font-size="6.9" fill="#a4a4a4">54</text>
<line x1="917.50" y1="584.10" x2="919.70" y2="584.10" stroke="#8a8a8a" stroke-width="0.6"/>
<text x="932.60" y="585.70" font-size="6.9" fill="#a4a4a4">60</text>
<line x1="917.50" y1="590.20" x2="919.70" y2="590.20" stroke="#8a8a8a" stroke-width="0.6"/>
<polygon points="912.40,440.60 920.60,445.00 912.40,449.40" fill="#c6c6c6"/>
<path d="M892.60,549.22 A8.2,8.2 0 1 1 902.00,549.22" fill="none" stroke="#141414" stroke-width="1.4"/>
<line x1="897.30" y1="542.90" x2="897.30" y2="533.70" stroke="#141414" stroke-width="1.2"/>
<polygon points="895.00,530.00 899.60,530.00 897.30,532.50" fill="#141414"/>
<rect x="889.50" y="553.50" width="15.90" height="15.50" fill="#1c1c1c"/>
<rect x="890.20" y="554.20" width="14.50" height="14.10" fill="#ffad56"/>
<text x="897.40" y="564.60" font-size="9.2" fill="#1a1206" text-anchor="middle" font-weight="bold">B</text>
<rect x="889.10" y="572.50" width="16.50" height="8.80" fill="#1c1c1c"/>
<text x="897.40" y="579.50" font-size="7.0" fill="#c0c0c0" text-anchor="middle" font-weight="bold">S</text>
<rect x="947.30" y="410.30" width="70.50" height="12.00" fill="#ffffff"/>
<text x="951.00" y="419.00" font-size="7.25" fill="#1b1b1b" font-weight="bold" fill-opacity="0.8">Main</text>
<rect x="947.30" y="423.60" width="70.50" height="174.00" fill="#363636"/>
<rect x="947.30" y="599.30" width="70.50" height="4.70" fill="#ffffff"/>
<rect x="954.40" y="427.30" width="24.80" height="9.00" rx="4.5" fill="#1c1c1c"/>
<text x="966.80" y="434.60" font-size="7.4" fill="#c6c6c6" text-anchor="middle">-0.30</text>
<rect x="954.40" y="440.40" width="24.80" height="8.50" fill="#1c1c1c"/>
<rect x="955.10" y="441.10" width="23.40" height="7.10" fill="#2b2b2b"/>
<text x="966.80" y="447.30" font-size="7.4" fill="#c6c6c6" text-anchor="middle">0</text>
<rect x="991.10" y="427.30" width="8.40" height="165.70" rx="0.6" fill="#333333"/>
<rect x="991.10" y="427.30" width="4.00" height="165.70" fill="#1b1b1b"/>
<rect x="991.10" y="485.00" width="4.00" height="8.00" fill="url(#gmain)"/>
<rect x="991.10" y="493.00" width="4.00" height="100.00" fill="#14e858"/>
<rect x="991.10" y="445.00" width="4.00" height="1.20" fill="#c0392b"/>
<rect x="995.50" y="427.30" width="4.00" height="165.70" fill="#1b1b1b"/>
<rect x="995.50" y="485.00" width="4.00" height="8.00" fill="url(#gmain)"/>
<rect x="995.50" y="493.00" width="4.00" height="100.00" fill="#14e858"/>
<rect x="995.50" y="445.00" width="4.00" height="1.20" fill="#c0392b"/>
<rect x="995.10" y="485.00" width="0.40" height="108.00" fill="#17983a"/>
<line x1="987.00" y1="428.30" x2="989.20" y2="428.30" stroke="#8a8a8a" stroke-width="0.6"/>
<text x="1002.10" y="433.30" font-size="6.9" fill="#a4a4a4">6</text>
<line x1="987.00" y1="444.60" x2="989.20" y2="444.60" stroke="#8a8a8a" stroke-width="0.6"/>
<text x="1002.10" y="447.10" font-size="6.9" fill="#a4a4a4">0</text>
<line x1="987.00" y1="461.00" x2="989.20" y2="461.00" stroke="#8a8a8a" stroke-width="0.6"/>
<text x="1002.10" y="463.50" font-size="6.9" fill="#a4a4a4">6</text>
<line x1="987.00" y1="477.50" x2="989.20" y2="477.50" stroke="#8a8a8a" stroke-width="0.6"/>
<text x="1002.10" y="479.60" font-size="6.9" fill="#a4a4a4">12</text>
<line x1="987.00" y1="493.80" x2="989.20" y2="493.80" stroke="#8a8a8a" stroke-width="0.6"/>
<text x="1002.10" y="496.00" font-size="6.9" fill="#a4a4a4">18</text>
<line x1="987.00" y1="510.20" x2="989.20" y2="510.20" stroke="#8a8a8a" stroke-width="0.6"/>
<text x="1002.10" y="512.20" font-size="6.9" fill="#a4a4a4">24</text>
<line x1="987.00" y1="527.40" x2="989.20" y2="527.40" stroke="#8a8a8a" stroke-width="0.6"/>
<text x="1002.10" y="529.10" font-size="6.9" fill="#a4a4a4">30</text>
<line x1="987.00" y1="541.30" x2="989.20" y2="541.30" stroke="#8a8a8a" stroke-width="0.6"/>
<text x="1002.10" y="543.50" font-size="6.9" fill="#a4a4a4">36</text>
<line x1="987.00" y1="554.30" x2="989.20" y2="554.30" stroke="#8a8a8a" stroke-width="0.6"/>
<text x="1002.10" y="556.20" font-size="6.9" fill="#a4a4a4">42</text>
<line x1="987.00" y1="564.70" x2="989.20" y2="564.70" stroke="#8a8a8a" stroke-width="0.6"/>
<text x="1002.10" y="566.90" font-size="6.9" fill="#a4a4a4">48</text>
<line x1="987.00" y1="574.60" x2="989.20" y2="574.60" stroke="#8a8a8a" stroke-width="0.6"/>
<text x="1002.10" y="577.10" font-size="6.9" fill="#a4a4a4">54</text>
<line x1="987.00" y1="584.10" x2="989.20" y2="584.10" stroke="#8a8a8a" stroke-width="0.6"/>
<text x="1002.10" y="585.70" font-size="6.9" fill="#a4a4a4">60</text>
<line x1="987.00" y1="590.20" x2="989.20" y2="590.20" stroke="#8a8a8a" stroke-width="0.6"/>
<polygon points="981.90,440.60 990.10,445.00 981.90,449.40" fill="#c6c6c6"/>
<path d="M962.10,549.22 A8.2,8.2 0 1 1 971.50,549.22" fill="none" stroke="#141414" stroke-width="1.4"/>
<line x1="966.80" y1="542.90" x2="966.80" y2="533.70" stroke="#141414" stroke-width="1.2"/>
<polygon points="964.50,530.00 969.10,530.00 966.80,532.50" fill="#141414"/>
<rect x="957.90" y="560.40" width="17.60" height="8.90" fill="#9a9a9a"/>
<rect x="958.60" y="561.10" width="16.20" height="7.50" fill="#7e7e7e"/>
<text x="966.80" y="567.50" font-size="7.2" fill="#333333" text-anchor="middle" font-weight="bold">Solo</text>
<path d="M962.10,588.82 A8.2,8.2 0 1 1 974.88,583.52" fill="none" stroke="#3c78d8" stroke-width="1.4"/>
<path d="M974.88,583.52 A8.2,8.2 0 0 1 971.50,588.82" fill="none" stroke="#141414" stroke-width="1.4"/>
<line x1="966.80" y1="582.10" x2="974.88" y2="583.52" stroke="#141414" stroke-width="1.3"/>
<path d="M965.20,591.10 A2.5,2.5 0 1 1 968.40,591.10" fill="none" stroke="#d2d2d2" stroke-width="0.9"/>
<rect x="964.30" y="589.50" width="1.20" height="2.00" fill="#d2d2d2"/>
<rect x="968.10" y="589.50" width="1.20" height="2.00" fill="#d2d2d2"/>
</g>
</svg></div>
<div id="statusbar" class="sec" style="top:606px;height:24px"><svg width="1024" height="24" viewBox="0 606 1024 24">
<rect x="0.00" y="606.00" width="1024.00" height="24.00" fill="#292929"/>
<circle cx="13.20" cy="616.90" r="5.20" fill="#474747"/>
<text x="13.20" y="620.00" font-size="8.6" fill="#292929" text-anchor="middle" font-weight="bold">i</text>
<rect x="30.00" y="610.40" width="640.00" height="13.00" rx="2" fill="#353535"/>
<rect x="677.50" y="610.30" width="12.20" height="13.10" rx="1.5" fill="#353535"/>
<polygon points="681.80,614.40 681.80,619.40 686.00,616.90" fill="#c0c0c0"/>
<rect x="690.80" y="610.30" width="142.20" height="13.10" rx="1.5" fill="#353535"/>
<path d="M695.20,619.30h2.20v0.80h-2.20zM693.20,620.60h2.40v0.80h-2.40zM692.30,612.30h2.00v0.80h-2.00zM704.10,619.30h2.20v0.80h-2.20zM706.90,620.60h2.40v0.80h-2.40zM705.40,612.30h0.90v0.80h-0.90zM713.00,619.30h2.20v0.80h-2.20zM711.00,620.60h2.40v0.80h-2.40zM721.90,619.30h2.20v0.80h-2.20zM724.70,620.60h2.40v0.80h-2.40zM723.20,612.30h0.90v0.80h-0.90zM730.80,619.30h2.20v0.80h-2.20zM728.80,620.60h2.40v0.80h-2.40zM727.90,612.30h2.00v0.80h-2.00zM739.70,619.30h2.20v0.80h-2.20zM742.50,620.60h2.40v0.80h-2.40zM741.00,612.30h0.90v0.80h-0.90zM748.60,619.30h2.20v0.80h-2.20zM746.60,620.60h2.40v0.80h-2.40zM757.50,619.30h2.20v0.80h-2.20zM760.30,620.60h2.40v0.80h-2.40zM758.80,612.30h0.90v0.80h-0.90zM766.40,619.30h2.20v0.80h-2.20zM764.40,620.60h2.40v0.80h-2.40zM763.50,612.30h2.00v0.80h-2.00zM775.30,619.30h2.20v0.80h-2.20zM778.10,620.60h2.40v0.80h-2.40zM776.60,612.30h0.90v0.80h-0.90zM784.20,619.30h2.20v0.80h-2.20zM782.20,620.60h2.40v0.80h-2.40zM793.10,619.30h2.20v0.80h-2.20zM795.90,620.60h2.40v0.80h-2.40zM794.40,612.30h0.90v0.80h-0.90zM802.00,619.30h2.20v0.80h-2.20zM800.00,620.60h2.40v0.80h-2.40zM799.10,612.30h2.00v0.80h-2.00zM810.90,619.30h2.20v0.80h-2.20zM813.70,620.60h2.40v0.80h-2.40zM812.20,612.30h0.90v0.80h-0.90zM819.80,619.30h2.20v0.80h-2.20zM817.80,620.60h2.40v0.80h-2.40zM828.70,619.30h2.20v0.80h-2.20zM830.00,612.30h0.90v0.80h-0.90z" fill="#151515" fill-opacity="0.9"/>
<line x1="802.60" y1="610.40" x2="802.60" y2="622.60" stroke="#e0e0e0" stroke-width="1.0"/>
<rect x="839.90" y="609.60" width="13.70" height="14.10" rx="1.5" fill="#353535"/>
<polygon points="844.60,614.20 844.60,619.20 848.80,616.70" fill="#c0c0c0"/>
<rect x="854.50" y="609.60" width="23.70" height="14.10" fill="#353535"/>
<text x="866.30" y="619.30" font-size="7.4" fill="#c6c6c6" text-anchor="middle" font-weight="bold">Bass</text>
<rect x="879.00" y="610.10" width="8.30" height="13.20" fill="#1c1e20"/>
<rect x="887.60" y="610.10" width="9.80" height="13.20" fill="#393939"/>
<rect x="897.70" y="610.10" width="28.70" height="13.20" fill="#1d1f21"/>
<rect x="926.70" y="610.10" width="18.90" height="13.20" fill="#3a3a3a"/>
<rect x="946.40" y="610.10" width="19.20" height="13.20" fill="#333537"/>
<rect x="966.40" y="610.10" width="17.60" height="13.20" fill="#3a3a3a"/>
<rect x="879.30" y="611.00" width="7.70" height="2.00" fill="#1593a8"/>
<rect x="879.30" y="617.40" width="7.70" height="1.50" fill="#d3913f"/>
<rect x="881.50" y="614.60" width="3.50" height="0.70" fill="#0f6f80"/>
<rect x="881.80" y="620.60" width="2.80" height="0.70" fill="#8a6430"/>
<circle cx="890.00" cy="613.60" r="1.50" fill="none" stroke="#6a6a6a" stroke-width="0.7"/>
<circle cx="894.60" cy="613.60" r="1.50" fill="none" stroke="#1593a8" stroke-width="0.7"/>
<circle cx="890.00" cy="620.00" r="1.50" fill="none" stroke="#d3913f" stroke-width="0.7"/>
<circle cx="894.60" cy="620.00" r="1.50" fill="none" stroke="#d3913f" stroke-width="0.7"/>
<rect x="898.40" y="612.60" width="13.20" height="9.00" fill="#141516"/>
<rect x="912.60" y="612.60" width="13.00" height="9.00" fill="#141516"/>
<rect x="902.20" y="611.00" width="5.00" height="1.20" fill="#1593a8"/>
<path d="M899,619.5 L900.2,614.8 L908.5,614.8 L910.6,619.5" fill="none" stroke="#0f7f92" stroke-width="0.7"/>
<path d="M913.2,620 L913.6,614.0 L916,617.2 L921,618.6 L925,619" fill="none" stroke="#0f7f92" stroke-width="0.7"/>
<rect x="899.60" y="622.00" width="1.60" height="0.70" fill="#8a3a3a"/>
<rect x="902.40" y="622.00" width="1.60" height="0.70" fill="#8a3a3a"/>
<rect x="909.00" y="622.00" width="1.60" height="0.70" fill="#1593a8"/>
<rect x="914.00" y="622.00" width="1.60" height="0.70" fill="#8a3a3a"/>
<rect x="918.00" y="622.00" width="1.60" height="0.70" fill="#1593a8"/>
<rect x="922.00" y="622.00" width="1.60" height="0.70" fill="#1593a8"/>
<rect x="941.20" y="611.00" width="3.80" height="2.80" fill="#d3913f"/>
<rect x="931.00" y="611.40" width="2.00" height="0.90" fill="#6a6a6a"/>
<rect x="937.80" y="611.40" width="2.00" height="0.90" fill="#1593a8"/>
<rect x="927.60" y="613.70" width="2.00" height="0.90" fill="#1593a8"/>
<rect x="934.40" y="613.70" width="2.00" height="0.90" fill="#6a6a6a"/>
<rect x="931.00" y="616.00" width="2.00" height="0.90" fill="#1593a8"/>
<rect x="934.40" y="616.00" width="2.00" height="0.90" fill="#6a6a6a"/>
<rect x="937.80" y="616.00" width="2.00" height="0.90" fill="#1593a8"/>
<rect x="931.00" y="618.30" width="2.00" height="0.90" fill="#6a6a6a"/>
<rect x="937.80" y="618.30" width="2.00" height="0.90" fill="#6a6a6a"/>
<rect x="927.60" y="620.60" width="2.00" height="0.90" fill="#6a6a6a"/>
<rect x="931.00" y="620.60" width="2.00" height="0.90" fill="#6a6a6a"/>
<rect x="934.40" y="620.60" width="2.00" height="0.90" fill="#6a6a6a"/>
<rect x="936.00" y="616.00" width="8.60" height="1.00" fill="#222"/>
<rect x="947.00" y="616.60" width="8.00" height="6.20" fill="#1a1b1c"/>
<rect x="947.20" y="610.60" width="1.40" height="1.00" fill="#d3913f"/>
<rect x="954.60" y="611.60" width="1.20" height="1.20" fill="#1593a8"/>
<rect x="955.60" y="620.60" width="4.00" height="2.20" fill="#1593a8"/>
<rect x="961.00" y="621.00" width="3.80" height="1.60" fill="#0f7f92"/>
<rect x="961.00" y="614.60" width="3.80" height="1.20" fill="#d3913f"/>
<rect x="956.60" y="614.00" width="2.40" height="1.00" fill="#1593a8"/>
<rect x="961.40" y="611.60" width="2.60" height="1.00" fill="#0f7f92"/>
<rect x="957.60" y="617.60" width="1.00" height="1.80" fill="#d3913f"/>
<rect x="948.60" y="619.00" width="2.40" height="0.70" fill="#8a6430"/>
<rect x="951.60" y="620.60" width="2.40" height="0.70" fill="#8a6430"/>
<rect x="969.60" y="611.80" width="9.40" height="10.60" fill="#161718"/>
<rect x="980.00" y="611.20" width="3.40" height="1.60" fill="#d3913f"/>
<rect x="980.00" y="614.20" width="3.40" height="1.60" fill="#d3913f"/>
<rect x="980.00" y="619.60" width="3.40" height="2.00" fill="#0f7f92"/>
<rect x="967.00" y="613.40" width="2.00" height="1.00" fill="#1593a8"/>
<rect x="967.00" y="616.40" width="2.00" height="1.00" fill="#5a5a5a"/>
<rect x="967.00" y="620.00" width="2.00" height="1.00" fill="#1593a8"/>
<line x1="972.60" y1="612.20" x2="972.60" y2="622.00" stroke="#222" stroke-width="0.5"/>
<line x1="975.80" y1="612.20" x2="975.80" y2="622.00" stroke="#222" stroke-width="0.5"/>
<rect x="996.00" y="614.80" width="1.50" height="6.60" fill="#e89e4c"/>
<rect x="998.90" y="612.00" width="1.40" height="9.40" fill="#e89e4c"/>
<rect x="1001.70" y="615.70" width="1.40" height="5.70" fill="#e89e4c"/>
<rect x="1004.90" y="613.30" width="1.50" height="8.10" fill="#e89e4c"/>
<polygon points="1011.20,615.10 1014.80,615.10 1013.00,617.70" fill="#474747"/>
</svg></div>
</body></html>
